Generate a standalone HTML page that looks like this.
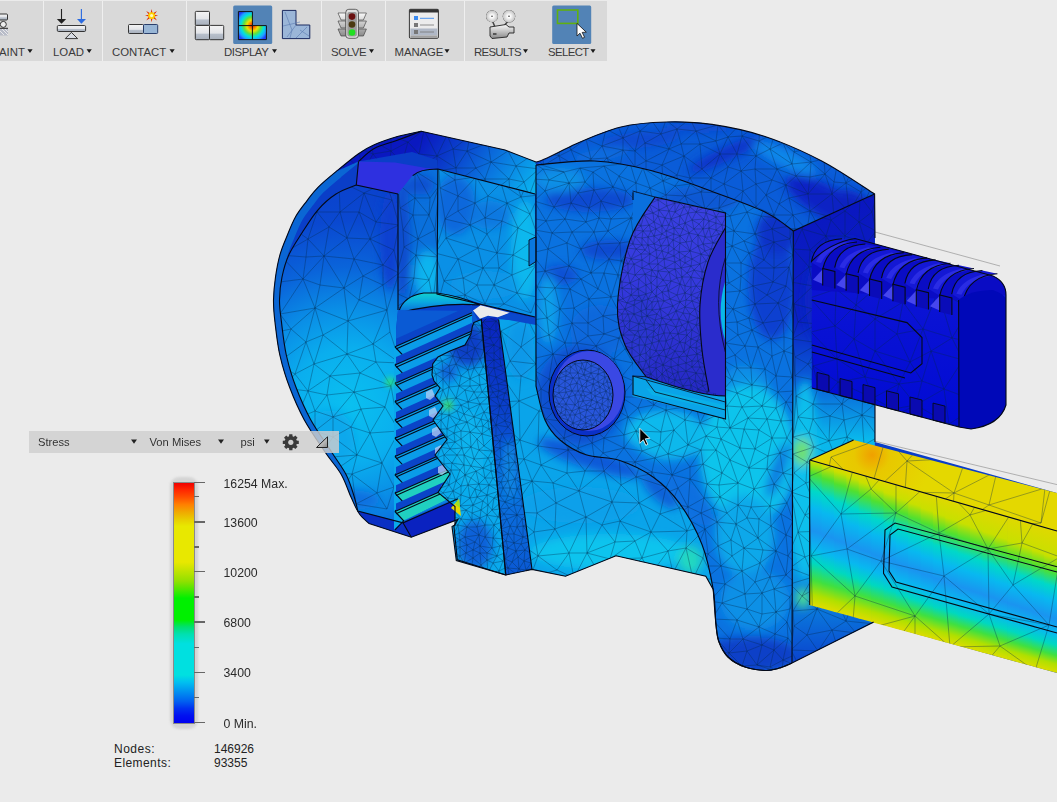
<!DOCTYPE html>
<html><head><meta charset="utf-8">
<style>
html,body{margin:0;padding:0;}
body{width:1057px;height:802px;overflow:hidden;background:#ebebeb;position:relative;font-family:"Liberation Sans",sans-serif;}
.abs{position:absolute;}
#tb{position:absolute;left:0;top:0;width:607px;height:61px;background:#d9d9d9;}
.sep{position:absolute;top:1px;width:1px;height:60px;background:#efefef;}
.lbl{position:absolute;top:46px;font-size:11.4px;color:#3a3a3a;white-space:nowrap;letter-spacing:0px;}
.arr{display:inline-block;width:0;height:0;border-left:3px solid transparent;border-right:3px solid transparent;border-top:4px solid #222;margin-left:3px;vertical-align:2px;}
#wr{position:absolute;left:0;top:0;}
#legend{position:absolute;left:29px;top:431px;width:310px;height:22px;background:rgba(206,206,206,0.82);}
.lg{position:absolute;top:5px;font-size:11.2px;color:#333;}
.tick{position:absolute;height:1px;background:#666;}
.cbl{position:absolute;font-size:12.3px;color:#2a2a2a;}
.st{position:absolute;font-size:12px;color:#222;}
</style></head>
<body>
<svg id="wr" width="1057" height="802" viewBox="0 0 1057 802">
<defs>
<filter id="bl5" x="-50%" y="-50%" width="200%" height="200%"><feGaussianBlur stdDeviation="5"/></filter>
<filter id="bl3" x="-50%" y="-50%" width="200%" height="200%"><feGaussianBlur stdDeviation="3"/></filter>
<filter id="bl8" x="-50%" y="-50%" width="200%" height="200%"><feGaussianBlur stdDeviation="8"/></filter>
<linearGradient id="hf" gradientUnits="userSpaceOnUse" x1="900" y1="486" x2="872" y2="630">
<stop offset="0" stop-color="#d8dc00"/>
<stop offset="0.08" stop-color="#a8e000"/>
<stop offset="0.16" stop-color="#50e030"/>
<stop offset="0.26" stop-color="#00d8c8"/>
<stop offset="0.36" stop-color="#08b8f0"/>
<stop offset="0.5" stop-color="#1890f0"/>
<stop offset="0.62" stop-color="#08b8f0"/>
<stop offset="0.72" stop-color="#00d8c0"/>
<stop offset="0.8" stop-color="#30e040"/>
<stop offset="0.88" stop-color="#a0e000"/>
<stop offset="1" stop-color="#e0dc00"/>
</linearGradient>
<radialGradient id="ht" gradientUnits="userSpaceOnUse" cx="872" cy="455" r="60">
<stop offset="0" stop-color="#f0a000"/>
<stop offset="0.3" stop-color="#e8c800"/>
<stop offset="1" stop-color="#e4d800"/>
</radialGradient>
<linearGradient id="sidef" gradientUnits="userSpaceOnUse" x1="0" y1="195" x2="0" y2="665">
<stop offset="0" stop-color="#0a16c0"/>
<stop offset="0.27" stop-color="#0a22c4"/>
<stop offset="0.4" stop-color="#0a60d8"/>
<stop offset="0.52" stop-color="#0ab8ec"/>
<stop offset="0.75" stop-color="#0aa4e6"/>
<stop offset="0.9" stop-color="#0a70da"/>
<stop offset="1" stop-color="#0a40cc"/>
</linearGradient>
<linearGradient id="mbf" gradientUnits="userSpaceOnUse" x1="0" y1="165" x2="0" y2="670">
<stop offset="0" stop-color="#0a58d8"/>
<stop offset="0.25" stop-color="#0a68dc"/>
<stop offset="0.5" stop-color="#0a80e0"/>
<stop offset="0.7" stop-color="#0aa0e6"/>
<stop offset="0.85" stop-color="#0a80e0"/>
<stop offset="1" stop-color="#0a40d0"/>
</linearGradient>
<linearGradient id="lbf" gradientUnits="userSpaceOnUse" x1="0" y1="320" x2="0" y2="580">
<stop offset="0" stop-color="#0a88e6"/>
<stop offset="0.5" stop-color="#0aa4ea"/>
<stop offset="1" stop-color="#0ab4e8"/>
</linearGradient>
<radialGradient id="hdf" gradientUnits="userSpaceOnUse" cx="350" cy="405" r="230">
<stop offset="0" stop-color="#0ac0f0"/>
<stop offset="0.25" stop-color="#0aaeee"/>
<stop offset="0.42" stop-color="#0a8ee6"/>
<stop offset="0.6" stop-color="#0a64da"/>
<stop offset="0.8" stop-color="#0a48d0"/>
<stop offset="1" stop-color="#0a40cc"/>
</radialGradient>
<linearGradient id="htop" gradientUnits="userSpaceOnUse" x1="425" y1="133" x2="525" y2="200">
<stop offset="0" stop-color="#0a18c0"/>
<stop offset="0.3" stop-color="#0a40cc"/>
<stop offset="0.65" stop-color="#0a78e0"/>
<stop offset="1" stop-color="#0ab0ee"/>
</linearGradient>
<linearGradient id="rollg" gradientUnits="userSpaceOnUse" x1="0" y1="197" x2="0" y2="396">
<stop offset="0" stop-color="#3a40e2"/>
<stop offset="0.5" stop-color="#3438dc"/>
<stop offset="1" stop-color="#2428c4"/>
</linearGradient>
<linearGradient id="stripg" gradientUnits="userSpaceOnUse" x1="0" y1="320" x2="0" y2="575">
<stop offset="0" stop-color="#0a24c0"/>
<stop offset="0.35" stop-color="#0a40cc"/>
<stop offset="0.7" stop-color="#0a70de"/>
<stop offset="1" stop-color="#0a58d4"/>
</linearGradient>
<linearGradient id="lensg" gradientUnits="userSpaceOnUse" x1="0" y1="293" x2="0" y2="311">
<stop offset="0" stop-color="#10d0d0"/>
<stop offset="0.5" stop-color="#0aa8e0"/>
<stop offset="1" stop-color="#0a70d8"/>
</linearGradient>
<linearGradient id="screwg" gradientUnits="userSpaceOnUse" x1="0" y1="240" x2="0" y2="430">
<stop offset="0" stop-color="#1018d4"/>
<stop offset="1" stop-color="#000ad4"/>
</linearGradient>
<clipPath id="csil"><path d="M369.0,523.5 C367.4,521.9 362.3,518.1 359.3,513.8 C356.3,509.5 354.2,504.1 351.2,497.6 C348.2,491.1 345.8,482.5 341.5,474.9 C337.2,467.3 331.4,461.4 325.2,452.2 C319.0,443.0 310.1,430.5 304.2,419.7 C298.3,408.9 293.7,398.1 289.6,387.3 C285.5,376.5 282.2,365.7 279.8,354.9 C277.4,344.1 276.1,331.5 275.0,322.4 C273.9,313.2 273.4,307.6 273.5,300.0 C273.6,292.4 274.4,284.6 275.5,277.0 C276.6,269.4 278.1,261.3 280.0,254.6 C281.9,247.9 284.1,243.0 286.7,236.7 C289.3,230.3 292.3,222.5 295.7,216.5 C299.1,210.5 303.2,205.7 306.9,200.8 C310.6,195.9 313.1,192.2 318.0,187.3 C322.9,182.4 329.2,177.2 336.0,171.6 C342.8,166.0 352.1,158.2 358.5,153.7 C364.9,149.2 367.8,147.5 374.2,144.7 C380.6,141.9 388.8,139.1 396.6,136.8 C404.5,134.6 417.2,132.1 421.3,131.2 L505,150 L536,162 C542.6,161.4 561.5,150.3 575.7,144.0 C589.9,137.7 605.9,130.7 621.0,127.0 C636.1,123.3 651.3,122.4 666.5,122.0 C681.7,121.6 695.6,122.0 712.0,124.4 C728.4,126.8 746.7,130.4 765.0,136.5 C783.3,142.6 803.4,151.4 821.7,161.0 C840.0,170.6 865.8,188.5 874.6,194.0 L875,238 L875,405 L875,442 L1057,493 L1057,673 L873.6,622 L792,663 C789.7,663.9 782.5,667.2 778.0,668.5 C773.5,669.8 770.5,670.8 765.0,670.5 C759.5,670.2 751.2,669.2 745.0,667.0 C738.8,664.8 732.3,661.2 728.0,657.0 C723.7,652.8 721.0,647.3 719.0,642.0 C717.0,636.7 717.0,633.8 716.0,625.0 C715.0,616.2 713.7,595.3 713.2,589.4 L705.8,576.3 L616,555.8 L565.5,576.3 L532,569.4 L505.8,575 L457.3,559.8 L453.9,526.2 L458,519.4 L411.3,537.2 Z"/></clipPath>
<clipPath id="c1"><path d="M793.3,231.0 L874.6,194.0 L875.0,622.0 L792.0,663.0 Z"/></clipPath>
<clipPath id="c2"><path d="M536.0,165.0 C542.6,161.4 561.5,150.3 575.7,144.0 C589.9,137.7 605.9,130.7 621.0,127.0 C636.1,123.3 651.3,122.4 666.5,122.0 C681.7,121.6 695.6,122.0 712.0,124.4 C728.4,126.8 746.7,130.4 765.0,136.5 C783.3,142.6 803.4,151.4 821.7,161.0 C840.0,170.6 865.8,188.5 874.6,194.0 L793.3,231 C788.6,227.8 778.5,218.6 765.0,212.0 C751.5,205.4 731.0,198.3 712.0,191.4 C693.0,184.5 670.6,175.6 651.0,170.5 C631.4,165.4 613.8,161.9 594.6,161.0 C575.4,160.1 545.8,164.3 536.0,165.0 Z"/></clipPath>
<clipPath id="c3"><path d="M536.0,165.0 C545.8,164.3 575.4,160.1 594.6,161.0 C613.8,161.9 631.4,165.4 651.0,170.5 C670.6,175.6 693.0,184.5 712.0,191.4 C731.0,198.3 751.5,205.4 765.0,212.0 C778.5,218.6 788.6,227.8 793.3,231.0 L792,663 C789.7,663.9 782.5,667.2 778.0,668.5 C773.5,669.8 770.5,670.8 765.0,670.5 C759.5,670.2 751.2,669.2 745.0,667.0 C738.8,664.8 732.3,661.2 728.0,657.0 C723.7,652.8 721.0,647.3 719.0,642.0 C717.0,636.7 717.0,633.8 716.0,625.0 C715.0,616.2 715.5,602.8 713.2,589.4 C710.9,576.0 707.6,558.8 702.0,544.5 C696.4,530.2 687.7,514.6 679.6,503.4 C671.5,492.2 663.4,484.4 653.4,477.2 C643.4,470.0 631.0,464.1 619.8,460.4 C608.6,456.7 596.0,458.2 586.0,454.8 C576.0,451.4 566.8,445.8 560.0,440.0 C553.2,434.2 549.0,429.0 545.0,420.0 C541.0,411.0 537.5,391.7 536.0,386.0 Z"/></clipPath>
<clipPath id="c4"><path d="M497,319 L536,322 L536,386 C537.5,391.7 541.0,411.0 545.0,420.0 C549.0,429.0 553.2,434.2 560.0,440.0 C566.8,445.8 576.0,451.4 586.0,454.8 C596.0,458.2 608.6,456.7 619.8,460.4 C631.0,464.1 643.4,470.0 653.4,477.2 C663.4,484.4 671.5,492.2 679.6,503.4 C687.7,514.6 696.4,530.2 702.0,544.5 C707.6,558.8 711.3,581.9 713.2,589.4 L705.8,576.3 L616,555.8 L565.5,576.3 L532,569.4 L505.8,575 Z"/></clipPath>
<clipPath id="c5"><path d="M398.0,194.0 L356.3,185 C352.9,186.5 342.4,189.9 336.0,194.0 C329.6,198.1 323.6,203.4 318.0,209.8 C312.4,216.2 307.2,224.7 302.4,232.2 C297.6,239.7 292.4,247.1 289.0,254.6 C285.6,262.1 283.6,269.4 282.0,277.0 C280.4,284.6 279.6,292.4 279.5,300.0 C279.4,307.6 280.4,313.2 281.5,322.4 C282.6,331.6 283.9,344.2 286.3,355.0 C288.7,365.8 291.9,376.5 296.0,387.3 C300.1,398.1 304.8,408.9 310.7,419.7 C316.6,430.5 325.8,443.0 331.7,452.2 C337.6,461.4 342.6,467.7 346.3,475.0 C350.0,482.3 352.1,490.0 354.0,496.0 C355.9,502.0 357.2,508.5 357.8,511.0 L403,522.8 L396,330 L398,310 Z"/></clipPath>
<clipPath id="c6"><path d="M421.3,131.2 L505.0,150.0 L536.0,162.0 L536.0,194.0 L437.9,169.0 L437.0,160.0 L412.0,152.0 L358.5,161.5 L336.0,171.6 L358.5,153.7 L374.2,144.7 L396.6,136.8 Z"/></clipPath>
<clipPath id="c7"><path d="M398,194 L412.7,175.6 Q420,169 437.9,169 L437,294 L400,312 L398,310 Z"/></clipPath>
<clipPath id="c8"><path d="M437.9,169.0 L535.0,194.0 L535.0,317.0 L437.0,294.0 Z"/></clipPath>
<clipPath id="c9"><path d="M473.9,322.4 L481.3,319.5 L505.8,575.0 L456.3,560.6 L452.0,526.6 L455.0,525.0 L455.0,506.5 L438.0,492.5 L450.0,474.0 L435.0,455.0 L447.0,439.5 L433.0,420.0 L443.0,406.0 L435.0,396.0 L440.0,388.0 L434.0,381.0 L432.0,375.0 L432.7,364.0 L438.0,357.0 L450.0,351.0 L465.0,345.0 L470.9,334.4 L472.4,326.2 Z"/></clipPath>
<clipPath id="c10"><path d="M481.3,319.5 L494.8,317.2 L498.6,319.5 L532.0,569.4 L505.8,575.0 Z"/></clipPath>
<clipPath id="c11"><path d="M655.0,197.0 L725.3,213.5 L725.3,396 Q700,396 646,376.7 C642.5,371.4 629.8,357.0 625.0,345.0 C620.2,333.0 616.7,322.3 617.5,304.8 C618.3,287.3 623.8,258.0 630.0,240.0 C636.2,222.0 650.8,204.2 655.0,197.0 Z"/></clipPath>
<clipPath id="c12"><path d="M553,395 A30,35 0 1,0 613,395 A30,35 0 1,0 553,395 Z"/></clipPath>
<clipPath id="c13"><path d="M811.8,261 Q830,243 855,238.5 L993,276 Q1006,282 1006,295 L1006,405 Q1000,425 971,429 L959,427 L811.8,388 Z"/></clipPath>
<clipPath id="c14"><path d="M809.7,460.0 L853.6,440.0 L1057.0,493.0 L1057.0,531.0 Z"/></clipPath>
<linearGradient id="hs0" gradientUnits="userSpaceOnUse" gradientTransform="matrix(1 0.2815 0 1 0 -227.9)" x1="815.9" y1="460" x2="815.9" y2="605"><stop offset="0.000" stop-color="#e0d800"/><stop offset="0.006" stop-color="#c8e000"/><stop offset="0.087" stop-color="#50e030"/><stop offset="0.207" stop-color="#00d8c8"/><stop offset="0.327" stop-color="#08b8f0"/><stop offset="0.484" stop-color="#1a94f0"/><stop offset="0.604" stop-color="#08b8f0"/><stop offset="0.704" stop-color="#00d8c0"/><stop offset="0.821" stop-color="#40e040"/><stop offset="0.921" stop-color="#b0e000"/><stop offset="1.000" stop-color="#e0dc00"/></linearGradient>
<linearGradient id="hs1" gradientUnits="userSpaceOnUse" gradientTransform="matrix(1 0.2815 0 1 0 -227.9)" x1="828.2" y1="460" x2="828.2" y2="605"><stop offset="0.000" stop-color="#e0d800"/><stop offset="0.018" stop-color="#c8e000"/><stop offset="0.101" stop-color="#50e030"/><stop offset="0.221" stop-color="#00d8c8"/><stop offset="0.340" stop-color="#08b8f0"/><stop offset="0.493" stop-color="#1a94f0"/><stop offset="0.612" stop-color="#08b8f0"/><stop offset="0.710" stop-color="#00d8c0"/><stop offset="0.825" stop-color="#40e040"/><stop offset="0.921" stop-color="#b0e000"/><stop offset="1.000" stop-color="#e0dc00"/></linearGradient>
<linearGradient id="hs2" gradientUnits="userSpaceOnUse" gradientTransform="matrix(1 0.2815 0 1 0 -227.9)" x1="840.6" y1="460" x2="840.6" y2="605"><stop offset="0.000" stop-color="#e0d800"/><stop offset="0.030" stop-color="#c8e000"/><stop offset="0.115" stop-color="#50e030"/><stop offset="0.235" stop-color="#00d8c8"/><stop offset="0.353" stop-color="#08b8f0"/><stop offset="0.502" stop-color="#1a94f0"/><stop offset="0.620" stop-color="#08b8f0"/><stop offset="0.718" stop-color="#00d8c0"/><stop offset="0.827" stop-color="#40e040"/><stop offset="0.923" stop-color="#b0e000"/><stop offset="1.000" stop-color="#e0dc00"/></linearGradient>
<linearGradient id="hs3" gradientUnits="userSpaceOnUse" gradientTransform="matrix(1 0.2815 0 1 0 -227.9)" x1="853.0" y1="460" x2="853.0" y2="605"><stop offset="0.000" stop-color="#e0d800"/><stop offset="0.042" stop-color="#c8e000"/><stop offset="0.129" stop-color="#50e030"/><stop offset="0.249" stop-color="#00d8c8"/><stop offset="0.365" stop-color="#08b8f0"/><stop offset="0.511" stop-color="#1a94f0"/><stop offset="0.628" stop-color="#08b8f0"/><stop offset="0.724" stop-color="#00d8c0"/><stop offset="0.831" stop-color="#40e040"/><stop offset="0.923" stop-color="#b0e000"/><stop offset="1.000" stop-color="#e0dc00"/></linearGradient>
<linearGradient id="hs4" gradientUnits="userSpaceOnUse" gradientTransform="matrix(1 0.2815 0 1 0 -227.9)" x1="865.3" y1="460" x2="865.3" y2="605"><stop offset="0.000" stop-color="#e0d800"/><stop offset="0.054" stop-color="#c8e000"/><stop offset="0.143" stop-color="#50e030"/><stop offset="0.263" stop-color="#00d8c8"/><stop offset="0.379" stop-color="#08b8f0"/><stop offset="0.520" stop-color="#1a94f0"/><stop offset="0.636" stop-color="#08b8f0"/><stop offset="0.732" stop-color="#00d8c0"/><stop offset="0.833" stop-color="#40e040"/><stop offset="0.925" stop-color="#b0e000"/><stop offset="1.000" stop-color="#e0dc00"/></linearGradient>
<linearGradient id="hs5" gradientUnits="userSpaceOnUse" gradientTransform="matrix(1 0.2815 0 1 0 -227.9)" x1="877.7" y1="460" x2="877.7" y2="605"><stop offset="0.000" stop-color="#e0d800"/><stop offset="0.066" stop-color="#c8e000"/><stop offset="0.157" stop-color="#50e030"/><stop offset="0.277" stop-color="#00d8c8"/><stop offset="0.392" stop-color="#08b8f0"/><stop offset="0.529" stop-color="#1a94f0"/><stop offset="0.644" stop-color="#08b8f0"/><stop offset="0.738" stop-color="#00d8c0"/><stop offset="0.837" stop-color="#40e040"/><stop offset="0.926" stop-color="#b0e000"/><stop offset="1.000" stop-color="#e0dc00"/></linearGradient>
<linearGradient id="hs6" gradientUnits="userSpaceOnUse" gradientTransform="matrix(1 0.2815 0 1 0 -227.9)" x1="890.1" y1="460" x2="890.1" y2="605"><stop offset="0.000" stop-color="#e0d800"/><stop offset="0.078" stop-color="#c8e000"/><stop offset="0.171" stop-color="#50e030"/><stop offset="0.291" stop-color="#00d8c8"/><stop offset="0.405" stop-color="#08b8f0"/><stop offset="0.538" stop-color="#1a94f0"/><stop offset="0.652" stop-color="#08b8f0"/><stop offset="0.746" stop-color="#00d8c0"/><stop offset="0.839" stop-color="#40e040"/><stop offset="0.927" stop-color="#b0e000"/><stop offset="1.000" stop-color="#e0dc00"/></linearGradient>
<linearGradient id="hs7" gradientUnits="userSpaceOnUse" gradientTransform="matrix(1 0.2815 0 1 0 -227.9)" x1="902.4" y1="460" x2="902.4" y2="605"><stop offset="0.000" stop-color="#e0d800"/><stop offset="0.090" stop-color="#c8e000"/><stop offset="0.185" stop-color="#50e030"/><stop offset="0.305" stop-color="#00d8c8"/><stop offset="0.417" stop-color="#08b8f0"/><stop offset="0.547" stop-color="#1a94f0"/><stop offset="0.660" stop-color="#08b8f0"/><stop offset="0.752" stop-color="#00d8c0"/><stop offset="0.843" stop-color="#40e040"/><stop offset="0.927" stop-color="#b0e000"/><stop offset="1.000" stop-color="#e0dc00"/></linearGradient>
<linearGradient id="hs8" gradientUnits="userSpaceOnUse" gradientTransform="matrix(1 0.2815 0 1 0 -227.9)" x1="914.8" y1="460" x2="914.8" y2="605"><stop offset="0.000" stop-color="#e0d800"/><stop offset="0.102" stop-color="#c8e000"/><stop offset="0.199" stop-color="#50e030"/><stop offset="0.319" stop-color="#00d8c8"/><stop offset="0.430" stop-color="#08b8f0"/><stop offset="0.556" stop-color="#1a94f0"/><stop offset="0.668" stop-color="#08b8f0"/><stop offset="0.760" stop-color="#00d8c0"/><stop offset="0.845" stop-color="#40e040"/><stop offset="0.929" stop-color="#b0e000"/><stop offset="1.000" stop-color="#e0dc00"/></linearGradient>
<linearGradient id="hs9" gradientUnits="userSpaceOnUse" gradientTransform="matrix(1 0.2815 0 1 0 -227.9)" x1="927.2" y1="460" x2="927.2" y2="605"><stop offset="0.000" stop-color="#e0d800"/><stop offset="0.114" stop-color="#c8e000"/><stop offset="0.213" stop-color="#50e030"/><stop offset="0.333" stop-color="#00d8c8"/><stop offset="0.444" stop-color="#08b8f0"/><stop offset="0.565" stop-color="#1a94f0"/><stop offset="0.676" stop-color="#08b8f0"/><stop offset="0.766" stop-color="#00d8c0"/><stop offset="0.849" stop-color="#40e040"/><stop offset="0.929" stop-color="#b0e000"/><stop offset="1.000" stop-color="#e0dc00"/></linearGradient>
<linearGradient id="hs10" gradientUnits="userSpaceOnUse" gradientTransform="matrix(1 0.2815 0 1 0 -227.9)" x1="939.5" y1="460" x2="939.5" y2="605"><stop offset="0.000" stop-color="#e0d800"/><stop offset="0.124" stop-color="#c8e000"/><stop offset="0.224" stop-color="#50e030"/><stop offset="0.343" stop-color="#00d8c8"/><stop offset="0.453" stop-color="#08b8f0"/><stop offset="0.573" stop-color="#1a94f0"/><stop offset="0.682" stop-color="#08b8f0"/><stop offset="0.772" stop-color="#00d8c0"/><stop offset="0.851" stop-color="#40e040"/><stop offset="0.930" stop-color="#b0e000"/><stop offset="1.000" stop-color="#e0dc00"/></linearGradient>
<linearGradient id="hs11" gradientUnits="userSpaceOnUse" gradientTransform="matrix(1 0.2815 0 1 0 -227.9)" x1="951.9" y1="460" x2="951.9" y2="605"><stop offset="0.000" stop-color="#e0d800"/><stop offset="0.132" stop-color="#c8e000"/><stop offset="0.232" stop-color="#50e030"/><stop offset="0.349" stop-color="#00d8c8"/><stop offset="0.458" stop-color="#08b8f0"/><stop offset="0.577" stop-color="#1a94f0"/><stop offset="0.686" stop-color="#08b8f0"/><stop offset="0.774" stop-color="#00d8c0"/><stop offset="0.853" stop-color="#40e040"/><stop offset="0.930" stop-color="#b0e000"/><stop offset="1.000" stop-color="#e0dc00"/></linearGradient>
<linearGradient id="hs12" gradientUnits="userSpaceOnUse" gradientTransform="matrix(1 0.2815 0 1 0 -227.9)" x1="964.3" y1="460" x2="964.3" y2="605"><stop offset="0.000" stop-color="#e0d800"/><stop offset="0.140" stop-color="#c8e000"/><stop offset="0.240" stop-color="#50e030"/><stop offset="0.355" stop-color="#00d8c8"/><stop offset="0.463" stop-color="#08b8f0"/><stop offset="0.583" stop-color="#1a94f0"/><stop offset="0.690" stop-color="#08b8f0"/><stop offset="0.778" stop-color="#00d8c0"/><stop offset="0.855" stop-color="#40e040"/><stop offset="0.930" stop-color="#b0e000"/><stop offset="1.000" stop-color="#e0dc00"/></linearGradient>
<linearGradient id="hs13" gradientUnits="userSpaceOnUse" gradientTransform="matrix(1 0.2815 0 1 0 -227.9)" x1="976.6" y1="460" x2="976.6" y2="605"><stop offset="0.000" stop-color="#e0d800"/><stop offset="0.148" stop-color="#c8e000"/><stop offset="0.248" stop-color="#50e030"/><stop offset="0.361" stop-color="#00d8c8"/><stop offset="0.468" stop-color="#08b8f0"/><stop offset="0.588" stop-color="#1a94f0"/><stop offset="0.694" stop-color="#08b8f0"/><stop offset="0.781" stop-color="#00d8c0"/><stop offset="0.857" stop-color="#40e040"/><stop offset="0.930" stop-color="#b0e000"/><stop offset="1.000" stop-color="#e0dc00"/></linearGradient>
<linearGradient id="hs14" gradientUnits="userSpaceOnUse" gradientTransform="matrix(1 0.2815 0 1 0 -227.9)" x1="989.0" y1="460" x2="989.0" y2="605"><stop offset="0.000" stop-color="#e0d800"/><stop offset="0.156" stop-color="#c8e000"/><stop offset="0.256" stop-color="#50e030"/><stop offset="0.367" stop-color="#00d8c8"/><stop offset="0.473" stop-color="#08b8f0"/><stop offset="0.592" stop-color="#1a94f0"/><stop offset="0.698" stop-color="#08b8f0"/><stop offset="0.783" stop-color="#00d8c0"/><stop offset="0.859" stop-color="#40e040"/><stop offset="0.930" stop-color="#b0e000"/><stop offset="1.000" stop-color="#e0dc00"/></linearGradient>
<linearGradient id="hs15" gradientUnits="userSpaceOnUse" gradientTransform="matrix(1 0.2815 0 1 0 -227.9)" x1="1001.4" y1="460" x2="1001.4" y2="605"><stop offset="0.000" stop-color="#e0d800"/><stop offset="0.164" stop-color="#c8e000"/><stop offset="0.264" stop-color="#50e030"/><stop offset="0.373" stop-color="#00d8c8"/><stop offset="0.478" stop-color="#08b8f0"/><stop offset="0.598" stop-color="#1a94f0"/><stop offset="0.702" stop-color="#08b8f0"/><stop offset="0.786" stop-color="#00d8c0"/><stop offset="0.861" stop-color="#40e040"/><stop offset="0.930" stop-color="#b0e000"/><stop offset="1.000" stop-color="#e0dc00"/></linearGradient>
<linearGradient id="hs16" gradientUnits="userSpaceOnUse" gradientTransform="matrix(1 0.2815 0 1 0 -227.9)" x1="1013.7" y1="460" x2="1013.7" y2="605"><stop offset="0.000" stop-color="#e0d800"/><stop offset="0.172" stop-color="#c8e000"/><stop offset="0.272" stop-color="#50e030"/><stop offset="0.379" stop-color="#00d8c8"/><stop offset="0.482" stop-color="#08b8f0"/><stop offset="0.602" stop-color="#1a94f0"/><stop offset="0.706" stop-color="#08b8f0"/><stop offset="0.789" stop-color="#00d8c0"/><stop offset="0.863" stop-color="#40e040"/><stop offset="0.930" stop-color="#b0e000"/><stop offset="1.000" stop-color="#e0dc00"/></linearGradient>
<linearGradient id="hs17" gradientUnits="userSpaceOnUse" gradientTransform="matrix(1 0.2815 0 1 0 -227.9)" x1="1026.1" y1="460" x2="1026.1" y2="605"><stop offset="0.000" stop-color="#e0d800"/><stop offset="0.180" stop-color="#c8e000"/><stop offset="0.280" stop-color="#50e030"/><stop offset="0.385" stop-color="#00d8c8"/><stop offset="0.487" stop-color="#08b8f0"/><stop offset="0.607" stop-color="#1a94f0"/><stop offset="0.710" stop-color="#08b8f0"/><stop offset="0.792" stop-color="#00d8c0"/><stop offset="0.865" stop-color="#40e040"/><stop offset="0.930" stop-color="#b0e000"/><stop offset="1.000" stop-color="#e0dc00"/></linearGradient>
<linearGradient id="hs18" gradientUnits="userSpaceOnUse" gradientTransform="matrix(1 0.2815 0 1 0 -227.9)" x1="1038.5" y1="460" x2="1038.5" y2="605"><stop offset="0.000" stop-color="#e0d800"/><stop offset="0.188" stop-color="#c8e000"/><stop offset="0.288" stop-color="#50e030"/><stop offset="0.391" stop-color="#00d8c8"/><stop offset="0.492" stop-color="#08b8f0"/><stop offset="0.613" stop-color="#1a94f0"/><stop offset="0.714" stop-color="#08b8f0"/><stop offset="0.796" stop-color="#00d8c0"/><stop offset="0.867" stop-color="#40e040"/><stop offset="0.930" stop-color="#b0e000"/><stop offset="1.000" stop-color="#e0dc00"/></linearGradient>
<linearGradient id="hs19" gradientUnits="userSpaceOnUse" gradientTransform="matrix(1 0.2815 0 1 0 -227.9)" x1="1050.8" y1="460" x2="1050.8" y2="605"><stop offset="0.000" stop-color="#e0d800"/><stop offset="0.196" stop-color="#c8e000"/><stop offset="0.296" stop-color="#50e030"/><stop offset="0.397" stop-color="#00d8c8"/><stop offset="0.497" stop-color="#08b8f0"/><stop offset="0.617" stop-color="#1a94f0"/><stop offset="0.718" stop-color="#08b8f0"/><stop offset="0.798" stop-color="#00d8c0"/><stop offset="0.869" stop-color="#40e040"/><stop offset="0.930" stop-color="#b0e000"/><stop offset="1.000" stop-color="#e0dc00"/></linearGradient>
<clipPath id="chf"><path d="M809.7,460.0 L1057.0,531.0 L1057.0,673.0 L809.7,605.0 Z"/></clipPath>
</defs>
<path fill="#0a3ec8"  d="M369.0,523.5 C367.4,521.9 362.3,518.1 359.3,513.8 C356.3,509.5 354.2,504.1 351.2,497.6 C348.2,491.1 345.8,482.5 341.5,474.9 C337.2,467.3 331.4,461.4 325.2,452.2 C319.0,443.0 310.1,430.5 304.2,419.7 C298.3,408.9 293.7,398.1 289.6,387.3 C285.5,376.5 282.2,365.7 279.8,354.9 C277.4,344.1 276.1,331.5 275.0,322.4 C273.9,313.2 273.4,307.6 273.5,300.0 C273.6,292.4 274.4,284.6 275.5,277.0 C276.6,269.4 278.1,261.3 280.0,254.6 C281.9,247.9 284.1,243.0 286.7,236.7 C289.3,230.3 292.3,222.5 295.7,216.5 C299.1,210.5 303.2,205.7 306.9,200.8 C310.6,195.9 313.1,192.2 318.0,187.3 C322.9,182.4 329.2,177.2 336.0,171.6 C342.8,166.0 352.1,158.2 358.5,153.7 C364.9,149.2 367.8,147.5 374.2,144.7 C380.6,141.9 388.8,139.1 396.6,136.8 C404.5,134.6 417.2,132.1 421.3,131.2 L505,150 L536,162 C542.6,161.4 561.5,150.3 575.7,144.0 C589.9,137.7 605.9,130.7 621.0,127.0 C636.1,123.3 651.3,122.4 666.5,122.0 C681.7,121.6 695.6,122.0 712.0,124.4 C728.4,126.8 746.7,130.4 765.0,136.5 C783.3,142.6 803.4,151.4 821.7,161.0 C840.0,170.6 865.8,188.5 874.6,194.0 L875,238 L875,405 L875,442 L1057,493 L1057,673 L873.6,622 L792,663 C789.7,663.9 782.5,667.2 778.0,668.5 C773.5,669.8 770.5,670.8 765.0,670.5 C759.5,670.2 751.2,669.2 745.0,667.0 C738.8,664.8 732.3,661.2 728.0,657.0 C723.7,652.8 721.0,647.3 719.0,642.0 C717.0,636.7 717.0,633.8 716.0,625.0 C715.0,616.2 713.7,595.3 713.2,589.4 L705.8,576.3 L616,555.8 L565.5,576.3 L532,569.4 L505.8,575 L457.3,559.8 L453.9,526.2 L458,519.4 L411.3,537.2 Z"/>
<path clip-path="url(#csil)" fill="none" stroke="#0a66d4" stroke-width="15" d="M421.3,131.2 C417.2,132.1 404.5,134.6 396.6,136.8 C388.8,139.1 380.6,141.9 374.2,144.7 C367.8,147.5 364.9,149.2 358.5,153.7 C352.1,158.2 342.8,166.0 336.0,171.6 C329.2,177.2 322.9,182.4 318.0,187.3 C313.1,192.2 310.6,195.9 306.9,200.8 C303.2,205.7 299.1,210.5 295.7,216.5 C292.3,222.5 289.3,230.3 286.7,236.7 C284.1,243.0 281.9,247.9 280.0,254.6 C278.1,261.3 276.6,269.4 275.5,277.0 C274.4,284.6 273.6,292.4 273.5,300.0 C273.4,307.6 273.9,313.2 275.0,322.4 C276.1,331.5 277.4,344.1 279.8,354.9 C282.2,365.7 285.5,376.5 289.6,387.3 C293.7,398.1 298.3,408.9 304.2,419.7 C310.1,430.5 319.0,443.0 325.2,452.2 C331.4,461.4 337.2,467.3 341.5,474.9 C345.8,482.5 348.2,491.1 351.2,497.6 C354.2,504.1 356.3,509.5 359.3,513.8 C362.3,518.1 367.4,521.9 369.0,523.5"/>
<path fill="url(#sidef)"  d="M793.3,231.0 L874.6,194.0 L875.0,622.0 L792.0,663.0 Z"/>
<g clip-path="url(#c1)"><g filter="url(#bl5)"><ellipse cx="805" cy="480" rx="14" ry="100" fill="#0ac0ec" transform="rotate(0 805 480)"/><ellipse cx="802" cy="452" rx="9" ry="14" fill="#70e070" transform="rotate(0 802 452)"/><ellipse cx="803" cy="598" rx="7" ry="10" fill="#50e090" transform="rotate(0 803 598)"/><ellipse cx="860" cy="570" rx="20" ry="50" fill="#0a60d4" transform="rotate(0 860 570)"/><ellipse cx="845" cy="300" rx="40" ry="60" fill="#0a28c4" transform="rotate(0 845 300)"/></g></g>
<path clip-path="url(#c1)" fill="none" stroke="#06284a" stroke-opacity="0.5" stroke-width="0.7" d="M841 371L835 352M832 630L856 633M845 236L859 222M791 282L813 286M878 473L867 490M869 508L843 518M842 404L830 416M859 222L860 196M807 635L818 651M848 546L858 530M877 380L880 419M860 298L858 282M835 456L823 477M823 192L808 214M817 324L813 309M860 298L856 313M835 352L834 325M813 404L820 381M872 212L860 196M807 462L793 454M823 477L831 505M798 532L805 557M844 496L869 508M817 609L793 611M790 551L805 557M848 546L869 555M793 437L793 454M841 371L848 385M792 339L795 357M862 651L856 633M817 324L792 339M796 396L798 417M817 609L832 630M869 555L858 530M829 441L809 433M845 211L831 220M819 551L798 532M808 364L795 357M835 352L853 351M842 404L863 387M835 456L851 453M848 546L824 531M790 568L805 557M841 260L866 244M832 630L837 646M792 339L798 322M841 260L858 282M859 581L875 595M842 404L848 385M859 581L842 576M876 403L863 387M825 264L813 286M807 462L794 473M865 264L880 265M835 309L834 325M880 570L875 595M837 646L829 670M809 267L791 282M836 597L842 576M790 551L790 568M817 609L802 596M813 309L813 286M846 621L856 633M793 437L809 433M862 415L842 404M791 492L806 483M848 385L863 387M844 496L838 481M860 298L872 319M819 551L805 557M878 642L872 665M835 309L856 313M857 469L851 453M813 286L794 304M840 277L858 282M817 609L794 626M858 530L879 536M826 236L845 236M793 249L802 229M859 581L854 598M793 249L810 250M831 505L812 499M865 264L858 282M847 437L864 445M878 642L856 633M836 597L854 598M820 381L835 352M860 298L835 309M818 651L791 650M826 236L808 214M844 420L830 416M837 646L818 651M877 293L858 282M813 404L798 417M869 508L879 536M798 664L791 650M813 309L832 293M813 404L830 416M792 339L820 343M818 651L829 670M828 581L842 576M802 596L793 611M850 334L853 351M854 598L842 576M869 508L858 530M823 477L812 499M848 546L819 551M857 469L838 481M842 576L840 559M869 355L877 380M798 664L829 670M820 381L848 385M862 415L878 437M790 584L813 577M795 376L792 339M808 364L820 343M818 651L798 664M856 313L834 325M819 551L824 531M813 577L805 557M835 456L829 441M835 456L857 469M880 265L876 231M878 437L864 445M823 192L831 220M869 355L868 340M869 555L879 536M808 364L820 381M847 437L844 420M863 372L877 380M872 319L868 340M846 621L832 630M835 456L807 462M872 319L856 313M846 665L829 670M846 621L875 624M823 192L807 194M813 404L813 419M869 355L853 351M843 518L831 505M795 376L808 364M866 244L876 231M819 551L828 581M829 441L830 416M820 343L835 352M850 334L872 319M810 250L825 264M850 334L835 352M845 211L823 192M876 403L880 419M817 324L798 322M846 665L872 665M809 433L798 417M817 324L834 325M807 462L806 483M862 415L847 437M794 473L793 454M814 447L793 454M866 244L880 265M790 584L793 611M863 372L853 351M795 376L796 396M813 577L790 568M832 293L813 286M805 515L831 505M866 244L859 222M844 496L843 518M848 546L840 559M791 492L805 515M841 260L845 236M875 595L854 598M876 197L876 231M793 437L798 417M826 236L841 260M846 665L862 651M872 212L876 197M877 293L880 265M809 267L793 249M812 499L806 483M817 609L828 581M875 624L878 642M829 441L813 419M875 624L856 633M792 339L794 304M835 456L847 437M841 371L853 351M860 196L876 197M846 621L817 609M809 433L813 419M835 456L838 481M837 646L856 633M823 477L807 462M866 244L845 236M869 555L840 559M814 447L809 433M880 570L879 536M875 624L875 595M790 584L802 596M828 581L840 559M808 214L831 220M860 298L832 293M817 324L820 343M826 236L825 264M837 646L862 651M802 229L810 250M876 403L877 380M813 404L796 396M826 236L831 220M829 441L844 420M846 621L854 598M829 441L814 447M817 609L807 635M841 260L840 277M878 473L857 469M863 372L863 387M840 277L825 264M808 214L807 194M859 581L869 555M795 376L795 357M846 665L837 646M831 505L838 481M824 531L798 532M880 570L869 555M845 211L859 222M817 609L836 597M875 624L854 598M791 492L798 532M863 372L848 385M841 371L820 381M807 635L794 626M844 496L867 490M798 322L794 304M840 277L813 286M847 437L851 453M872 212L859 222M807 462L814 447M848 546L843 518M805 515L798 532M813 309L798 322M845 211L860 196M860 298L877 293M878 473L869 508M793 437L814 447M828 581L813 577M878 473L878 437M858 282L832 293M832 630L818 651M808 364L835 352M817 324L835 309M819 551L840 559M831 505L824 531M862 651L872 665M878 437L880 419M868 340L877 380M845 211L845 236M863 387L877 380M843 518L858 530M823 477L838 481M862 415L876 403M791 492L812 499M862 415L844 420M808 214L802 229M832 630L807 635M809 267L825 264M791 282L793 249M858 282L880 265M791 650L794 626M862 651L878 642M835 309L813 309M826 236L802 229M859 581L840 559M845 236L831 220M826 236L810 250M793 611L794 626M835 309L832 293M880 570L859 581M877 293L872 319M805 515L812 499M857 469L864 445M823 477L806 483M813 309L794 304M809 267L813 286M791 492L793 454M851 453L864 445M840 277L832 293M829 670L872 665M836 597L828 581M802 596L828 581M868 340L853 351M857 469L867 490M863 372L869 355M820 381L842 404M793 437L796 396M844 496L831 505M808 214L793 200M819 551L813 577M820 343L795 357M796 396L820 381M790 584L790 568M793 200L807 194M835 456L814 447M863 372L841 371M843 518L824 531M869 508L867 490M807 635L791 650M794 473L806 483M841 260L825 264M865 264L841 260M859 222L876 231M802 596L813 577M791 492L794 473M809 267L810 250M847 437L829 441M795 376L820 381M862 415L864 445M820 343L834 325M844 420L842 404M791 282L794 304M865 264L866 244M813 419L798 417M805 515L824 531M850 334L834 325M872 212L876 231M813 404L842 404M813 419L830 416M867 490L838 481M862 415L880 419M793 200L802 229M878 473L864 445M793 611L791 650M850 334L868 340M846 621L836 597M823 192L860 196M850 334L856 313M790 551L798 532M862 415L863 387"/>
<path fill="#0a5cd8"  d="M536.0,165.0 C542.6,161.4 561.5,150.3 575.7,144.0 C589.9,137.7 605.9,130.7 621.0,127.0 C636.1,123.3 651.3,122.4 666.5,122.0 C681.7,121.6 695.6,122.0 712.0,124.4 C728.4,126.8 746.7,130.4 765.0,136.5 C783.3,142.6 803.4,151.4 821.7,161.0 C840.0,170.6 865.8,188.5 874.6,194.0 L793.3,231 C788.6,227.8 778.5,218.6 765.0,212.0 C751.5,205.4 731.0,198.3 712.0,191.4 C693.0,184.5 670.6,175.6 651.0,170.5 C631.4,165.4 613.8,161.9 594.6,161.0 C575.4,160.1 545.8,164.3 536.0,165.0 Z"/>
<g clip-path="url(#c2)"><g filter="url(#bl5)"><ellipse cx="726" cy="154" rx="42" ry="7" fill="#0a30c8" transform="rotate(-25 726 154)"/><ellipse cx="640" cy="140" rx="40" ry="8" fill="#0a48d0" transform="rotate(-5 640 140)"/><ellipse cx="785" cy="158" rx="35" ry="9" fill="#0a88ea" transform="rotate(25 785 158)"/><ellipse cx="828" cy="203" rx="48" ry="16" fill="#0a24c4" transform="rotate(30 828 203)"/><ellipse cx="855" cy="205" rx="22" ry="12" fill="#0a20c0" transform="rotate(30 855 205)"/><ellipse cx="600" cy="155" rx="30" ry="6" fill="#0a70de" transform="rotate(-10 600 155)"/><ellipse cx="700" cy="128" rx="40" ry="5" fill="#0a48d0" transform="rotate(0 700 128)"/></g></g>
<path clip-path="url(#c2)" fill="none" stroke="#06284a" stroke-opacity="0.5" stroke-width="0.7" d="M646 161L669 149M720 154L711 178M777 169L755 169M646 161L645 143M635 167L617 181M866 172L880 160M849 212L861 192M671 207L665 194M679 232L701 229M838 160L824 159M532 175L547 187M640 131L661 134M810 211L807 230M849 134L836 123M617 181L626 203M566 192L582 189M721 231L733 229M530 220L531 233M661 134L666 120M532 124L555 119M566 192L559 210M818 123L836 123M700 144L681 144M678 197L665 194M539 198L559 210M666 120L690 119M623 150L607 158M559 210L572 210M728 167L737 154M809 148L824 159M860 150L856 162M730 203L725 216M543 166L562 169M808 194L825 174M679 232L689 225M718 125L690 119M808 194L810 211M720 154L737 154M825 174L834 182M568 126L581 127M708 208L721 231M846 183L832 194M875 129L880 160M636 212L645 227M606 129L618 126M602 146L607 158M836 142L836 123M636 212L640 199M652 190L663 182M760 123L759 141M724 184L741 171M693 213L671 207M546 226L555 235M756 207L739 215M798 137L810 132M653 203L645 227M760 123L742 136M849 212L834 218M849 134L863 138M653 203L640 199M810 211L789 198M721 231L725 216M588 208L600 199M810 177L825 174M582 189L559 181M698 192L711 192M798 119L781 119M850 122L863 124M708 208L725 216M677 175L690 178M798 137L798 119M578 167L559 156M586 139L606 129M766 195L779 204M793 215L782 228M751 224L774 215M595 227L581 229M543 166L544 152M530 220L546 213M759 141L742 136M836 142L849 134M662 165L663 182M678 197L663 182M698 192L711 178M879 214L868 221M823 137L824 159M640 131L632 119M666 120L632 119M592 173L607 158M846 183L861 192M866 172L873 183M711 192L711 178M860 150L877 146M730 203L708 208M700 144L720 154M741 123L728 137M756 184L772 180M873 183L880 160M612 207L626 203M623 138L635 151M880 160L856 162M743 191L756 207M571 150L561 136M786 185L779 204M693 213L708 208M640 131L652 121M592 173L598 185M789 198L779 204M777 169L786 185M578 167L591 159M823 137L810 132M623 150L623 138M848 225L856 234M756 156L741 171M755 169L756 156M879 214L878 228M774 215L779 204M549 140L555 119M793 215L807 230M775 133L787 131M836 142L860 150M720 154L728 167M825 174L824 159M794 152L792 164M832 194L825 174M716 141L728 137M602 146L623 138M832 194L810 211M674 219L671 207M863 206L873 183M838 160L825 174M531 187L547 187M861 192L863 206M612 207L617 181M661 134L669 149M595 227L588 208M661 134L645 143M698 192L678 197M702 169L684 156M838 160L856 162M877 146L863 138M646 161L662 165M763 232L782 228M794 152L811 162M678 197L671 207M798 119L810 132M700 144L716 141M798 137L783 143M875 129L863 124M795 229L822 233M635 167L632 188M531 148L544 152M810 177L811 162M880 160L877 146M793 215L789 198M774 215L782 228M662 165L669 149M617 181L607 158M724 184L711 192M602 146L606 129M700 144L696 131M866 172L861 192M592 173L582 189M879 214L863 206M635 167L646 175M546 226L559 210M743 191L741 171M856 234L878 228M810 211L822 233M612 207L636 212M591 159L607 158M677 129L690 119M617 181L598 185M760 123L781 119M566 192L547 187M640 131L623 138M824 159L811 162M724 184L711 178M609 225L588 208M539 198L547 187M756 156L742 136M646 175L632 188M856 234L836 232M860 150L849 134M846 183L834 182M578 167L562 169M756 207L756 184M617 181L632 188M549 140L531 148M751 224L733 229M618 126L632 119M578 167L571 150M777 169L770 149M766 195L786 185M612 207L609 225M849 212L848 225M832 194L834 218M555 119L561 136M849 212L863 206M586 139L568 126M702 169L700 144M532 175L531 148M595 227L628 233M586 139L581 127M623 138L618 126M661 134L677 129M849 134L863 124M809 148L810 132M822 233L807 230M684 156L669 149M602 146L586 139M711 178L690 178M701 229L689 225M632 188L640 199M582 189L572 210M646 161L646 175M875 129L877 146M783 143L775 133M879 214L873 183M793 215L774 215M787 131L781 119M848 225L836 232M777 169L772 180M700 144L684 156M549 140L559 156M678 197L693 213M653 203L665 194M737 154L756 156M696 131L716 141M582 189L598 185M808 194L786 185M809 148L811 162M770 149L756 156M809 148L823 137M677 129L669 149M578 167L559 181M793 215L795 229M539 198L546 213M606 129L593 125M756 207L774 215M623 150L635 151M868 221L848 225M659 221L671 207M868 221L863 206M743 191L739 215M770 149L783 143M618 126L593 125M666 120L652 121M632 119L652 121M531 187L530 220M623 150L602 146M531 187L532 175M832 194L834 182M564 222L555 235M571 150L586 139M725 216L733 229M559 210L547 187M838 160L834 182M559 156L562 169M566 192L559 181M822 233L836 232M669 149L645 143M606 129L623 138M693 213L674 219M568 126L561 136M849 212L868 221M645 143L635 151M777 169L796 176M531 233L555 235M798 137L787 131M848 225L834 218M810 211L834 218M763 232L774 215M795 229L782 228M702 169L711 178M739 215L733 229M588 208L572 210M836 142L824 159M661 134L652 121M742 136L728 137M775 133L781 119M698 192L708 208M741 123L760 123M818 123L810 132M846 183L849 212M846 183L866 172M770 149L759 141M679 232L659 221M555 119L568 126M652 190L640 199M564 222L572 210M711 192L708 208M763 232L795 229M586 139L591 159M783 143L792 164M626 203L640 199M623 150L620 167M822 233L856 234M532 124L549 140M559 181L562 169M718 125L728 137M818 123L798 119M678 197L690 178M581 229L555 235M652 190L632 188M640 131L635 151M684 156L681 144M578 167L582 189M677 175L663 182M823 137L836 123M546 226L531 233M626 203L632 188M635 167L635 151M730 203L739 215M838 160L860 150M770 149L792 164M766 195L772 180M543 166L547 187M718 125L716 141M810 177L808 194M739 215L725 216M743 191L724 184M701 229L721 231M607 158L620 167M698 192L693 213M646 161L635 167M652 190L646 175M756 207L766 195M718 125L741 123M860 150L863 138M730 203L711 192M861 192L873 183M653 203L671 207M571 150L568 126M677 129L681 144M718 125L696 131M759 141L756 156M623 138L632 119M759 141L775 133M786 185L772 180M728 167L741 171M581 229L572 210M850 122L836 123M578 167L592 173M868 221L878 228M623 150L635 167M809 148L798 137M751 224L756 207M766 195L756 184M728 167L724 184M530 220L539 198M679 232L645 227M543 166L531 148M588 208L582 189M793 215L779 204M751 224L739 215M808 194L832 194M662 165L646 175M786 185L789 198M832 194L849 212M811 162L792 164M798 119L787 131M846 183L838 160M636 212L626 203M684 156L690 178M798 137L794 152M693 213L701 229M737 154L741 171M564 222L559 210M808 194L789 198M777 169L756 156M646 161L635 151M783 143L787 131M598 185L600 199M720 154L728 137M669 149L681 144M546 226L546 213M635 167L620 167M756 184L741 171M809 148L794 152M628 233L636 212M662 165L677 175M678 197L677 175M846 183L856 162M850 122L849 134M549 140L544 152M602 146L591 159M737 154L728 137M720 154L716 141M834 218L836 232M770 149L775 133M838 160L836 142M743 191L756 184M730 203L724 184M612 207L588 208M860 150L880 160M693 213L689 225M646 175L663 182M543 166L559 156M571 150L559 156M679 232L674 219M530 220L546 226M588 208L581 229M701 229L708 208M786 185L796 176M663 182L665 194M763 232L733 229M755 169L741 171M617 181L600 199M868 221L856 234M549 140L561 136M564 222L581 229M808 194L796 176M698 192L690 178M766 195L774 215M628 233L609 225M595 227L609 225M543 166L559 181M823 137L818 123M617 181L620 167M640 131L645 143M566 192L572 210M696 131L690 119M609 225L636 212M564 222L546 226M592 173L591 159M581 127L593 125M810 177L796 176M532 124L531 148M571 150L591 159M559 181L547 187M684 156L677 175M659 221L645 227M737 154L742 136M755 169L772 180M696 131L681 144M653 203L636 212M555 119L581 127M730 203L743 191M793 215L810 211M543 166L532 175M751 224L763 232M677 129L666 120M866 172L856 162M796 176L792 164M777 169L792 164M662 165L684 156M823 137L836 142M559 156L544 152M582 189L600 199M783 143L794 152M628 233L645 227M653 203L652 190M592 173L617 181M653 203L659 221M702 169L690 178M875 129L863 138M825 174L811 162M863 138L863 124M674 219L689 225M652 190L665 194M531 187L539 198M741 123L742 136M677 129L696 131M559 210L546 213M760 123L775 133M796 176L811 162M795 229L807 230M702 169L720 154M728 167L711 178M586 139L593 125M612 207L600 199M822 233L834 218M659 221L674 219M559 156L561 136M755 169L756 184"/>
<path fill="#0a72e0"  d="M536.0,165.0 C545.8,164.3 575.4,160.1 594.6,161.0 C613.8,161.9 631.4,165.4 651.0,170.5 C670.6,175.6 693.0,184.5 712.0,191.4 C731.0,198.3 751.5,205.4 765.0,212.0 C778.5,218.6 788.6,227.8 793.3,231.0 L792,663 C789.7,663.9 782.5,667.2 778.0,668.5 C773.5,669.8 770.5,670.8 765.0,670.5 C759.5,670.2 751.2,669.2 745.0,667.0 C738.8,664.8 732.3,661.2 728.0,657.0 C723.7,652.8 721.0,647.3 719.0,642.0 C717.0,636.7 717.0,633.8 716.0,625.0 C715.0,616.2 715.5,602.8 713.2,589.4 C710.9,576.0 707.6,558.8 702.0,544.5 C696.4,530.2 687.7,514.6 679.6,503.4 C671.5,492.2 663.4,484.4 653.4,477.2 C643.4,470.0 631.0,464.1 619.8,460.4 C608.6,456.7 596.0,458.2 586.0,454.8 C576.0,451.4 566.8,445.8 560.0,440.0 C553.2,434.2 549.0,429.0 545.0,420.0 C541.0,411.0 537.5,391.7 536.0,386.0 Z"/>
<g clip-path="url(#c3)"><g filter="url(#bl5)"><ellipse cx="590" cy="200" rx="45" ry="12" fill="#0a48d0" transform="rotate(0 590 200)"/><ellipse cx="610" cy="250" rx="30" ry="10" fill="#0a48d0" transform="rotate(0 610 250)"/><ellipse cx="560" cy="275" rx="18" ry="10" fill="#0a50d4" transform="rotate(0 560 275)"/><ellipse cx="700" cy="200" rx="40" ry="14" fill="#0a58d4" transform="rotate(0 700 200)"/><ellipse cx="772" cy="285" rx="24" ry="55" fill="#0a40d0" transform="rotate(0 772 285)"/><ellipse cx="778" cy="232" rx="22" ry="22" fill="#0a30c8" transform="rotate(0 778 232)"/><ellipse cx="548" cy="310" rx="10" ry="35" fill="#0aa0ea" transform="rotate(0 548 310)"/><ellipse cx="600" cy="330" rx="30" ry="25" fill="#0a68dc" transform="rotate(0 600 330)"/><ellipse cx="580" cy="395" rx="44" ry="50" fill="#0a50d0" transform="rotate(0 580 395)"/><ellipse cx="665" cy="432" rx="40" ry="22" fill="#0abcee" transform="rotate(0 665 432)"/><ellipse cx="745" cy="390" rx="25" ry="25" fill="#0a90e6" transform="rotate(0 745 390)"/><ellipse cx="748" cy="455" rx="48" ry="70" fill="#0ac4ec" transform="rotate(0 748 455)"/><ellipse cx="778" cy="470" rx="7" ry="30" fill="#0a78e0" transform="rotate(20 778 470)"/><ellipse cx="670" cy="440" rx="35" ry="20" fill="#0ab8ec" transform="rotate(0 670 440)"/><ellipse cx="690" cy="500" rx="32" ry="12" fill="#0a70e0" transform="rotate(50 690 500)"/><ellipse cx="745" cy="535" rx="30" ry="40" fill="#0aa8ea" transform="rotate(0 745 535)"/><ellipse cx="755" cy="600" rx="35" ry="30" fill="#0a90e6" transform="rotate(0 755 600)"/><ellipse cx="750" cy="655" rx="50" ry="18" fill="#0a40c8" transform="rotate(0 750 655)"/><ellipse cx="560" cy="180" rx="25" ry="12" fill="#0a90e6" transform="rotate(0 560 180)"/></g></g>
<path clip-path="url(#c3)" fill="none" stroke="#06284a" stroke-opacity="0.5" stroke-width="0.7" d="M570 289L589 299M531 253L531 218M722 603L737 620M690 467L690 479M783 660L799 653M687 541L673 547M597 588L588 597M549 335L547 318M552 462L535 449M546 419L532 419M792 377L799 403M685 172L663 181M618 589L597 588M786 575L797 564M716 638L709 651M723 360L735 355M721 566L703 581M788 556L786 575M556 575L568 571M614 461L601 482M610 376L608 395M644 305L624 295M630 592L626 609M680 662L695 675M630 560L632 574M553 589L553 610M660 445L642 451M552 462L569 458M586 222L589 208M608 494L595 498M560 309L545 299M685 420L684 407M653 507L655 530M754 184L742 176M552 462L557 450M690 653L680 662M723 360L713 347M586 568L574 560M682 244L665 245M594 429L586 418M774 268L773 282M749 468L768 456M732 246L719 249M626 191L613 187M663 494L648 486M752 398L767 387M630 592L618 589M715 181L720 193M578 584L588 597M637 202L650 188M792 377L784 351M574 308L570 289M653 202L668 211M633 363L625 349M680 321L663 304M679 608L694 616M542 602L553 589M539 469L556 480M640 522L629 513M764 260L774 268M668 211L693 216M541 389L535 371M626 191L623 207M578 527L587 545M653 345L634 337M712 619L710 601M635 462L652 472M662 272L650 266M757 665L747 651M608 494L629 483M621 261L634 241M636 264L631 275M567 243L548 249M531 501L550 492M712 619L737 620M610 531L614 545M680 321L692 337M747 212L734 231M559 371L571 368M625 326L619 338M621 397L608 395M581 249L569 266M720 497L738 505M754 184L733 191M568 536L572 516M574 560L568 571M660 445L655 458M636 431L642 451M689 288L697 271M540 630L549 647M667 390L666 410M666 536L676 528M632 495L629 513M767 469L768 456M647 280L636 287M588 653L599 644M627 625L637 615M672 228L657 223M783 183L795 179M656 550L673 547M640 522L635 537M579 662L574 674M754 489L774 484M800 463L780 453M757 665L770 667M571 203L569 183M752 385L732 380M615 575L632 574M566 602L553 589M786 402L794 391M578 638L593 621M672 475L683 457M586 506L572 516M636 431L628 417M723 165L748 164M786 286L795 294M689 520L705 529M795 179L795 192M614 545L601 544M614 424L613 408M614 359L619 338M668 629L663 619M708 554L705 529M568 536L555 532M799 341L791 310M588 336L588 323M559 371L568 356M547 439L546 419M580 466L569 458M800 463L795 448M732 380L737 393M676 296L689 288M552 233L535 230M776 551L763 550M732 380L737 368M663 181L666 195M594 556L601 544M717 293L740 291M695 589L698 602M657 673L682 674M649 386L643 397M549 335L565 343M758 347L765 369M772 438L781 421M581 249L598 244M582 379L563 384M586 222L572 232M760 563L770 577M667 258L655 252M545 299L537 287M559 371L553 354M786 575L797 584M559 371L549 379M600 358L593 368M755 582L762 593M761 216L777 218M795 665L783 660M679 636L702 637M710 390L699 386M744 241L755 234M558 327L549 335M736 524L727 513M541 407L555 396M726 665L729 653M623 207L613 187M614 424L624 435M684 356L692 337M655 458L635 462M653 345L671 357M786 402L799 403M636 264L650 266M752 385L767 387M732 246L744 241M708 554L696 551M742 176L729 175M703 464L707 484M790 597L790 609M545 271L537 287M749 468L738 483M634 241L643 227M653 345L643 357M596 346L619 338M552 631L564 616M586 490L566 489M717 522L713 508M700 370L701 352M639 551L642 565M719 208L715 219M615 562L615 575M787 438L780 453M547 439L535 449M742 407L727 406M536 358L553 354M755 304L763 323M700 423L685 420M627 625L615 616M560 557L574 560M634 381L649 386M757 665L774 650M569 183L580 168M574 308L560 309M765 167L748 164M555 410L568 395M770 667L783 660M740 291L741 276M761 216L772 229M695 589L682 597M532 179L532 162M668 646L668 666M702 637L709 651M634 381L644 371M553 610L564 616M758 538L747 518M759 430L767 419M761 216L755 234M594 429L592 443M627 625L637 644M700 370L684 356M566 489L550 492M725 263L719 249M565 343L568 356M598 289L589 299M619 176L636 183M787 438L795 448M603 316L620 314M558 517L555 532M772 438L780 453M610 531L601 544M535 230L531 218M797 584L790 609M687 541L705 529M611 219L599 218M777 218L798 212M734 231L730 216M772 438L759 430M752 398L752 385M543 514L553 505M604 334L588 323M784 337L799 341M767 419L748 418M625 349L643 357M706 436L717 427M786 535L798 540M749 253L732 246M564 172L580 168M579 662L596 670M638 672L611 673M565 219L552 233M623 207L611 219M759 627L775 634M710 601L698 602M703 464L690 479M749 253L754 268M642 656L638 672M716 638L730 639M675 373L656 361M674 430L688 445M762 406L767 387M572 232L552 233M770 667L774 650M760 563L744 548M786 575L770 577M675 373L684 356M603 567L597 588M772 229L777 218M723 360L726 343M596 670L574 674M774 242L790 239M560 557L553 544M652 472L637 474M611 297L598 289M778 303L767 295M759 519L758 538M566 489L589 478M762 406L767 419M712 619L702 637M674 430L666 410M597 605L593 621M591 530L587 545M625 326L620 314M726 343L722 323M722 603L745 594M693 216L685 196M701 513L717 522M744 429L748 418M687 541L696 551M537 549L534 584M600 518L586 506M740 448L721 439M555 410L555 396M747 518L738 505M668 646L690 653M639 551L656 550M685 172L694 163M578 584L553 589M665 520L672 503M541 407L541 389M644 305L655 290M586 490L589 478M635 462L637 474M591 273L581 279M636 431L624 435M610 531L600 518M581 249L591 273M784 351L776 376M702 664L690 653M689 288L678 283M604 438L624 448M795 179L790 168M548 249L569 266M658 565L673 547M589 208L599 218M618 275L621 261M578 638L588 653M640 522L620 523M653 640L658 658M668 454L688 445M532 320L547 318M533 300L545 299M624 448L642 451M712 619L730 639M667 390L655 374M666 589L672 569M652 472L672 475M571 368L593 368M788 638L783 660M657 673L638 672M759 627L743 639M722 603L725 584M568 536L587 545M772 229L755 234M765 369L776 376M555 396L568 395M574 560L568 536M536 358L534 340M772 438L767 419M672 339L671 357M783 183L790 168M735 355L737 368M552 233L546 221M541 389L532 397M689 520L677 516M634 381L622 376M755 582L745 594M566 502L553 505M703 464L716 450M770 506L754 489M535 449L557 450M772 438L755 449M723 165L729 175M640 522L655 530M617 633L610 649M772 229L790 239M672 503L678 488M710 390L709 405M668 629L679 608M604 438L594 429M747 518L751 507M581 357L568 356M770 506L771 526M733 191L720 193M764 260L761 247M655 290L647 280M715 181L729 175M587 545L601 544M545 271L569 266M792 377L778 392M625 349L619 338M567 422L555 410M783 183L777 164M701 513L705 529M754 184L765 167M593 172L585 182M759 519L771 526M601 201L599 218M643 168L636 183M773 282L767 295M625 326L633 311M616 508L629 513M774 242L793 255M781 514L771 526M653 202L657 223M607 660L599 644M601 201L611 219M565 219L586 222M617 633L637 644M685 196L701 192M743 639L729 653M656 361L655 374M686 388L684 407M788 638L774 650M762 614L762 593M552 233L548 249M762 614L776 612M787 622L788 638M566 630L564 616M591 401L586 418M752 398L742 407M642 581L656 577M615 616L604 629M609 259L604 273M643 420L666 410M566 489L565 472M563 384L549 379M716 450L701 450M774 589L797 584M656 361L643 357M659 166L630 163M638 408L621 397M569 183L545 191M604 166L580 168M759 430L748 418M786 535L771 526M778 303L783 320M656 320L663 304M659 166L663 181M703 464L701 450M634 241L640 252M790 597L797 584M626 191L637 202M537 549L553 544M727 513L738 505M567 422L586 418M720 497L707 484M776 376L767 387M625 326L603 316M730 428L727 406M542 602L553 610M696 406L710 390M614 461L595 463M647 280L631 275M685 196L690 184M578 584L566 602M709 278L729 283M672 339L692 337M659 334L668 322M586 568L603 567M591 273L609 259M742 407L748 418M696 406L699 386M741 200L747 212M770 506L751 507M702 664L709 651M586 568L568 571M687 541L684 554M582 431L586 418M619 176L626 191M679 608L698 602M758 538L763 550M767 469L780 453M732 380L715 369M644 371L655 374M641 507L629 513M609 259L618 275M752 398L762 406M709 278L697 271M666 195L675 186M586 490L601 482M759 519L751 507M578 584L568 571M733 191L742 176M690 304L676 296M639 551L635 537M687 260L697 271M702 247L719 249M621 261L640 252M553 354L549 379M704 328L722 323M672 475L690 479M644 371L643 357M614 461L619 475M668 454L672 475M662 272L674 270M668 629L668 646M759 519L770 506M533 300L537 287M799 341L797 355M693 216L699 230M662 272L647 280M682 244L687 260M754 184L767 180M667 390L686 388M540 482L531 501M552 462L565 472M738 483L738 505M752 385L737 393M580 466L589 478M736 524L744 548M705 209L685 196M784 351L772 356M589 208L594 190M767 419L776 408M553 589L534 584M637 644L653 640M581 357L596 346M643 420L636 431M668 666L658 658M783 320L763 323M636 183L650 188M631 218L637 202M569 183L578 193M762 406L748 418M580 466L595 463M736 524L717 522M742 571L755 582M593 172L580 168M656 550L658 565M569 183L554 207M717 293L705 305M626 609L637 615M718 546L705 529M754 489L738 505M635 462L619 475M539 672L574 674M699 386L715 369M555 288L545 299M556 575L560 557M789 267L774 268M708 172L701 192M668 646L658 658M701 192L720 193M712 265L719 249M705 209L701 192M553 354L535 371M579 662L588 653M724 389L732 380M589 299L588 323M668 629L647 625M620 243L621 261M532 179L545 191M721 439L717 427M726 665L695 675M548 249L535 230M742 407L737 393M774 589L770 577M783 473L780 453M679 608L682 597M730 460L716 450M720 307L722 323M631 218L646 216M701 450L706 436M599 410L594 429M601 201L594 190M604 438L592 443M603 316L589 299M630 560L639 551M747 212L755 234M591 273L604 273M747 651L729 653M603 316L604 334M722 323L733 309M722 603L710 601M708 172L690 184M741 200L769 198M718 546L708 554M663 181L677 162M572 323L577 343M783 320L771 339M685 577L695 589M552 462L539 469M754 489L751 507M653 202L650 188M619 176L630 163M610 531L591 530M733 309L749 318M647 280L650 266M665 520L666 536M597 605L615 604M684 356L701 352M611 673L574 674M580 607L564 616M789 267L773 282M758 347L772 356M630 592L642 581M770 506L774 484M726 665L742 666M730 639L729 653M540 568L537 549M634 381L643 397M752 330L737 322M774 268L754 268M759 627L762 645M640 522L653 507M585 182L580 168M774 589L762 593M624 448L624 435M774 589L776 612M574 560L587 545M614 461L603 453M665 245L655 252M642 656L623 662M533 300L531 273M632 495L648 486M623 207L637 202M594 232L599 218M786 402L778 392M599 410L591 401M709 651L729 653M601 201L589 208M768 456L755 449M760 563L742 571M744 429L759 430M714 234L719 249M708 554L721 566M685 196L666 195M592 443L582 431M790 597L776 612M624 448L635 462M535 449L534 431M668 629L653 640M720 307L733 309M580 466L565 472M674 430L660 445M751 368L737 368M747 609L762 614M574 308L572 323M625 326L604 334M629 513L620 523M578 638L563 643M716 450L706 436M615 562L594 556M672 569L673 547M696 406L686 388M553 354L534 340M597 588L615 604M534 201L546 221M718 546L731 540M771 339L763 323M668 629L679 636M761 216L769 198M787 438L796 420M705 209L720 193M624 295L620 314M569 458L557 450M637 474L648 486M578 527L586 506M712 265L697 271M736 524L758 538M774 242L774 268M592 443L578 448M665 245L667 258M560 557L568 571M630 592L644 597M534 201L545 191M753 286L767 295M564 172L569 183M719 414L717 427M715 219L730 216M787 438L772 438M582 379L591 401M790 597L774 589M555 288L537 287M691 564L672 569M658 565L656 577M621 261L631 275M759 627L776 612M696 406L709 405M753 286L741 276M752 330L749 318M666 536L655 530M789 267L795 294M534 431L532 419M582 379L571 368M740 448L755 449M614 545L635 537M621 397L628 417M594 429L582 431M725 263L741 276M759 519L747 518M536 616L552 631M542 602L536 616M705 209L699 230M614 545L615 562M672 503L653 507M674 270L667 258M724 389L710 390M601 385L591 401M565 219L546 221M678 488L672 475M633 363L643 357M742 571L744 548M531 652L539 672M552 233L567 243M672 228L693 216M749 468L754 489M589 208L578 193M585 182L594 190M722 473L730 460M616 508L620 523M685 577L682 597M667 390L654 405M770 506L787 503M730 460L738 483M688 507L677 516M625 349L614 359M717 522L705 529M631 218L634 241M799 403L796 420M668 666L682 674M594 190L578 193M705 529L696 551M760 563L755 582M757 665L742 666M730 428L748 418M758 347L771 339M731 540L744 548M695 589L703 581M568 536L553 544M696 406L685 420M581 622L578 638M532 397L535 371M543 514L531 518M731 540L717 522M636 264L621 261M787 438L781 421M789 203L798 212M720 497L727 513M744 429L755 449M777 164L765 167M591 401L608 395M618 589L615 604M732 246L734 231M755 582L770 577M685 577L672 569M770 506L781 514M662 272L667 258M596 670L588 653M624 295L633 311M534 201L554 207M596 346L577 343M643 168L630 163M579 404L591 401M742 571L732 556M733 191L729 175M741 200L730 216M666 589L644 597M762 406L776 408M710 390L715 369M622 376L610 376M579 404L582 379M741 200L719 208M783 183L795 192M541 407L532 419M757 665L762 645M666 536L673 547M649 608L637 615M531 273L537 287M549 663L539 672M731 540L732 556M778 303L763 323M604 166L630 163M545 271L564 278M730 428L721 439M541 534L553 544M623 662L638 672M642 565L656 577M720 497L704 498M666 195L650 188M643 168L650 188M642 451L655 458M782 673L783 660M564 172L543 169M626 191L636 183M762 645L774 650M601 482L589 478M743 639L737 620M565 219L554 207M565 219L572 232M546 419L534 431M723 360L737 368M644 305L663 304M638 408L628 417M581 622L593 621M682 597L698 602M566 502L558 517M633 311L620 314M549 180L569 183M618 275L604 273M627 625L647 625M678 488L690 479M535 371L549 379M610 531L635 537M737 322L722 323M566 502L572 516M769 198L777 218M709 278L689 288M745 594L762 593M568 395L563 384M608 494L601 482M653 507L648 486M789 203L777 218M614 359L596 346M783 183L769 198M778 392L767 387M693 319L690 304M690 467L683 457M582 379L568 395M601 482L619 475M762 593L770 577M620 243L608 231M565 657L574 674M574 560L594 556M660 445L636 431M581 249L567 243M700 423L719 414M624 448L603 453M725 584L710 601M656 320L633 311M755 234L761 247M722 473L707 484M599 410L608 395M716 638L702 637M581 622L580 607M710 601L703 581M596 670L611 673M741 263L732 246M613 408L628 417M680 321L668 322M604 438L624 435M759 430L755 449M629 483L648 486M753 286L740 291M631 218L620 243M637 644L623 662M741 263L754 268M643 168L659 166M642 565L658 565M642 656L653 640M594 232L608 231M566 602L580 607M536 358L535 371M629 483L637 474M685 172L708 172M755 234L734 231M754 268L741 276M726 343L735 355M611 297L620 314M737 322L733 309M720 497L719 485M687 260L674 270M586 222L571 203M600 518L595 498M730 428L742 407M615 616L593 621M545 271L548 249M757 665L782 673M586 222L594 232M610 649L599 644M767 180L777 164M547 439L564 438M744 548L732 556M638 408L654 405M585 182L578 193M665 520L677 516M672 339L684 356M656 361L644 371M564 438L582 431M740 291L733 309M652 472L648 486M603 316L588 323M672 339L659 334M693 216L705 209M620 243L609 259M755 304L778 303M724 389L709 405M630 560L614 545M771 339L784 351M578 638L565 657M591 530L586 506M726 343L713 347M600 358L596 346M787 622L790 609M586 490L595 498M747 609L759 627M591 530L601 544M705 209L715 219M688 445L701 450M700 423L688 445M685 172L677 162M712 619L698 602M533 300L532 320M656 550L666 536M701 352L715 369M666 589L682 597M702 664L726 665M705 566L696 551M581 357L571 368M693 319L704 328M564 438L578 448M668 646L679 636M797 584L797 564M647 625L637 615M580 607L588 597M566 502L566 489M689 520L688 507M601 201L613 187M787 622L775 634M560 557L568 536M685 172L675 186M636 287L631 275M534 201L531 218M531 501L539 469M747 609L722 603M553 354L565 343M676 528L673 547M770 667L782 673M774 268L793 255M643 420L628 417M540 568L556 575M542 602L534 584M601 201L623 207M666 589L656 577M586 490L586 506M792 492L774 484M788 556L797 564M672 569L656 577M536 616L553 610M599 410L613 408M793 521L792 492M597 605L580 607M720 193L729 175M767 469L774 484M594 232L572 232M778 303L795 294M688 445L683 457M775 634L788 638M741 263L725 263M752 385L765 369M543 514L531 501M642 451L635 462M674 430L668 454M614 461L635 462M723 360L732 380M774 242L761 247M531 253L531 273M608 231L598 244M607 660L623 662M744 548L758 538M763 323L749 318M578 527L591 530M617 633L615 616M626 609L644 597M641 507L648 486M560 670L539 672M591 530L600 518M675 373L671 357M570 289L581 279M762 645L775 634M690 653L709 651M571 368L563 384M541 407L532 397M615 562L601 544M540 482L550 492M718 546L721 566M689 520L676 528M570 289L564 278M694 616L698 602M690 304L703 292M725 584L721 566M751 368L758 347M630 592L632 574M611 297L603 316M644 597L637 615M776 551L786 535M623 662L611 673M553 544L555 532M685 577L691 564M722 473L716 450M588 336L577 343M793 521L787 503M719 414L709 405M678 283L697 271M641 507L653 507M795 448L780 453M679 636L690 653M715 219L699 230M736 524L747 518M555 288L570 289M615 616L597 605M558 327L547 318M725 584L703 581M572 232L567 243M640 252L650 266M689 520L701 513M755 304L733 309M700 423L717 427M621 397L622 376M703 464L722 473M574 308L589 299M767 180L765 167M783 473L774 484M617 633L627 625M643 420L654 405M540 568L560 557M599 644L604 629M565 472L556 480M657 223L643 227M793 521L781 514M637 644L610 649M760 563L763 550M534 201L532 179M610 531L620 523M751 368L735 355M629 483L619 475M776 551L786 575M657 236L643 227M701 352L713 347M701 192L690 184M743 639L730 639M800 463L783 473M702 664L695 675M679 608L690 627M608 231L599 218M647 625L637 644M653 202L666 195M636 183L630 163M672 503L677 516M550 492L553 505M701 352L692 337M704 328L713 347M578 448L595 463M730 460L740 448M716 450L721 439M604 438L603 453M642 565L642 581M737 620L730 639M657 223L657 236M644 597L656 577M776 551L770 577M704 328L692 337M619 338L634 337M579 662L565 657M772 438L768 456M712 619L694 616M791 310L795 294M709 405L727 406M558 327L560 309M715 181L708 172M567 422L582 431M679 608L665 603M543 169L532 179M754 184L741 200M623 207L631 218M620 243L634 241M732 246L725 263M663 304L668 322M774 589L786 575M566 602L553 610M688 445L706 436M600 358L614 359M787 503L774 484M686 388L689 376M668 211L685 196M560 309L570 289M695 589L710 601M546 221L531 218M640 522L641 507M752 330L738 335M604 438L614 424M633 363L614 359M684 554L673 547M550 492L556 480M600 518L620 523M799 403L794 391M765 369L772 356M792 377L797 355M608 494L616 508M726 343L738 335M798 540L797 564M599 410L586 418M687 541L676 528M777 164L790 168M682 244L702 247M751 368L752 385M747 212L730 216M749 468L755 449M761 216L747 212M647 625L649 608M642 565L656 550M703 292L705 305M714 234L715 219M723 165L694 163M615 616L615 604M617 633L604 629M609 259L598 244M607 660L596 670M680 321L672 339M649 386L655 374M684 356L689 376M789 267L786 286M708 172L694 163M632 495L641 507M618 589L632 574M730 428L740 448M722 473L738 483M598 289L591 273M624 448L636 431M642 581L632 574M737 322L749 318M586 568L597 588M672 228L687 233M680 321L676 296M624 435L628 417M630 592L615 604M690 304L705 305M800 463L797 476M554 207L545 191M531 652L549 647M644 305L633 311M611 297L589 299M749 468L740 448M725 584L745 594M685 577L703 581M578 584L586 568M771 339L772 356M694 163L677 162M787 622L799 653M695 675L682 674M618 275L624 295M541 534L537 549M663 181L675 186M604 629L593 621M705 566L691 564M610 649L604 629M745 346L758 347M614 359L622 376M541 407L546 419M615 616L626 609M724 389L727 406M591 273L569 266M709 278L703 292M692 337L713 347M616 508L600 518M580 466L578 448M614 424L628 417M701 513L688 507M702 247L697 271M579 404L555 410M672 503L663 494M581 249L572 232M558 327L565 343M593 172L594 190M687 260L702 247M604 334L619 338M749 253L761 247M672 228L657 236M614 359L610 376M611 297L604 273M789 203L795 192M674 430L661 432M747 609L745 594M586 568L594 556M729 283L741 276M720 307L717 293M637 202L646 216M563 643L552 631M643 357L634 337M754 489L738 483M690 304L689 288M588 336L572 323M636 264L647 280M560 309L547 318M555 288L564 278M712 619L716 638M649 608L644 597M753 286L773 282M571 203L578 193M549 663L560 670M589 299L581 279M706 436L721 439M717 293L733 309M545 299L547 318M647 625L663 619M672 339L668 322M534 340L535 371M571 203L554 207M541 389L549 379M720 497L713 508M790 226L798 212M764 260L774 242M632 495L616 508M745 346L735 355M656 320L668 322M656 550L655 530M549 663L549 647M737 393L727 406M754 184L748 164M778 392L776 376M722 473L719 485M549 180L545 191M555 288L545 271M621 397L643 397M701 513L704 498M540 568L534 584M644 305L656 320M686 388L699 386M704 498L688 507M796 420L781 421M754 184L769 198M787 503L781 514M724 389L715 369M579 404L586 418M775 634L774 650M742 571L721 566M565 657L588 653M611 297L618 275M540 482L539 469M598 289L581 279M657 236L665 245M689 520L687 541M601 385L610 376M721 566L732 556M531 253L535 230M564 278L569 266M764 260L754 268M730 460L721 439M778 392L776 408M691 564L696 551M675 186L690 184M742 407L762 406M531 501L553 505M674 270L697 271M789 203L769 198M676 296L678 283M591 273L598 244M659 334L634 337M668 211L657 223M633 363L622 376M786 286L767 295M581 622L564 616M543 514L558 517M738 483L719 485M740 448L744 429M668 666L680 662M749 253L764 260M655 290L636 287M600 358L610 376M565 657L560 670M784 351L797 355M733 191L719 208M604 334L596 346M767 180L769 198M781 421L767 419M657 236L640 252M608 494L619 475M599 410L614 424M714 234L734 231M749 253L744 241M565 472L569 458M795 665L799 653M567 422L564 438M566 602L564 616M653 345L656 361M668 646L680 662M565 657L549 647M736 524L731 540M580 607L593 621M667 390L684 407M581 249L594 232M719 414L727 406M684 356L671 357M653 345L659 334M722 323L738 335M702 637L690 653M787 622L776 612M663 494L672 475M702 664L680 662M604 334L588 336M537 549L560 557M619 176L613 187M555 410L546 419M657 223L646 216M742 666L729 653M774 650L783 660M790 226L777 218M643 420L661 432M532 320L549 335M755 304L749 318M693 319L705 305M543 514L541 534M776 551L788 556M556 575L534 584M624 295L636 287M597 588L615 575M705 566L721 566M603 453L595 463M625 349L634 337M582 379L593 368M680 321L690 304M668 211L666 195M767 469L754 489M630 560L642 565M643 168L663 181M543 514L555 532M712 265L709 278M712 619L722 603M649 608L665 603M635 537L620 523M705 566L703 581M776 551L758 538M736 524L738 505M601 482L595 498M653 345L672 339M653 507L663 494M574 308L588 323M693 319L692 337M549 663L531 652M747 651L743 639M638 408L643 397M690 467L701 450M601 385L593 368M712 265L702 247M541 534L531 518M700 370L689 376M594 556L587 545M752 330L763 323M659 166L677 162M672 228L665 245M667 258L650 266M702 247L699 230M679 636L690 627M541 389L555 396M655 458L672 475M720 497L738 483M790 226L772 229M786 535L781 514M532 397L532 419M792 377L776 376M700 423L709 405M635 537L655 530M795 192L798 212M601 482L595 463M559 371L563 384M632 495L629 483M729 283L740 291M741 263L749 253M666 410L661 432M689 288L703 292M631 218L611 219M564 172L532 162M679 608L663 619M589 208L571 203M643 227L646 216M607 660L588 653M685 577L666 589M674 430L685 420M667 390L649 386M541 534L555 532M790 226L790 239M567 243L569 266M644 597L642 581M752 330L758 347M558 517L572 516M564 172L549 180M566 502L586 490M715 219L734 231M660 445L668 454M619 176L604 166M531 652L536 616M621 397L613 408M754 268L773 282M730 428L719 414M675 373L689 376M565 343L577 343M707 484L690 479M682 597L665 603M691 564L684 554M540 630L531 652M642 656L637 644M618 589L615 575M767 469L783 473M655 252L650 266M719 208L730 216M717 293L729 283M742 571L745 594M663 304L676 296M778 303L786 286M532 320L534 340M752 330L771 339M577 343L568 356M788 556L798 540M696 406L684 407M536 616L534 584M668 454L683 457M795 448L796 420M776 551L771 526M684 554L672 569M743 639L762 645M795 179L798 212M714 234L702 247M610 649L623 662M716 638L729 653M558 517L568 536M656 320L634 337M665 603L663 619M676 296L655 290M613 408L608 395M531 253L545 271M684 554L696 551M738 505L751 507M789 203L783 183M676 528L677 516M666 589L665 603M747 609L737 620M655 290L678 283M547 439L557 450M578 638L566 630M793 521L786 535M663 181L650 188M742 571L725 584M700 370L715 369M594 190L613 187M634 381L621 397M657 673L668 666M788 638L799 653M657 236L634 241M565 219L571 203M744 241L761 247M767 180L783 183M783 320L791 310M599 644L593 621M774 242L772 229M649 386L654 405M795 665L782 673M579 404L568 395M631 218L643 227M789 267L793 255M656 320L659 334M637 202L636 183M745 346L738 335M680 662L682 674M665 520L655 530M604 166L613 187M774 242L755 234M668 646L653 640M598 289L604 273M558 327L572 323M566 489L556 480M567 422L579 404M714 234L699 230M569 266L581 279M642 565L632 574M626 609L615 604M786 402L796 420M633 311L634 337M712 619L690 627M578 584L556 575M705 566L708 554M744 241L734 231M607 660L611 673M700 370L699 386M618 275L631 275M601 385L608 395M665 520L676 528M717 522L727 513M546 221L554 207M572 323L588 323M608 494L632 495M668 454L655 458M549 335L553 354M555 396L563 384M535 449L539 469M654 405L643 397M644 371L649 386M762 614L759 627M555 396L549 379M619 475L637 474M724 389L737 393M586 506L595 498M545 271L531 273M674 270L678 283M723 165L715 181M773 282L786 286M792 492L797 476M760 563L776 551M745 346L726 343M700 423L706 436M725 263L729 283M762 406L778 392M540 630L536 616M614 424L594 429M531 253L548 249M533 300L547 318M741 263L741 276M565 657L563 643M705 209L719 208M776 612L762 593M749 468L730 460M603 453L592 443M714 234L732 246M685 172L690 184M672 228L668 211M717 293L709 278M656 550L635 537M675 373L667 390M733 191L741 200M571 368L568 356M747 651L742 666M581 622L566 630M751 368L745 346M603 567L594 556M752 398L737 393M581 357L577 343M783 320L784 337M717 293L703 292M700 423L696 406M680 321L693 319M593 172L613 187M639 551L614 545M552 462L556 480M777 164L748 164M553 610L552 631M558 517L553 505M566 502L550 492M585 182L569 183M662 272L678 283M755 304L767 295M778 392L794 391M675 373L655 374M786 402L781 421M642 656L657 673M767 469L749 468M666 410L685 420M549 647L563 643M560 670L574 674M744 548L763 550M581 357L593 368M694 616L690 627M657 236L655 252M611 297L624 295M704 498L707 484M678 488L688 507M578 527L572 516M747 651L762 645M712 265L725 263M688 445L685 420M582 379L601 385M727 513L713 508M663 494L652 472M644 597L665 603M748 164L729 175M784 351L784 337M747 609L762 593M668 629L690 627M737 322L738 335M541 407L555 410M638 408L643 420M783 473L797 476M730 428L717 427M543 169L532 162M625 326L634 337M745 346L752 330M786 402L776 408M595 463L589 478M586 222L599 218M565 343L572 323M564 278L581 279M672 503L688 507M701 450L683 457M630 560L615 562M699 386L689 376M682 244L667 258M600 358L581 357M634 381L633 363M640 252L655 252M543 169L549 180M631 218L608 231M578 527L568 536M672 569L658 565M656 361L671 357M540 630L552 631M549 180L532 179M682 244L687 233M566 602L588 597M654 405L666 410M621 397L610 376M776 376L772 356M660 445L661 432M649 608L663 619M685 196L675 186M718 546L717 522M704 328L705 305M537 549L531 518M616 508L595 498M556 575L553 589M540 482L556 480M565 472L589 478M597 605L597 588M725 263L709 278M593 172L604 166M792 492L787 503M655 458L652 472M566 630L563 643M549 335L534 340M614 461L624 448M553 354L568 356M566 502L586 506M753 286L755 304M610 376L593 368M722 323L705 305M608 231L611 219M663 304L655 290M688 507L690 479M702 637L690 627M704 498L690 479M723 165L708 172M564 438L569 458M690 467L672 475M751 368L765 369M549 647L552 631M790 239L798 212M564 438L557 450M722 323L713 347M718 546L732 556M783 473L792 492M642 656L658 658M569 458L578 448M615 562L603 567M771 339L784 337M560 309L572 323M624 295L631 275M653 202L637 202M687 260L667 258M768 456L780 453M723 360L715 369M636 264L640 252M687 233L702 247M620 243L598 244M647 625L653 640M783 320L799 341M691 564L703 581M665 520L653 507M682 244L672 228M792 377L794 391M547 439L534 431M636 431L661 432M701 513L713 508M666 410L684 407M752 385L737 368M720 307L705 305M713 347L715 369M675 373L686 388M730 428L744 429M578 448L582 431M560 309L555 288M776 612L790 609M627 625L626 609M531 501L531 518M603 567L615 575M781 421L776 408M778 303L791 310M687 233L693 216M759 627L737 620M633 363L644 371M594 232L598 244M597 605L588 597M715 181L701 192M793 255L790 239M765 369L767 387M793 521L798 540M690 467L703 464M549 663L565 657M707 484L719 485M615 562L632 574M653 202L646 216M719 208L720 193M742 176L748 164M776 612L775 634M687 233L699 230M662 272L655 290M546 419L564 438M566 630L552 631M784 351L799 341M578 638L599 644M726 665L709 651M769 198L747 212M788 556L786 535M678 488L663 494M588 336L596 346M755 304L740 291M535 230L546 221M657 673L658 658M758 538L771 526M704 498L713 508M644 305L636 287M607 660L610 649M578 584L597 588M592 443L595 463M609 259L621 261M753 286L754 268M567 422L546 419"/>
<path fill="#0aa4ea"  d="M497,319 L536,322 L536,386 C537.5,391.7 541.0,411.0 545.0,420.0 C549.0,429.0 553.2,434.2 560.0,440.0 C566.8,445.8 576.0,451.4 586.0,454.8 C596.0,458.2 608.6,456.7 619.8,460.4 C631.0,464.1 643.4,470.0 653.4,477.2 C663.4,484.4 671.5,492.2 679.6,503.4 C687.7,514.6 696.4,530.2 702.0,544.5 C707.6,558.8 711.3,581.9 713.2,589.4 L705.8,576.3 L616,555.8 L565.5,576.3 L532,569.4 L505.8,575 Z"/>
<g clip-path="url(#c4)"><g filter="url(#bl5)"><ellipse cx="590" cy="458" rx="55" ry="11" fill="#0a58d8" transform="rotate(18 590 458)"/><ellipse cx="660" cy="490" rx="25" ry="10" fill="#0a60d8" transform="rotate(45 660 490)"/><ellipse cx="580" cy="505" rx="60" ry="18" fill="#0aa0ea" transform="rotate(0 580 505)"/><ellipse cx="610" cy="552" rx="80" ry="18" fill="#0ac4ee" transform="rotate(0 610 552)"/><ellipse cx="690" cy="560" rx="12" ry="14" fill="#20d8c0" transform="rotate(0 690 560)"/><ellipse cx="520" cy="350" rx="14" ry="30" fill="#0a98e8" transform="rotate(0 520 350)"/></g></g>
<path clip-path="url(#c4)" fill="none" stroke="#06284a" stroke-opacity="0.5" stroke-width="0.7" d="M579 491L604 471M539 411L538 446M688 393L680 374M612 332L585 317M612 332L640 316M610 559L635 541M574 578L557 570M547 319L585 317M693 338L673 318M499 495L506 458M555 529L534 532M700 355L680 374M538 446L524 459M579 491L586 517M656 324L667 337M679 508L697 513M693 338L682 357M534 532L537 513M539 411L558 414M615 542L635 541M642 458L669 470M709 525L697 513M688 393L695 425M567 473L553 483M610 398L608 415M668 551L651 574M610 398L631 405M704 440L679 454M700 355L682 357M519 401L498 402M709 525L686 548M709 525L714 579M538 556L534 532M600 380L615 371M642 420L608 415M711 494L712 463M687 531L651 532M642 420L631 405M541 465L553 483M647 352L667 337M647 352L621 350M536 364L554 388M499 495L532 481M536 364L557 361M538 556L569 553M636 477L619 456M520 440L506 458M615 542L620 521M669 470L662 442M693 579L673 573M585 471L567 473M679 508L660 514M687 531L679 508M632 334L621 350M521 347L501 331M590 367L592 336M612 502L620 521M576 416L591 396M682 357L680 374M679 454L695 425M579 491L585 471M539 411L520 440M520 440L498 420M667 337L673 318M668 551L651 532M623 576L642 558M569 553L586 517M632 334L612 332M629 442L619 456M585 471L604 471M604 471L621 485M590 367L621 350M710 404L695 425M541 465L524 459M530 578L538 556M647 352L654 369M704 324L673 318M538 556L519 543M704 440L695 425M667 337L682 357M706 374L680 374M568 450L593 431M558 342L557 361M612 502L639 503M710 404L712 423M536 364L536 336M673 573L651 574M590 367L580 352M604 471L619 456M576 416L558 414M687 531L697 513M555 529L556 503M587 553L574 578M679 454L712 463M704 440L712 423M573 396L554 388M599 451L611 432M706 374L710 404M668 551L687 531M636 382L615 371M629 442L662 442M659 409L674 429M541 465L567 473M621 350L615 371M541 465L538 446M502 376L510 361M580 352L592 336M687 531L686 548M587 553L602 525M573 396L591 396M599 451L604 471M688 393L706 374M704 440L712 463M530 578L557 570M694 488L697 513M610 398L636 382M567 375L573 396M679 508L666 487M659 409L642 420M502 376L521 376M656 324L640 316M647 352L656 324M587 553L602 578M700 355L706 374M556 503L553 483M679 454L669 470M501 440L506 458M558 342L536 336M520 440L519 401M639 503L621 485M679 508L694 488M602 578L610 559M498 402L498 420M576 416L568 450M556 503L532 481M567 375L580 352M642 458L619 456M668 551L686 548M527 318L501 331M687 531L660 514M501 440L498 420M573 396L558 414M636 477L639 503M530 578L507 575M519 401L554 388M612 502L602 525M712 423L695 425M556 503L537 513M674 429L662 442M709 525L711 494M611 432L619 456M620 521L635 541M536 336L521 347M509 477L506 458M519 543L510 512M673 318L640 316M642 458L662 442M519 543L496 560M521 376L554 388M657 387L680 374M668 551L642 558M632 334L640 316M642 558L610 559M651 574L642 558M636 477L666 487M510 512L534 532M579 491L553 483M602 525L586 517M567 375L590 367M519 543L534 532M538 556L557 570M610 398L591 396M502 376L519 401M558 414L554 388M610 398L615 371M693 579L651 574M608 415L593 431M599 451L585 471M679 454L674 429M642 458L629 442M612 502L579 491M527 318L536 336M602 525L615 542M711 494L697 513M502 376L498 402M558 414L538 446M659 409L657 387M642 420L611 432M673 573L686 548M703 558L686 548M693 338L704 324M703 558L714 579M530 578L574 578M509 477L532 481M555 529L537 513M538 556L507 575M687 531L709 525M569 553L557 570M674 429L642 420M506 458L524 459M608 415L631 405M700 355L704 324M579 491L556 503M666 487L660 514M599 451L619 456M558 342L547 319M519 401L521 376M694 488L666 487M656 324L632 334M592 336L565 319M642 420L662 442M590 367L591 396M590 367L615 371M554 388L557 361M536 364L510 361M499 495L510 512M539 411L519 401M593 431L611 432M519 543L503 534M520 440L524 459M693 579L703 558M651 532L635 541M592 336L585 317M612 502L621 485M536 364L521 376M547 319L565 319M666 487L639 503M558 342L536 364M587 553L586 517M694 488L669 470M602 578L574 578M612 332L592 336M532 481L553 483M642 420L629 442M521 347L510 361M567 375L554 388M659 409L631 405M576 416L593 431M567 375L557 361M647 352L632 334M587 553L569 553M536 364L521 347M587 553L615 542M688 393L659 409M654 369L657 387M679 454L662 442M580 352L557 361M555 529L586 517M602 578L623 576M688 393L674 429M688 393L710 404M651 532L660 514M615 542L610 559M520 440L538 446M651 532L642 558M612 332L621 350M669 470L666 487M636 382L657 387M651 532L620 521M567 375L591 396M568 450L567 473M612 502L604 471M568 450L538 446M555 529L569 553M654 369L680 374M565 319L585 317M668 551L673 573M527 318L547 319M532 481L537 513M623 576L610 559M532 481L524 459M612 502L586 517M576 416L573 396M590 367L600 380M576 416L608 415M502 376L501 331M693 579L686 548M693 338L667 337M599 451L593 431M693 579L714 579M520 440L501 440M636 477L621 485M651 532L639 503M706 374L704 324M569 553L574 578M712 423L712 463M600 380L591 396M558 342L565 319M703 558L709 525M568 450L558 414M499 495L503 534M642 558L635 541M654 369L682 357M509 477L499 495M623 576L651 574M558 342L592 336M711 494L694 488M621 350L592 336M568 450L541 465M654 369L667 337M700 355L693 338M636 477L669 470M639 503L660 514M636 382L621 350M532 481L510 512M639 503L620 521M636 382L631 405M568 450L599 451M629 442L611 432M556 503L586 517M503 534L510 512M602 525L620 521M547 319L536 336M503 534L496 560M674 429L695 425M519 401L498 420M694 488L712 463M558 342L580 352M509 477L524 459M519 543L507 575M521 376L510 361M636 477L642 458M587 553L610 559M579 491L567 473M636 382L654 369M501 331L510 361M688 393L657 387M539 411L554 388M532 481L541 465M568 450L585 471M610 398L600 380M527 318L521 347M656 324L673 318M631 405L657 387M621 485L619 456M679 454L694 488M608 415L591 396M507 575L496 560M555 529L538 556M636 382L647 352M608 415L611 432M510 512L537 513"/>
<path fill="url(#hdf)"  d="M398.0,194.0 L356.3,185 C352.9,186.5 342.4,189.9 336.0,194.0 C329.6,198.1 323.6,203.4 318.0,209.8 C312.4,216.2 307.2,224.7 302.4,232.2 C297.6,239.7 292.4,247.1 289.0,254.6 C285.6,262.1 283.6,269.4 282.0,277.0 C280.4,284.6 279.6,292.4 279.5,300.0 C279.4,307.6 280.4,313.2 281.5,322.4 C282.6,331.6 283.9,344.2 286.3,355.0 C288.7,365.8 291.9,376.5 296.0,387.3 C300.1,398.1 304.8,408.9 310.7,419.7 C316.6,430.5 325.8,443.0 331.7,452.2 C337.6,461.4 342.6,467.7 346.3,475.0 C350.0,482.3 352.1,490.0 354.0,496.0 C355.9,502.0 357.2,508.5 357.8,511.0 L403,522.8 L396,330 L398,310 Z"/>
<g clip-path="url(#c5)"><g filter="url(#bl5)"><ellipse cx="390" cy="240" rx="10" ry="50" fill="#0a40d0" transform="rotate(0 390 240)"/><ellipse cx="350" cy="500" rx="30" ry="10" fill="#0a70e0" transform="rotate(0 350 500)"/><ellipse cx="330" cy="440" rx="25" ry="30" fill="#0aa8ec" transform="rotate(0 330 440)"/></g></g>
<path clip-path="url(#c5)" fill="none" stroke="#06284a" stroke-opacity="0.5" stroke-width="0.7" d="M270 237L280 189M272 333L280 314M276 364L306 342M387 310L390 332M354 259L370 239M280 255L291 227M301 468L291 443M284 478L305 489M331 473L352 474M354 259L347 238M370 239L376 222M308 239L306 257M386 182L392 200M360 373L347 354M373 344L347 354M351 427L333 417M382 463L370 433M308 239L324 256M370 239L359 212M340 212L359 212M303 279L306 257M354 392L333 417M356 504L387 509M340 212L329 227M344 288L320 285M271 435L275 411M344 288L359 300M284 478L272 496M276 364L283 388M315 308L344 288M348 321L323 335M315 308L320 285M317 212L308 239M354 392L385 407M306 342L295 374M315 308L303 279M373 344L376 362M360 373L376 362M329 227L347 238M333 417L315 431M373 344L400 363M301 468L319 458M354 392L391 386M296 419L315 431M296 419L283 388M364 193L392 200M356 504L352 474M357 455L352 474M314 364L295 374M308 187L280 189M339 181L317 212M400 363L390 332M272 457L272 496M317 212L329 227M354 392L330 376M399 225L399 273M357 455L331 473M308 239L329 227M354 259L324 256M324 256L344 288M272 333L291 329M276 364L295 374M324 256L320 285M387 509L377 493M308 391L330 376M272 283L270 237M354 259L363 276M303 279L280 255M339 181L308 187M347 238L359 212M373 344L390 332M306 342L291 329M376 362L391 386M394 250L370 239M303 279L272 283M347 354L330 376M387 310L359 300M324 256L347 238M351 427L333 437M347 354L323 335M280 314L291 329M271 435L272 457M283 388L295 374M385 407L370 433M370 239L383 265M317 212L340 212M382 463L352 474M317 212L291 227M315 411L333 417M354 392L327 395M383 285L359 300M357 455L333 437M308 239L291 227M399 431L370 433M303 279L280 314M276 364L291 329M354 259L383 265M296 504L319 501M363 276L344 288M354 392L360 373M330 376L327 395M315 411L308 391M280 255L270 237M399 225L392 200M363 276L359 300M271 435L291 443M301 468L305 489M338 497L356 504M383 285L387 310M308 239L280 255M276 364L275 411M364 193L376 222M376 222L392 200M301 468L331 473M331 473L319 458M315 308L291 329M314 364L308 391M272 457L284 478M291 443L319 458M333 437L319 458M348 321L344 288M317 212L288 208M296 504L305 489M364 193L359 212M319 501L305 489M348 321L359 300M308 187L288 208M271 435L296 419M382 463L399 431M352 474L377 493M296 419L275 411M382 463L394 487M303 279L320 285M351 427L357 455M347 354L376 362M306 342L314 364M314 364L330 376M394 487L377 493M314 364L323 335M283 388L275 411M296 419L315 411M291 443L315 431M333 437L315 431M296 504L272 496M270 237L288 208M348 321L387 310M296 419L308 391M291 227L288 208M338 497L319 501M357 455L319 458M301 468L272 457M364 193L386 182M280 255L306 257M357 455L382 463M280 189L288 208M317 212L308 187M339 181L386 182M361 409L370 433M272 457L291 443M283 388L308 391M319 458L315 431M399 225L370 239M308 391L327 395M383 285L363 276M385 407L391 386M315 411L327 395M340 212L347 238M324 256L329 227M315 308L323 335M331 473L319 501M314 364L347 354M338 497L331 473M399 431L391 386M394 250L383 265M387 310L373 344M400 363L391 386M399 225L376 222M280 314L272 283M324 256L306 257M306 342L323 335M351 427L370 433M356 504L377 493M331 473L305 489M315 308L306 342M387 509L394 487M348 321L347 354M351 427L361 409M360 373L391 386M376 222L359 212M354 392L361 409M301 468L284 478M385 407L399 431M303 279L324 256M383 265L399 273M308 391L295 374M383 285L383 265M357 455L370 433M356 504L319 501M394 250L399 273M327 395L333 417M339 181L364 193M296 504L284 478M272 283L280 255M376 362L400 363M360 373L330 376M399 431L394 487M276 364L272 333M272 333L272 283M387 310L399 273M361 409L333 417M296 419L291 443M363 276L383 265M291 227L270 237M338 497L352 474M354 259L344 288M315 308L348 321M348 321L373 344M364 193L340 212M370 239L347 238M361 409L385 407M315 308L280 314M339 181L340 212M315 411L315 431M394 250L399 225M383 285L399 273M382 463L377 493M333 437L333 417"/>
<path fill="url(#htop)"  d="M421.3,131.2 L505.0,150.0 L536.0,162.0 L536.0,194.0 L437.9,169.0 L437.0,160.0 L412.0,152.0 L358.5,161.5 L336.0,171.6 L358.5,153.7 L374.2,144.7 L396.6,136.8 Z"/>
<path clip-path="url(#c6)" fill="none" stroke="#06284a" stroke-opacity="0.5" stroke-width="0.7" d="M391 151L388 173M358 148L339 136M424 130L437 156M531 156L516 166M358 148L343 154M403 181L420 183M417 169L420 183M442 195L427 197M509 179L516 166M524 182L509 179M364 185L363 171M539 169L516 166M409 194L420 183M510 194L509 179M386 192L403 181M529 196L539 169M508 151L524 143M386 192L388 173M371 140L391 151M373 154L388 173M363 171L358 148M453 149L456 168M485 179L491 193M477 196L491 193M437 171L437 156M343 154L331 195M371 140L391 136M476 168L457 182M508 151L516 166M419 154L408 142M353 197L344 185M419 154L437 156M488 143L514 130M424 130L447 135M516 166L491 162M524 182L510 194M339 136L343 154M476 168L485 179M508 151L531 156M476 168L456 168M364 185L386 192M470 136L467 151M488 143L491 162M485 179L491 162M386 192L409 194M424 130L391 136M373 154L391 151M456 168L467 151M514 130L540 136M364 185L353 197M402 163L408 142M437 171L417 169M470 136L514 130M408 142L391 151M508 151L488 143M427 197L462 196M409 194L427 197M419 154L417 169M391 136L408 142M402 163L403 181M456 168L437 156M524 182L539 169M344 170L331 195M402 163L388 173M477 196L462 196M363 171L373 154M363 171L388 173M371 140L358 148M531 156L540 136M510 194L491 193M442 195L462 196M437 171L457 182M453 149L467 151M539 169L540 136M467 151L491 162M524 182L529 196M531 156L539 169M363 171L343 154M363 171L344 185M402 163L419 154M470 136L453 149M417 169L437 156M485 179L457 182M477 196L457 182M402 163L417 169M470 136L447 135M437 171L456 168M509 179L491 193M419 154L424 130M453 149L437 156M386 192L353 197M420 183L427 197M442 195L457 182M403 181L388 173M457 182L462 196M477 196L485 179M476 168L467 151M424 130L408 142M437 171L442 195M485 179L509 179M402 163L391 151M514 130L524 143M391 136L391 151M509 179L491 162M344 170L343 154M344 170L344 185M403 181L417 169M364 185L388 173M437 171L420 183M508 151L514 130M331 195L344 185M371 140L373 154M447 135L437 156M353 197L331 195M488 143L467 151M476 168L491 162M524 182L516 166M529 196L510 194M453 149L447 135M457 182L456 168M358 148L373 154M403 181L409 194M531 156L524 143M364 185L344 185M437 171L427 197M344 170L363 171M371 140L339 136M508 151L491 162M524 143L540 136M470 136L488 143M510 194L477 196"/>
<path fill="#2e30e0"  d="M358.5,161.5 L395.0,162.6 L426.0,168.0 L437.9,169.0 L426.0,169.0 L412.7,175.6 L398.0,194.0 L356.3,185.0 Z"/>
<path fill="none" stroke="#050a18" stroke-width="1.1" d="M358.5,161.5 L356.3,185 L398,194"/>
<path fill="#0a30c4"  d="M357.8,511.0 L403.0,522.8 L411.3,537.2 L369.0,523.5 L359.3,513.8 Z"/>
<path fill="#0a22c0"  d="M403.0,522.8 L458.0,498.8 L458.0,519.4 L411.3,537.2 Z"/>
<path fill="#0a70dc"  d="M398,194 L412.7,175.6 Q420,169 437.9,169 L437,294 L400,312 L398,310 Z"/>
<g clip-path="url(#c7)"><g filter="url(#bl5)"><ellipse cx="402" cy="240" rx="8" ry="60" fill="#0a48cc" transform="rotate(0 402 240)"/><ellipse cx="428" cy="275" rx="14" ry="25" fill="#0ab4ee" transform="rotate(0 428 275)"/><ellipse cx="420" cy="185" rx="14" ry="10" fill="#0a50d0" transform="rotate(0 420 185)"/></g></g>
<path clip-path="url(#c7)" fill="none" stroke="#06284a" stroke-opacity="0.5" stroke-width="0.7" d="M438 257L433 301M429 215L430 198M413 215L429 215M409 299L421 310M418 239L429 215M429 280L416 255M398 184L415 198M396 307L409 299M418 239L416 255M398 184L400 208M409 299L396 293M403 230L413 215M415 198L430 198M403 230L400 208M439 186L435 230M396 277L416 255M439 186L430 198M415 171L398 184M438 257L435 230M415 171L430 198M413 215L415 198M429 280L438 257M429 280L433 301M413 215L400 208M404 247L418 239M418 239L438 257M409 299L429 280M415 198L429 215M396 307L421 310M409 299L433 301M396 277L414 278M396 307L396 277M396 307L396 293M439 186L429 215M403 230L418 239M414 278L396 293M439 186L440 166M414 278L416 255M415 171L440 166M438 257L416 255M421 310L433 301M404 247L396 277M413 215L418 239M409 299L414 278M418 239L435 230M404 247L416 255M403 230L404 247M414 278L429 280M415 198L400 208M439 186L415 171M396 277L396 293M415 171L415 198M429 215L435 230"/>
<path fill="#0a90e6"  d="M437.9,169.0 L535.0,194.0 L535.0,317.0 L437.0,294.0 Z"/>
<g clip-path="url(#c8)"><g filter="url(#bl5)"><ellipse cx="455" cy="205" rx="20" ry="30" fill="#0a68dc" transform="rotate(0 455 205)"/><ellipse cx="525" cy="250" rx="14" ry="50" fill="#0ab8ee" transform="rotate(0 525 250)"/><ellipse cx="485" cy="285" rx="35" ry="14" fill="#0a98e8" transform="rotate(0 485 285)"/><ellipse cx="490" cy="215" rx="20" ry="14" fill="#0a78e0" transform="rotate(0 490 215)"/></g></g>
<path clip-path="url(#c8)" fill="none" stroke="#06284a" stroke-opacity="0.5" stroke-width="0.7" d="M444 281L463 278M465 295L477 285M518 228L507 203M521 197L507 203M445 219L458 196M475 203L458 211M458 211L458 196M501 183L514 175M504 304L531 313M470 225L475 203M487 234L497 253M487 234L485 218M446 238L445 219M446 238L478 248M463 278L477 285M502 221L487 234M512 275L513 255M465 295L439 299M470 225L485 218M518 228L530 214M455 165L439 169M499 268L513 255M536 265L513 255M530 214L538 237M446 238L435 253M465 295L480 320M458 211L445 219M530 176L494 165M501 183L521 197M455 180L439 169M512 275L494 285M530 176L539 195M470 225L458 211M439 299L435 253M465 295L458 316M502 221L507 203M475 203L458 196M530 214L539 195M485 304L477 285M537 297L517 293M530 176L514 175M497 253L518 228M497 253L499 268M476 177L458 196M507 203L488 196M485 218L488 196M504 304L480 320M537 297L536 265M494 165L514 175M501 183L507 203M446 238L470 225M465 295L485 304M501 183L476 177M512 275L517 293M530 176L521 197M494 165L455 165M477 285L494 285M483 268L494 285M485 304L480 320M538 237L539 195M517 293L531 313M465 295L444 281M536 265L517 293M530 214L521 197M497 253L513 255M504 304L494 285M536 265L538 237M445 219L435 253M499 268L494 285M518 228L538 237M455 180L440 188M458 259L444 281M455 180L455 165M483 268L478 248M487 234L478 248M504 304L485 304M475 203L488 196M470 225L445 219M476 177L455 180M470 225L478 248M521 197L539 195M458 259L483 268M537 297L531 313M517 293L494 285M536 265L512 275M465 295L463 278M476 177L488 196M440 188L458 196M521 197L514 175M455 180L458 196M502 221L518 228M476 177L494 165M439 299L458 316M504 304L517 293M458 259L478 248M483 268L463 278M538 237L513 255M497 253L483 268M458 259L435 253M446 238L458 259M485 218L507 203M445 219L440 188M487 234L470 225M444 281L435 253M483 268L477 285M502 221L497 253M485 304L494 285M502 221L485 218M501 183L488 196M476 177L455 165M458 316L480 320M530 214L507 203M440 188L439 169M497 253L478 248M518 228L513 255M483 268L499 268M512 275L499 268M458 259L463 278M475 203L485 218M439 299L444 281M476 177L475 203M501 183L494 165"/>
<path fill="#0a40cc"  d="M398,312 Q404,296 423.7,293 L437,293 Q460,296 482,304 L478,310 L404.6,338 L398,330 Z"/>
<path fill="url(#lensg)"  d="M399,311 Q404,296 423.7,293 L437,293 Q460,296 480,305 Q440,302 399,313 Z"/>
<path fill="none" stroke="#050a18" stroke-width="1.1" d="M399,311 Q404,296 423.7,293 L437,293 Q460,296 480,305 M399,313 Q440,302 480,305"/>
<path fill="#0a78e0" stroke="#050a18" stroke-width="0.9" d="M529.0,240.0 L536.0,236.8 L536.0,261.4 L529.0,266.0 Z"/>
<path fill="#0a70de"  d="M633.0,192.2 L725.5,213.0 L725.5,419.0 L633.0,394.7 Z"/>
<path fill="#0aa4e8"  d="M632.5,376.0 L725.3,396.0 L725.3,418.7 L632.5,396.2 Z"/>
<path fill="#0ab0e8"  d="M646.0,388.0 L725.3,405.0 L725.3,411.0 L652.0,395.0 Z"/>
<path fill="#0a5ad4"  d="M398.0,310.0 L473.0,311.0 L478.0,321.0 L472.0,326.0 L470.0,334.0 L465.0,345.0 L450.0,351.0 L438.0,357.0 L432.7,364.0 L432.0,375.0 L434.0,381.0 L440.0,388.0 L435.0,396.0 L443.0,406.0 L438.0,414.0 L458.0,498.8 L403.0,522.8 L396.0,511.0 L396.0,330.0 Z"/>
<path fill="#0a44c8" d="M396,338.8 L472,304.8 L472,312.8 L396,346.8 Z"/>
<path fill="#0a9ce8" d="M395,346.8 L472,312.8 L472,322.8 L403.7,356.1 Z"/>
<path fill="#0a7ee2" d="M403.7,356.1 L472,322.8 L472,326.8 L396,358.8 Z"/>
<path fill="#0aa8ec" d="M394,346.8 L403.7,356.1 L394,365.1 Z"/>
<path fill="none" stroke="#050a18" stroke-width="1.1" d="M395,346.8 L472,312.8 M396,349.0 L472,315.0 M395,346.8 L403.7,356.1 L395,365.1"/>
<path fill="#0a44c8" d="M396,357.1 L472,323.1 L472,331.1 L396,365.1 Z"/>
<path fill="#0a9ce8" d="M395,365.1 L472,331.1 L472,341.1 L403.7,374.4 Z"/>
<path fill="#0a7ee2" d="M403.7,374.4 L472,341.1 L472,345.1 L396,377.1 Z"/>
<path fill="#0aa8ec" d="M394,365.1 L403.7,374.4 L394,383.4 Z"/>
<path fill="none" stroke="#050a18" stroke-width="1.1" d="M395,365.1 L472,331.1 M396,367.3 L472,333.3 M395,365.1 L403.7,374.4 L395,383.4"/>
<path fill="#0a44c8" d="M396,375.4 L472,341.4 L472,349.4 L396,383.4 Z"/>
<path fill="#0a9ce8" d="M395,383.4 L472,349.4 L472,359.4 L403.7,392.7 Z"/>
<path fill="#0a7ee2" d="M403.7,392.7 L472,359.4 L472,363.4 L396,395.4 Z"/>
<path fill="#0aa8ec" d="M394,383.4 L403.7,392.7 L394,401.7 Z"/>
<path fill="none" stroke="#050a18" stroke-width="1.1" d="M395,383.4 L472,349.4 M396,385.6 L472,351.6 M395,383.4 L403.7,392.7 L395,401.7"/>
<path fill="#0a44c8" d="M396,393.7 L472,359.7 L472,367.7 L396,401.7 Z"/>
<path fill="#0a9ce8" d="M395,401.7 L472,367.7 L472,377.7 L403.7,411.0 Z"/>
<path fill="#0a7ee2" d="M403.7,411.0 L472,377.7 L472,381.7 L396,413.7 Z"/>
<path fill="#0aa8ec" d="M394,401.7 L403.7,411.0 L394,420.0 Z"/>
<path fill="none" stroke="#050a18" stroke-width="1.1" d="M395,401.7 L472,367.7 M396,403.9 L472,369.9 M395,401.7 L403.7,411.0 L395,420.0"/>
<path fill="#0a44c8" d="M396,412.0 L472,378.0 L472,386.0 L396,420.0 Z"/>
<path fill="#0a9ce8" d="M395,420.0 L472,386.0 L472,396.0 L403.7,429.3 Z"/>
<path fill="#0a7ee2" d="M403.7,429.3 L472,396.0 L472,400.0 L396,432.0 Z"/>
<path fill="#0aa8ec" d="M394,420.0 L403.7,429.3 L394,438.3 Z"/>
<path fill="none" stroke="#050a18" stroke-width="1.1" d="M395,420.0 L472,386.0 M396,422.2 L472,388.2 M395,420.0 L403.7,429.3 L395,438.3"/>
<path fill="#0a44c8" d="M396,430.3 L472,396.3 L472,404.3 L396,438.3 Z"/>
<path fill="#0a9ce8" d="M395,438.3 L472,404.3 L472,414.3 L403.7,447.6 Z"/>
<path fill="#0a7ee2" d="M403.7,447.6 L472,414.3 L472,418.3 L396,450.3 Z"/>
<path fill="#0aa8ec" d="M394,438.3 L403.7,447.6 L394,456.6 Z"/>
<path fill="none" stroke="#050a18" stroke-width="1.1" d="M395,438.3 L472,404.3 M396,440.5 L472,406.5 M395,438.3 L403.7,447.6 L395,456.6"/>
<path fill="#0a44c8" d="M396,448.6 L472,414.6 L472,422.6 L396,456.6 Z"/>
<path fill="#0a9ce8" d="M395,456.6 L472,422.6 L472,432.6 L403.7,465.9 Z"/>
<path fill="#0a7ee2" d="M403.7,465.9 L472,432.6 L472,436.6 L396,468.6 Z"/>
<path fill="#0aa8ec" d="M394,456.6 L403.7,465.9 L394,474.9 Z"/>
<path fill="none" stroke="#050a18" stroke-width="1.1" d="M395,456.6 L472,422.6 M396,458.8 L472,424.8 M395,456.6 L403.7,465.9 L395,474.9"/>
<path fill="#0a44c8" d="M396,466.9 L472,432.9 L472,440.9 L396,474.9 Z"/>
<path fill="#0a9ce8" d="M395,474.9 L472,440.9 L472,450.9 L403.7,484.2 Z"/>
<path fill="#0a7ee2" d="M403.7,484.2 L472,450.9 L472,454.9 L396,486.9 Z"/>
<path fill="#0aa8ec" d="M394,474.9 L403.7,484.2 L394,493.2 Z"/>
<path fill="none" stroke="#050a18" stroke-width="1.1" d="M395,474.9 L472,440.9 M396,477.1 L472,443.1 M395,474.9 L403.7,484.2 L395,493.2"/>
<path fill="#0a44c8" d="M396,485.2 L472,451.2 L472,459.2 L396,493.2 Z"/>
<path fill="#20d0c0" d="M395,493.2 L472,459.2 L472,469.2 L403.7,502.5 Z"/>
<path fill="#0a7ee2" d="M403.7,502.5 L472,469.2 L472,473.2 L396,505.2 Z"/>
<path fill="#0aa8ec" d="M394,493.2 L403.7,502.5 L394,511.5 Z"/>
<path fill="none" stroke="#050a18" stroke-width="1.1" d="M395,493.2 L472,459.2 M396,495.4 L472,461.4 M395,493.2 L403.7,502.5 L395,511.5"/>
<path fill="#0a44c8" d="M396,503.5 L472,469.5 L472,477.5 L396,511.5 Z"/>
<path fill="#20d0c0" d="M395,511.5 L472,477.5 L472,487.5 L403.7,520.8 Z"/>
<path fill="#0a7ee2" d="M403.7,520.8 L472,487.5 L472,491.5 L396,523.5 Z"/>
<path fill="#0aa8ec" d="M394,511.5 L403.7,520.8 L394,529.8 Z"/>
<path fill="none" stroke="#050a18" stroke-width="1.1" d="M395,511.5 L472,477.5 M396,513.7 L472,479.7 M395,511.5 L403.7,520.8 L395,529.8"/>
<path fill="#b8d0f4" fill-opacity="0.75" d="M426.0,392.0 l6,-3 l3,7 l-5,4 l-4,-2 Z"/>
<path fill="#b8d0f4" fill-opacity="0.75" d="M429.0,410.0 l6,-3 l3,7 l-5,4 l-4,-2 Z"/>
<path fill="#b8d0f4" fill-opacity="0.75" d="M432.0,429.0 l6,-3 l3,7 l-5,4 l-4,-2 Z"/>
<path fill="#b8d0f4" fill-opacity="0.75" d="M435.0,448.0 l6,-3 l3,7 l-5,4 l-4,-2 Z"/>
<path fill="#b8d0f4" fill-opacity="0.75" d="M438.0,467.0 l6,-3 l3,7 l-5,4 l-4,-2 Z"/>
<path fill="#b8d0f4" fill-opacity="0.75" d="M441.0,486.0 l6,-3 l3,7 l-5,4 l-4,-2 Z"/>
<path fill="#0aaaec"  d="M473.9,322.4 L481.3,319.5 L505.8,575.0 L456.3,560.6 L452.0,526.6 L455.0,525.0 L455.0,506.5 L438.0,492.5 L450.0,474.0 L435.0,455.0 L447.0,439.5 L433.0,420.0 L443.0,406.0 L435.0,396.0 L440.0,388.0 L434.0,381.0 L432.0,375.0 L432.7,364.0 L438.0,357.0 L450.0,351.0 L465.0,345.0 L470.9,334.4 L472.4,326.2 Z"/>
<g clip-path="url(#c9)"><g filter="url(#bl5)"><ellipse cx="468" cy="345" rx="20" ry="22" fill="#0a40c8" transform="rotate(0 468 345)"/><ellipse cx="448" cy="372" rx="10" ry="10" fill="#0a60d8" transform="rotate(0 448 372)"/><ellipse cx="475" cy="545" rx="18" ry="25" fill="#0a60d8" transform="rotate(0 475 545)"/><ellipse cx="447" cy="405" rx="4" ry="4" fill="#50e070" transform="rotate(0 447 405)"/><ellipse cx="470" cy="450" rx="14" ry="40" fill="#0ab4ee" transform="rotate(0 470 450)"/></g></g>
<path clip-path="url(#c9)" fill="none" stroke="#06284a" stroke-opacity="0.5" stroke-width="0.7" d="M465 390L474 392M483 367L489 373M437 385L436 374M437 458L444 455M449 406L439 402M493 391L497 386M449 415L441 420M494 424L503 424M427 490L438 489M457 455L462 448M482 340L475 348M484 350L495 352M434 419L432 429M448 498L437 496M480 404L491 404M456 364L460 358M489 485L485 478M471 478L476 471M438 547L434 552M436 480L427 481M488 397L480 404M449 387L443 379M449 527L453 536M481 332L470 338M429 557L434 552M477 497L470 498M489 485L493 478M457 331L464 336M451 546L442 552M505 521L498 517M427 490L426 499M427 458L427 451M477 439L470 432M498 373L489 373M473 550L480 546M509 461L510 441M426 499L437 496M471 478L479 484M477 497L473 505M448 498L443 493M434 552L442 552M472 520L466 510M492 548L480 546M440 516L439 525M502 457L495 457M454 433L461 431M434 450L437 458M482 340L481 332M508 410L503 401M494 335L499 346M471 478L465 475M443 379L436 374M504 495L494 498M434 519L439 525M432 437L426 429M468 345L470 338M472 513L466 510M447 399L443 390M468 345L467 353M434 569L426 569M450 449L462 448M446 566L434 569M488 573L499 571M432 429L432 437M494 525L505 521M434 519L430 513M438 538L428 539M428 332L431 342M507 360L502 368M474 459L483 468M494 335L502 336M488 397L477 398M488 573L493 563M443 371L436 374M461 495L461 486M453 356L447 347M443 473L438 468M493 437L496 430M434 519L425 519M508 331L506 323M439 402L447 399M488 458L479 450M496 319L491 329M494 335L482 340M488 505L487 515M470 379L470 386M499 362L494 367M430 402L439 402M449 406L442 414M497 556L493 563M438 547L425 545M437 441L441 429M477 439L471 447M456 364L449 366M500 415L493 414M465 475L476 471M434 450L427 458M465 325L474 324M480 385L470 386M481 332L474 324M461 519L467 527M427 393L437 385M449 406L449 415M456 481L453 491M434 348L439 355M476 427L481 419M483 367L474 368M437 441L429 445M442 361L449 366M507 533L499 530M499 326L506 323M460 547L454 552M504 475L504 466M437 322L434 316M456 364L461 376M427 481L426 467M447 347L453 343M501 379L497 386M460 420L464 414M428 539L426 530M437 441L434 450M510 441L509 429M459 533L458 525M507 360L507 372M469 409L461 405M473 558L481 565M461 439L462 448M506 323L496 319M468 485L479 484M443 473L449 485M451 546L460 540M446 339L440 335M505 436L501 447M499 362L506 352M431 360L426 370M444 575L437 578M443 473L451 470M443 379L443 371M444 464L444 455M438 342L447 347M491 464L495 457M483 501L487 495M467 422L456 425M436 480L443 481M446 566L457 564M449 415L460 420M475 348L467 353M468 370L460 358M469 409L480 404M431 342L426 352M484 350L475 348M426 370L436 374M499 346L506 352M460 556L460 547M441 429L441 420M470 379L461 376M437 441L447 443M494 525L499 530M496 398L491 404M494 424L489 429M444 575L434 569M499 485L507 486M487 322L481 326M476 578L468 579M438 489L449 485M456 364L468 370M449 406L447 399M463 316L448 316M468 485L470 498M441 315L437 322M468 485L461 486M472 359L480 359M427 490L427 481M430 525L426 530M503 401L508 395M461 519L472 520M476 427L467 422M432 429L427 421M505 436L509 429M429 445L434 450M431 381L426 370M438 489L437 496M446 339L452 336M460 470L452 463M465 325L470 330M494 498L492 510M437 531L439 525M460 506L470 498M470 379L468 370M470 330L470 338M501 379L507 372M467 545L465 537M487 322L491 329M449 509L443 505M491 471L491 464M460 506L461 495M441 429L447 437M494 498L487 495M487 553L480 553M460 506L473 505M438 489L443 493M467 527L465 537M462 573L453 570M500 509L498 517M483 426L489 429M505 521L499 530M484 412L488 421M452 336L440 335M470 432L467 422M499 326L491 329M431 360L434 348M456 481L449 485M446 339L438 342M454 433L456 425M473 558L466 553M460 556L448 557M464 563L471 572M425 545L434 552M465 475L460 470M443 379L437 385M449 406L457 411M457 331L452 336M461 519L466 510M449 387L443 390M494 335L490 345M428 332L437 329M461 519L458 525M431 360L439 355M482 434L476 427M447 437L447 429M508 410L500 415M487 553L480 546M457 331L460 342M449 406L461 405M460 540L453 536M480 385L489 383M488 505L481 510M487 495L481 491M472 520L477 527M473 558L464 563M461 439L471 447M508 331L499 326M509 461L509 451M497 556L492 548M426 370L433 367M470 330L474 324M507 344L499 346M451 470L452 463M468 370L474 368M494 424L496 430M453 536L458 525M507 344L502 336M456 398L459 386M457 411L461 405M463 316L474 318M465 390L459 386M504 475L493 478M486 356L495 352M442 361L443 371M437 322L447 323M456 348L460 358M507 372L502 368M489 485L499 491M501 447L492 451M482 434L489 429M501 502L492 510M508 579L502 578M443 473L444 464M455 442L462 448M450 373L459 386M464 563L457 564M470 379L479 375M429 408L434 412M443 493L453 491M476 578L459 580M430 525L439 525M460 342L453 343M454 433L455 442M467 527L479 535M470 432L461 439M456 398L447 399M490 345L495 352M436 480L427 474M480 385L479 375M460 358L467 353M490 345L499 346M489 383L489 373M507 360L506 352M457 455L464 465M499 571L503 561M465 325L464 336M443 505L437 496M457 411L464 414M465 537L479 535M426 467L427 474M460 547L460 540M431 342L438 342M443 473L443 481M437 329L447 323M434 504L440 516M479 375L489 373M481 510L487 515M457 455L444 455M427 458L426 467M461 519L455 512M427 393L431 381M444 575L453 570M438 538L437 531M501 391L508 385M481 326L474 324M474 417L464 414M463 316L455 318M509 417L508 410M493 391L482 392M472 513L472 520M460 358L453 356M459 533L453 536M509 417L503 424M509 417L509 429M438 489L443 481M488 458L495 457M449 509L447 515M464 455L457 455M508 331L502 336M483 468L491 464M431 464L427 458M462 573L471 572M441 447L437 458M461 495L455 499M447 437L455 442M438 342L440 335M461 495L468 485M468 370L472 359M477 439L484 446M467 545L460 540M439 402L436 394M495 352L499 346M472 359L467 353M501 502L509 503M465 325L457 331M434 419L441 420M488 573L482 572M456 425L461 431M436 394L443 390M460 556L466 553M482 434L483 426M451 546L448 557M452 463L444 455M486 356L484 350M450 449L444 455M480 546L479 535M487 515L480 518M449 485L443 481M471 478L468 485M509 545L500 546M509 461L502 457M493 437L505 436M502 457L509 451M499 326L502 336M476 578L482 572M500 509L492 510M484 412L491 404M484 350L482 340M456 398L461 405M475 542L467 545M494 424L493 414M499 530L504 539M473 550L466 553M438 468L427 474M465 537L460 540M473 505L470 498M449 509L455 499M446 538L449 527M446 566L436 560M488 505L494 498M460 556L464 563M470 432L471 447M441 447L434 450M496 430L489 429M484 412L481 419M481 419L488 421M482 340L490 345M455 512L466 510M491 329L481 326M493 538L499 530M505 436L496 430M462 573L457 564M509 461L504 475M443 493L437 496M485 478L493 478M456 364L453 356M507 533L504 539M441 447L447 443M460 470L451 470M477 398L468 402M489 383L498 373M479 375L474 368M499 485L489 485M442 361L453 356M499 485L493 478M487 322L496 319M436 560L448 557M447 437L454 433M438 547L451 546M447 347L439 355M465 475L468 485M485 537L479 535M425 545L426 530M484 350L480 359M441 315L434 316M464 455L462 448M482 434L470 432M480 546L480 553M453 570L459 580M441 447L444 455M449 485L453 491M507 372L498 373M441 429L432 437M481 510L480 518M509 545L504 539M484 412L480 404M493 437L484 446M499 326L496 319M439 402L443 390M459 533L460 540M446 538L451 546M483 468L476 471M468 579L459 580M485 525L479 535M498 517L492 510M470 379L459 386M488 573L493 578M460 506L466 510M483 367L480 359M429 445L426 429M437 329L433 335M507 360L507 344M488 458L483 468M470 386L459 386M475 489L468 485M476 578L493 578M449 527L439 525M494 525L485 537M491 471L493 478M460 470L456 481M446 566L448 557M437 458L438 468M505 436L503 424M506 323L506 315M472 513L480 518M493 538L494 525M461 519L447 515M449 415L447 429M430 402L436 394M442 361L431 360M427 393L436 394M481 565L482 572M509 545L507 552M426 569L429 576M441 315L448 316M425 519L426 530M489 485L487 495M467 545L473 550M472 513L481 510M475 542L479 535M482 340L470 338M467 545L460 547M484 350L490 345M428 539L437 531M449 387L456 398M483 317L481 326M429 576L437 578M440 516L449 509M476 471L479 484M501 502L500 509M432 429L426 429M434 348L426 352M494 525L487 515M476 427L483 426M465 325L455 318M493 538L492 548M474 392L470 386M483 367L479 375M443 379L450 373M436 480L427 490M455 442L447 443M507 372L508 385M456 481L451 470M440 516L443 505M468 370L461 376M474 318L474 324M487 495L499 491M480 385L474 392M503 424L500 415M443 371L450 373M485 478L483 468M485 537L480 546M504 475L491 471M436 560L434 552M434 569L429 557M434 504L430 513M434 519L430 525M442 414L434 412M464 455L471 447M488 397L493 391M460 506L455 512M485 537L485 525M429 408L427 421M477 398L474 392M431 464L427 474M460 506L449 509M489 485L479 484M431 381L436 374M434 412L427 421M460 470L464 465M465 475L471 466M484 412L474 417M480 518L477 527M504 466L495 457M475 489L481 491M461 439L461 431M477 527L479 535M426 370L426 352M469 409L474 417M480 404L468 402M436 480L438 489M467 527L459 533M436 560L429 557M461 486L453 491M465 475L456 481M489 383L497 386M481 332L481 326M441 315L447 323M500 546L507 552M497 556L487 553M452 336L447 323M468 345L475 348M448 498L453 491M442 361L439 355M429 557L426 569M436 480L438 468M474 459L488 458M444 464L438 468M501 502L504 495M486 356L491 361M493 414L488 421M467 527L477 527M447 323L440 335M484 446L492 451M494 424L500 415M451 546L460 547M459 533L465 537M476 427L474 417M489 383L501 379M499 571L507 567M476 427L470 432M508 410L508 395M436 480L443 473M427 393L430 402M464 455L471 466M442 414L439 402M509 545L507 533M430 525L425 519M492 548L485 537M475 542L480 546M481 332L491 329M494 424L488 421M499 571L493 563M487 515L485 525M431 360L433 367M447 515L439 525M464 465L452 463M501 447L495 457M431 360L426 352M507 552L503 561M489 383L493 391M480 518L472 520M499 362L495 352M450 449L447 443M434 569L437 578M497 556L500 546M491 471L504 466M468 345L464 336M503 424L509 429M499 485L499 491M460 420L457 411M507 567L502 578M456 364L450 373M507 567L503 561M473 505L466 510M465 475L464 465M480 359L474 368M455 512L447 515M426 467L427 451M460 420L456 425M507 486L499 491M473 558L471 572M476 578L471 572M486 356L480 359M467 527L472 520M437 441L441 447M428 332L426 321M464 563L462 573M483 426L488 421M488 421L489 429M430 513L426 499M434 450L427 451M495 352L491 361M501 391L508 395M440 516L447 515M437 322L426 321M485 478L491 471M456 348L460 342M438 547L438 538M444 464L437 458M460 420L467 422M487 515L498 517M473 550L480 553M499 571L493 578M480 385L482 392M447 429L456 425M504 495L507 486M474 459L479 450M436 560L434 569M455 318L447 323M429 445L432 437M474 318L481 326M483 317L474 318M434 504L443 505M483 367L491 361M443 379L443 390M434 348L447 347M494 367L491 361M464 455L464 465M470 338L464 336M438 547L428 539M437 441L447 437M470 432L461 431M477 398L482 392M484 446L479 450M431 381L437 385M505 521L507 510M507 344L508 331M431 342L434 348M449 415L442 414M446 538L438 538M501 379L508 385M488 458L491 464M467 545L466 553M488 505L483 501M505 436L510 441M444 464L452 463M477 497L481 491M456 348L447 347M488 505L492 510M501 391L497 386M475 542L465 537M428 332L433 335M475 542L473 550M448 316L447 323M437 329L426 321M448 498L449 509M449 387L450 373M467 527L458 525M481 565L488 573M507 344L506 352M493 538L485 537M426 321L434 316M488 505L487 495M496 398L493 391M470 330L481 332M430 513L440 516M437 531L426 530M450 449L455 442M448 498L443 505M449 527L437 531M434 419L427 421M429 445L427 451M501 447L510 441M509 503L507 486M461 495L470 498M492 548L487 553M507 510L498 517M481 510L473 505M431 342L433 335M470 330L464 336M464 563L466 553M497 556L503 561M485 525L477 527M460 506L455 499M444 575L459 580M452 336L453 343M501 502L507 510M432 429L441 420M509 461L504 466M465 325L474 318M471 572L468 579M497 556L507 552M455 499L453 491M456 348L468 345M496 398L503 401M483 317L496 319M501 391L493 391M508 331L506 315M491 404L500 415M427 490L437 496M449 527L447 515M460 556L454 552M426 429L427 421M436 560L442 552M503 401L500 415M481 565L471 572M509 503L504 495M461 439L455 442M453 356L439 355M472 513L473 505M486 356L483 367M427 481L427 474M449 406L456 398M488 397L482 392M448 316L455 318M489 383L479 375M493 437L501 447M455 512L449 509M474 392L468 402M472 359L474 368M492 548L500 546M483 367L494 367M456 348L453 343M441 429L432 429M449 387L459 386M501 391L503 401M487 560L493 563M462 573L468 579M439 402L429 408M479 450L492 451M495 352L506 352M434 519L440 516M449 415L457 411M438 342L434 348M493 578L482 572M474 417L481 419M449 527L458 525M465 475L461 486M468 345L460 342M475 489L479 484M473 558L480 553M448 557L454 552M474 459L471 447M449 415L456 425M500 546L504 539M460 358L472 359M498 373L494 367M508 385L508 395M454 433L447 429M461 376L450 373M463 316L483 317M501 391L496 398M449 387L447 399M496 398L488 397M456 398L468 402M450 449L441 447M470 379L474 368M431 464L438 468M465 390L468 402M487 515L492 510M488 573L487 560M449 485L451 470M436 394L437 385M500 509L507 510M447 429L441 420M483 426L481 419M472 359L475 348M431 464L426 467M460 556L457 564M456 481L461 486M430 525L437 531M457 331L447 323M433 367L436 374M477 439L482 434M443 371L433 367M461 439L454 433M491 404L493 414M503 424L496 430M497 556L487 560M504 495L499 491M479 484L481 491M475 489L470 498M453 570L457 564M438 342L433 335M437 329L437 322M469 409L464 414M425 545L428 539M439 402L434 412M494 335L481 332M502 457L501 447M487 560L480 553M474 417L480 404M489 383L482 392M508 385L497 386M465 390L470 386M474 417L467 422M446 566L444 575M499 485L504 475M461 405L464 414M508 579L507 567M449 485L443 493M509 451L510 441M502 457L504 466M467 422L464 414M474 459L471 466M480 385L470 379M499 362L502 368M487 553L487 560M485 478L476 471M457 455L452 463M509 417L500 415M434 419L434 412M446 339L447 347M434 419L442 414M494 335L491 329M456 348L467 353M493 578L502 578M483 468L471 466M434 569L429 576M464 465L471 466M469 409L468 402M438 547L446 538M441 429L447 429M494 525L485 525M485 478L479 484M437 329L440 335M448 557L457 564M447 437L447 443M493 538L500 546M483 501L473 505M493 437L492 451M446 566L453 570M501 502L494 498M425 545L429 557M451 546L454 552M499 362L507 360M434 504L426 499M477 497L475 489M491 471L483 468M448 498L455 499M461 405L468 402M487 322L483 317M477 398L480 404M477 497L487 495M501 379L498 373M465 325L463 316M501 447L509 451M450 373L449 366M477 439L479 450M481 510L483 501M484 412L493 414M461 376L459 386M507 552L507 567M504 466L491 464M465 390L456 398M503 561L493 563M452 336L460 342M457 331L455 318M475 348L480 359M446 538L453 536M494 367L502 368M456 348L453 356M484 446L482 434M448 557L442 552M444 464L451 470M462 573L459 580M471 447L479 450M460 342L464 336M494 498L499 491M488 397L491 404M437 458L427 458M438 547L442 552M437 441L432 437M464 455L474 459M476 471L471 466M470 338L475 348M509 503L507 510M489 485L481 491M437 385L443 390M430 402L429 408M493 437L482 434M427 393L429 408M481 565L480 553M450 449L457 455M488 458L492 451M494 335L499 326M499 362L491 361M467 422L461 431M482 392L474 392M433 335L440 335M493 437L489 429M489 373L494 367M499 571L502 578M505 521L507 533M431 464L437 458M499 346L502 336M446 538L437 531M498 373L502 368M508 579L493 578M443 371L449 366M494 525L498 517M503 401L491 404M434 504L437 496M504 475L507 486M430 513L425 519M471 447L462 448M447 515L458 525M442 414L441 420M471 572L482 572M473 558L473 550M460 547L466 553M442 361L433 367M485 525L480 518M483 501L477 497M461 495L453 491M492 451L495 457M453 356L449 366M496 319L506 315M481 565L487 560M446 339L453 343M451 546L453 536M425 519L426 499M493 538L504 539"/>
<path fill="url(#stripg)"  d="M481.3,319.5 L494.8,317.2 L498.6,319.5 L532.0,569.4 L505.8,575.0 Z"/>
<g clip-path="url(#c10)"><g filter="url(#bl5)"><ellipse cx="510" cy="470" rx="8" ry="30" fill="#0a88e4" transform="rotate(0 510 470)"/></g></g>
<path clip-path="url(#c10)" fill="none" stroke="#06284a" stroke-opacity="0.5" stroke-width="0.7" d="M501 529L510 526M496 425L502 434M525 422L533 427M514 366L509 362M510 488L508 481M489 433L489 426M494 360L486 353M519 569L508 568M494 447L500 448M488 558L494 550M528 499L534 499M489 426L482 418M488 558L478 557M524 452L531 443M526 570L519 569M500 337L501 327M512 562L516 551M479 508L489 511M505 381L514 383M512 372L514 366M533 325L535 332M484 526L486 532M508 444L500 441M507 519L517 515M498 415L493 420M493 420L490 413M521 442L525 429M487 469L493 480M526 570L533 577M493 480L496 471M489 375L490 386M522 499L514 505M496 436L490 440M526 342L522 352M510 349L507 341M482 502L478 494M497 514L489 511M529 480L534 473M523 526L522 519M494 453L485 457M526 489L534 484M478 542L480 534M525 550L521 544M487 567L486 574M534 455L532 449M526 489L521 483M513 354L506 355M525 382L526 375M493 480L485 480M480 364L479 376M487 367L485 361M508 444L500 448M526 342L515 345M480 364L481 356M483 322L488 317M480 579L486 574M534 473L528 468M524 452L521 464M512 337L509 329M515 479L508 481M479 376L480 388M489 433L496 436M509 386L514 383M503 400L513 399M518 557L519 569M532 522L527 514M493 392L489 398M500 448L500 441M496 331L496 321M493 480L504 475M490 338L490 329M526 474L528 468M509 508L505 502M515 454L508 454M481 400L480 388M508 548L505 559M515 479L526 474M501 459L500 448M515 345L512 337M498 415L505 421M484 494L479 486M496 331L501 327M528 334L518 331M508 454L515 462M532 363L521 364M493 528L486 532M524 561L525 550M508 548L501 553M498 384L490 386M509 508L500 509M490 386L485 392M501 553L496 558M479 334L482 342M514 498L514 505M504 475L501 482M500 406L509 405M498 384L499 391M512 392L521 387M509 577L503 572M512 562L519 569M508 534L501 529M527 438L525 429M508 548L516 551M507 341L500 337M521 442L514 441M523 537L517 527M500 544L506 541M517 515L514 505M494 360L487 367M517 489L526 489M521 464L528 468M524 561L531 563M499 564L503 572M497 397L503 400M488 548L491 542M514 326L515 319M508 444L517 447M526 342L528 334M515 454L515 462M501 459L508 454M493 505L500 509M530 462L521 464M532 541L532 529M527 438L534 434M526 375L532 372M489 375L494 368M497 397L499 391M522 358L521 364M524 452L517 447M497 514L488 520M509 386L505 393M534 413L533 427M525 382L532 391M522 358L514 366M500 544L501 536M493 574L499 564M532 541L523 537M527 323L518 331M500 448L508 454M512 372L505 381M507 519L510 526M499 465L496 471M501 366L500 359M512 372L505 372M514 534L514 543M534 499L534 484M533 402L527 406M481 400L485 392M518 331L521 323M486 539L491 542M496 436L500 441M508 534L514 543M493 528L501 529M522 499L522 506M494 447L483 450M516 574L525 577M493 574L503 572M505 559L512 562M490 329L478 327M513 399L519 400M522 358L513 354M478 458L479 444M483 322L490 329M508 548L514 543M500 441L502 434M512 392L505 393M496 488L501 482M522 519L527 514M499 564L508 568M500 406L489 398M479 334L478 327M517 515L527 514M517 447L508 454M512 372L519 371M512 392L513 399M521 442L524 452M522 499L517 489M528 367L532 363M499 465L489 462M514 498L508 496M499 564L505 559M489 462L485 457M530 462L534 473M482 502L479 508M499 465L504 475M509 470L515 462M493 392L485 392M515 454L524 452M525 577L509 577M522 519L517 527M496 425L489 433M504 514L500 509M517 515L517 527M506 541L514 543M510 488L503 488M508 323L515 319M501 529L501 536M505 559L508 568M532 355L532 339M505 414L498 415M486 353L481 348M530 348L526 342M488 317L501 317M514 433L508 427M525 382L521 387M488 548L488 558M505 502L514 505M520 393L513 399M508 534L510 526M483 450L478 458M489 462L483 463M484 526L488 520M493 505L497 514M500 496L503 488M488 520L479 518M487 469L478 475M517 515L510 526M519 411L525 412M528 367L532 372M517 515L522 506M479 571L487 567M484 526L480 534M525 412L527 406M496 425L489 426M505 559L516 551M503 572L503 580M517 515L509 508M500 406L487 406M514 498L517 489M510 488L514 498M509 463L515 462M478 475L485 480M505 414L512 413M532 522L522 519M493 505L482 502M508 323L509 329M512 562L518 557M505 502L500 509M525 550L534 555M515 319L509 315M527 323L528 334M497 397L500 406M508 496L503 488M504 475L496 471M483 450L485 457M505 372L509 362M479 334L481 348M535 332L532 339M489 375L483 382M518 470L521 464M482 552L478 557M524 452L530 462M505 502L494 499M528 499L522 506M507 341L509 329M479 571L486 574M500 348L500 359M487 406L481 400M532 420L533 427M481 400L489 398M519 371L521 364M522 506L514 505M514 326L518 331M494 345L482 342M508 323L509 315M519 400L509 405M501 317L509 315M494 360L494 353M525 429L525 422M519 371L514 366M521 464L515 462M493 528L488 520M486 532L492 534M494 353L500 359M479 412L481 400M529 480L534 484M486 532L480 534M534 555L532 541M523 526L529 535M494 368L487 367M529 480L521 483M504 514L509 508M480 364L487 367M489 375L496 377M504 514L497 514M518 338L518 331M496 425L496 436M525 398L519 400M493 528L492 534M494 353L486 353M505 414L505 421M505 502L508 496M494 360L485 361M519 411L519 419M487 469L483 463M528 334L532 339M501 536L506 541M488 548L478 542M523 537L521 544M490 386L483 382M525 429L519 419M519 419L512 413M478 494L479 486M525 412L534 413M509 362L501 366M481 356L486 353M521 544L516 551M513 354L514 366M519 371L526 375M500 544L494 550M525 398L532 391M508 444L508 454M514 433L508 444M482 502L484 494M479 508L478 494M515 345L522 352M483 450L494 453M481 356L481 348M508 323L501 327M509 386L512 392M497 397L505 393M526 570L525 577M501 317L501 327M530 509L527 514M522 506L527 514M520 379L521 387M481 426L482 418M527 438L531 443M490 386L496 377M517 515L522 519M494 499L500 509M505 381L505 372M478 542L486 539M496 436L502 434M488 548L486 539M510 349L500 348M479 334L490 329M479 376L483 382M518 470L509 470M505 381L498 384M510 488L515 479M493 528L498 521M496 331L500 337M500 496L505 502M526 570L531 563M527 323L522 316M514 498L505 502M508 323L501 317M519 411L519 400M508 444L514 441M505 381L496 377M496 321L490 329M478 475L478 494M487 406L489 398M494 360L494 368M528 367L526 375M482 342L481 348M518 338L526 342M490 386L499 391M514 433L514 441M500 406L490 413M512 372L520 379M509 577L503 580M521 544L514 543M508 323L514 326M505 421L512 413M534 413L527 406M519 400L527 406M496 425L493 420M485 392L489 398M487 469L480 469M509 386L505 381M508 534L506 541M516 574L509 577M532 379L532 391M530 509L522 506M509 315L522 316M505 393L499 391M514 433L519 419M488 317L478 327M493 480L486 487M508 548L506 541M499 465L501 459M532 391L521 387M518 470L528 468M523 526L532 522M532 379L532 372M514 543L516 551M513 399L505 393M479 444L480 432M493 505L489 511M488 317L496 321M507 341L500 348M496 488L494 499M487 567L481 564M479 412L482 418M508 534L501 536M508 427L505 421M488 558L496 558M514 534L517 527M479 376L489 375M494 550L491 542M494 360L501 366M496 488L500 496M506 355L509 362M494 453L501 459M494 345L486 353M524 561L534 555M493 574L503 580M510 349L506 355M524 452L534 455M523 537L514 534M505 372L494 368M508 481L503 488M496 425L505 421M494 345L481 348M522 499L514 498M492 534L491 542M514 366L521 364M527 323L521 323M514 534L510 526M517 447L514 441M501 536L492 534M509 470L504 475M500 337L509 329M484 494L494 499M501 553L494 550M479 412L487 406M522 499L526 489M529 535L532 529M499 465L509 470M490 338L496 331M526 474L529 480M508 444L502 434M505 559L501 553M525 412L525 422M506 355L500 359M504 475L508 481M493 392L499 391M493 574L480 579M514 433L502 434M532 541L521 544M534 555L531 563M479 334L490 338M517 489L521 483M486 353L485 361M509 463L501 459M479 571L478 557M518 331L509 329M480 364L485 361M516 574L508 568M496 488L493 480M505 372L501 366M496 331L490 329M513 354L515 345M533 427L534 434M482 502L489 511M494 447L494 453M534 434L532 449M525 398L527 406M497 397L489 398M499 465L509 463M532 355L532 363M510 349L513 354M513 399L509 405M525 550L518 557M514 383L521 387M485 480L486 487M530 462L528 468M508 427L502 434M496 425L508 427M525 550L532 541M484 526L479 518M489 462L494 453M523 537L529 535M518 470L526 474M532 355L522 352M522 358L532 363M483 322L478 327M523 526L532 529M490 413L482 418M527 323L533 325M484 494L478 494M525 550L516 551M497 514L500 509M521 442L531 443M534 473L534 484M532 363L532 372M522 358L522 352M496 321L501 317M483 322L496 321M525 422L519 419M499 564L488 558M488 558L487 567M479 412L481 426M488 520L498 521M526 474L534 473M478 557L481 564M505 414L500 406M524 561L519 569M480 388L485 392M524 452L532 449M526 474L521 483M532 355L532 372M534 499L526 489M521 442L514 433M514 433L525 429M489 462L496 471M500 406L503 400M507 519L501 529M501 482L508 481M500 544L491 542M532 379L526 375M520 393L519 400M501 529L492 534M515 479L517 489M493 574L486 574M501 327L509 329M478 458L485 457M519 411L527 406M481 426L480 432M525 429L533 427M500 544L501 553M525 398L520 393M515 319L522 316M515 454L521 464M518 338L512 337M532 379L525 382M528 367L521 364M489 462L501 459M520 393L512 392M531 316L522 316M528 499L526 489M494 353L500 348M514 433L511 423M518 470L515 462M493 528L484 526M487 406L490 413M526 570L535 568M478 475L478 458M509 508L514 505M482 552L488 548M512 372L509 362M483 450L484 439M520 393L532 391M486 532L486 539M496 425L498 415M530 348L532 339M512 372L514 383M526 375L520 379M489 433L481 426M514 326L521 323M490 338L482 342M482 552L488 558M478 458L483 463M518 470L515 479M498 384L496 377M479 412L490 413M518 338L515 345M500 337L500 348M523 537L514 543M527 323L531 316M511 423L512 413M494 550L496 558M499 564L496 558M516 574L519 569M494 368L501 366M505 372L496 377M525 382L520 379M500 406L498 415M532 420L534 413M489 511L479 518M486 539L492 534M488 520L489 511M486 539L480 534M531 443L532 449M481 356L485 361M501 529L498 521M500 441L490 440M493 420L482 418M522 358L532 355M489 433L484 439M485 480L479 486M509 470L508 481M521 442L517 447M485 457L483 463M489 375L487 367M483 450L479 444M510 349L515 345M494 447L490 440M515 454L517 447M530 509L532 522M480 469L483 463M484 439L479 444M518 331L512 337M487 469L496 471M505 559L496 558M509 386L498 384M519 371L520 379M531 443L534 434M493 480L501 482M479 571L481 564M479 508L479 518M513 354L509 362M494 345L500 337M481 426L489 426M525 577L519 569M530 348L522 352M504 514L498 521M494 453L500 448M488 548L494 550M478 542L478 557M514 383L520 379M515 319L521 323M487 469L485 480M518 338L528 334M511 423L505 421M523 526L517 527M503 400L505 393M525 577L533 577M509 362L500 359M511 423L519 419M509 405L512 413M493 505L494 499M494 345L490 338M530 509L534 499M507 341L512 337M520 393L521 387M510 526L517 527M532 541L529 535M484 439L480 432M500 496L494 499M508 568L509 577M528 334L535 332M527 438L521 442M493 420L489 426M478 458L480 469M487 469L489 462M523 537L523 526M524 561L518 557M514 326L509 329M529 480L526 489M510 488L508 496M515 479L521 483M534 455L534 473M521 323L522 316M504 514L517 515M509 386L499 391M496 488L486 487M482 552L478 542M507 341L515 345M532 391L533 402M493 392L497 397M489 433L480 432M525 398L533 402M515 479L509 470M488 558L481 564M519 411L509 405M534 555L535 568M494 345L494 353M512 392L514 383M528 334L533 325M493 392L490 386M500 496L508 496M505 414L509 405M508 568L503 572M494 345L500 348M526 570L524 561M513 354L522 352M479 571L480 579M478 475L479 486M533 577L535 568M479 376L487 367M499 564L487 567M532 522L532 529M490 338L500 337M511 423L508 427M483 450L490 440M532 420L525 412M531 563L535 568M494 368L496 377M530 509L528 499M522 499L528 499M485 392L483 382M525 429L534 434M531 316L533 325M484 439L490 440M528 367L519 371M497 514L498 521M496 488L503 488M507 519L504 514M496 321L501 327M484 494L486 487M509 463L508 454M530 462L534 455M510 488L517 489M526 342L532 339M479 518L480 534M478 475L480 469M525 412L519 419M501 482L503 488M503 400L509 405M482 502L494 499M479 486L486 487M530 348L532 355M489 433L490 440M494 447L500 441M533 402L534 413M512 562L508 568M507 519L498 521M518 557L516 551M508 534L514 534M480 388L483 382M493 574L487 567M501 536L491 542M506 355L500 348M532 420L525 422M509 470L509 463M494 360L500 359M508 548L500 544M519 411L512 413M498 415L490 413M496 488L484 494"/>
<g filter="url(#bl3)"><circle cx="390" cy="382" r="4" fill="#30f060"/><circle cx="448" cy="405" r="3.5" fill="#40f050"/></g>
<path fill="#e8d800"  d="M451.0,508.0 L459.0,499.0 L461.0,516.0 Z"/>
<path fill="#a0e020"  d="M455.0,504.0 L459.0,499.0 L460.0,508.0 Z"/>
<path fill="#ebebeb"  d="M473.0,310.5 L480.6,305.2 L509.8,312.7 L497.8,317.2 L488.0,315.7 L479.9,318.7 Z"/>
<path fill="#0a48cc"  d="M498.0,318.0 L510.0,313.0 L536.0,318.0 L536.0,325.0 Z"/>
<path fill="url(#rollg)"  d="M655.0,197.0 L725.3,213.5 L725.3,396 Q700,396 646,376.7 C642.5,371.4 629.8,357.0 625.0,345.0 C620.2,333.0 616.7,322.3 617.5,304.8 C618.3,287.3 623.8,258.0 630.0,240.0 C636.2,222.0 650.8,204.2 655.0,197.0 Z"/>
<g clip-path="url(#c11)"><g filter="url(#bl5)"><ellipse cx="640" cy="330" rx="14" ry="40" fill="#2a34d0" transform="rotate(0 640 330)"/></g></g>
<path clip-path="url(#c11)" fill="none" stroke="#06284a" stroke-opacity="0.5" stroke-width="0.7" d="M687 273L694 270M680 203L676 197M652 310L657 314M716 328L722 324M706 336L705 326M683 386L675 380M635 381L645 383M730 281L725 279M657 314L647 316M687 356L690 347M660 325L654 325M657 385L657 379M649 225L656 229M698 361L692 367M621 217L614 215M686 363L692 361M725 273L725 279M617 266L618 272M722 246L716 253M666 370L673 374M727 321L722 316M671 281L677 278M730 369L729 361M640 355L639 345M635 381L626 386M682 392L688 400M709 221L709 228M708 304L704 297M625 326L623 321M625 309L622 314M692 220L694 229M685 293L685 286M668 315L660 309M612 208L619 207M691 287L685 293M701 291L709 293M630 283L632 289M613 395L611 402M612 288L611 295M616 224L612 231M669 378L673 374M649 225L644 215M680 380L678 372M664 301L658 301M723 232L724 239M711 358L710 352M689 378L683 386M620 249L623 241M673 240L669 245M632 223L641 226M724 263L729 260M692 301L697 298M680 284L685 293M630 321L623 321M683 229L679 225M646 285L652 292M645 345L640 337M642 245L636 249M621 190L635 190M654 236L656 229M650 358L646 361M685 293L680 302M692 330L686 330M723 389L716 385M686 330L682 325M628 314L625 309M690 347L697 341M641 311L642 301M629 330L635 335M687 356L692 361M692 330L700 335M659 341L658 335M634 197L634 206M689 378L691 385M634 264L628 264M616 285L616 292M658 271L657 277M705 399L694 395M716 379L723 380M623 405L633 403M654 244L656 250M623 299L631 295M716 217L726 216M686 300L685 293M658 264L665 268M705 326L711 332M660 325L666 324M730 197L730 207M664 301L673 306M672 396L664 402M642 260L642 268M729 361L729 356M611 338L613 350M663 365L666 357M612 304L611 313M678 365L671 359M679 252L674 256M652 343L653 337M670 333L666 324M617 266L623 262M621 190L615 191M684 207L675 212M657 287L667 285M675 203L675 212M642 402L647 405M665 218L662 226M696 212L690 207M679 319L676 311M629 330L625 326M617 266L612 268M686 242L690 251M715 201L708 201M724 263L724 253M680 216L679 225M659 341L664 350M709 367L714 374M634 211L626 213M723 401L722 395M709 196L708 201M719 359L723 352M649 197L654 191M688 193L682 195M715 368L714 374M690 314L698 318M678 334L686 330M715 201L709 196M623 335L625 326M681 268L680 260M631 259L626 248M701 291L704 297M632 342L623 335M707 287L713 286M616 285L612 288M680 236L686 242M723 291L716 292M642 260L634 264M679 319L682 325M649 225L654 222M713 280L702 279M623 405L616 401M698 361L700 367M644 323L646 329M716 385L715 391M699 224L692 220M611 195L612 208M711 249L709 256M702 279L702 272M716 385L716 379M706 336L702 345M611 338L612 344M675 380L673 390M691 295L697 298M634 211L634 206M695 309L698 318M723 352L730 349M686 363L687 356M673 240L680 236M626 386L635 389M612 368L616 374M632 342L621 345M612 260L612 268M711 358L715 368M710 342L711 332M719 281L723 291M694 202L687 200M674 234L674 228M722 246L729 250M641 311L642 317M616 285L610 281M678 334L682 325M729 403L727 395M701 304L697 298M644 215L637 218M688 193L697 191M656 362L663 365M664 350L666 357M644 215L640 212M718 195L709 196M725 335L716 342M647 316L646 309M669 245L674 249M692 367L700 367M671 191L664 191M716 223L709 221M654 236L651 231M713 267L709 256M631 259L642 260M622 399L630 395M689 233L694 229M685 256L690 251M640 199L649 204M634 314L642 317M614 215L612 208M645 383L635 389M645 250L650 254M675 262L675 269M671 320L666 324M662 374L657 379M717 405L729 403M652 270L651 276M692 241L690 251M612 260L610 273M623 405L611 402M695 381L691 385M637 218L628 219M679 252L674 249M630 395L627 400M716 328L711 332M677 295L670 299M681 268L682 277M701 304L695 309M703 244L711 249M717 321L711 322M635 335L638 331M662 226L656 229M654 244L648 245M654 222L656 229M638 289L646 294M722 316L723 310M679 252L680 243M687 273L682 277M616 374L610 376M727 191L718 195M710 352L704 356M666 393L664 402M697 354L692 361M705 191L709 196M649 367L656 368M705 237L703 244M654 191L664 191M712 190L718 195M683 386L689 394M729 226L722 225M696 212L692 220M730 207L722 208M673 240L674 249M669 272L671 281M618 300L616 310M719 359L710 352M624 365L632 365M685 286L691 277M658 264L658 271M676 311L673 306M656 250L657 258M671 359L679 357M664 259L662 251M642 402L633 403M631 375L626 370M678 372L675 380M719 234L713 243M685 307L695 309M641 205L640 212M728 340L725 335M712 190L705 191M630 283L622 288M704 219L706 213M635 335L623 335M710 382L703 386M628 273L622 282M658 200L654 191M618 300L627 303M688 322L682 325M711 249L705 251M629 202L634 206M702 345L697 341M628 273L622 268M702 279L707 287M715 315L717 309M717 321L716 328M711 206L722 208M651 283L657 277M631 259L628 264M652 343L656 351M671 219L674 228M641 205L646 209M729 378L728 386M631 259L641 254M666 231L674 228M612 344L613 350M623 262L628 264M616 374L618 369M612 368L610 376M702 272L706 261M643 231L651 231M686 363L686 371M621 201L629 195M649 197L647 191M621 358L615 363M726 216L722 208M615 381L610 376M680 284L685 286M701 304L708 304M710 342L710 352M654 395L653 404M674 256L680 260M706 336L697 341M669 245L661 246M623 405L627 400M632 223L635 230M709 293L704 297M685 307L676 311M709 367L715 368M695 381L689 378M713 280L710 274M685 343L687 335M717 309L723 310M658 216L653 213M634 197L635 190M684 207L690 207M710 342L716 342M626 380L621 377M671 281L667 285M666 231L667 237M640 355L639 362M702 279L696 286M647 405L633 403M653 404L647 405M638 289L632 289M691 287L691 295M632 358L632 365M643 231L635 230M634 305L625 309M628 273L635 275M676 197L682 195M729 242L729 235M674 249L674 256M647 397L650 389M719 234L716 230M722 395L715 391M717 321L722 316M691 287L696 286M645 250L641 254M615 328L625 326M723 401L716 397M671 281L680 284M701 304L692 301M651 374L657 379M617 318L616 310M703 229L709 221M704 374L700 367M639 345L640 337M670 333L673 338M650 254L641 254M723 346L723 352M680 342L675 351M652 270L645 274M691 339L697 341M626 386L626 380M612 368L618 369M640 199L634 206M618 300L611 295M630 395L635 389M691 266L694 270M646 329L638 331M692 259L685 263M639 279L638 289M688 322L698 318M652 270L642 268M634 305L642 301M662 226L654 222M716 328L711 322M719 234L711 237M657 258L649 264M652 270L658 271M702 381L703 386M612 344L621 345M696 286L691 277M628 314L622 314M701 254L690 251M685 307L692 301M623 241L623 232M619 388L621 377M632 342L640 337M706 213L705 207M696 373L686 371M659 210L669 211M688 400L689 394M624 352L632 358M639 324L644 323M729 331L725 335M678 365L686 363M711 237L709 228M721 374L729 378M611 386L615 381M696 325L688 322M705 399L702 404M646 353L650 349M692 241L698 246M648 245L645 250M639 324L630 321M645 274L635 275M687 200L682 195M695 381L703 386M701 254L706 261M688 193L678 191M633 244L636 249M688 213L690 207M713 280L713 286M663 280L657 277M659 210L667 206M689 233L698 235M705 207L708 201M654 395L659 398M686 330L687 335M677 278L675 269M623 241L633 244M728 340L729 331M645 345L650 349M704 374L714 374M626 370L618 369M688 193L694 196M679 319L676 327M719 234L724 239M730 369L721 374M639 296L642 301M635 300L642 301M656 296L648 299M700 335L706 336M645 345L646 353M621 201L621 190M711 206L706 213M680 342L687 335M685 256L679 252M725 202L730 207M649 225L641 226M710 382L702 381M694 395L698 389M612 260L617 266M659 240L661 246M635 237L635 230M696 348L690 347M638 289L631 295M642 260L650 254M664 259L657 258M712 190L727 191M613 357L613 350M679 319L671 320M658 216L654 222M670 299L680 302M690 314L695 309M680 203L675 212M669 378L666 370M669 225L671 219M705 399L711 400M716 217L706 213M652 302L646 309M692 259L701 254M698 318L702 314M721 374L715 368M648 299L646 309M652 310L646 309M682 392L673 390M702 351L710 352M646 294L639 296M630 234L626 225M675 262L674 256M725 304L730 299M719 281L726 286M652 292L648 299M684 207L687 200M670 348L673 338M632 348L621 345M701 291L696 286M692 259L700 264M662 251L657 258M678 365L671 367M646 353L646 361M651 374L656 368M685 223L688 213M723 346L716 342M677 278L682 277M639 324L634 314M630 395L633 403M647 397L636 397M653 337L658 335M668 385L662 374M653 213L644 215M723 291L722 298M683 313L688 322M652 343L647 337M687 356L697 354M704 320L711 322M676 197L671 191M698 361L704 356M635 335L640 337M647 316L655 320M719 359L729 361M703 229L694 229M680 203L684 207M708 405L702 404M648 245L642 238M646 294L646 285M641 311L647 316M666 341L670 348M617 266L618 256M644 215L654 222M717 405L711 400M648 245L648 237M688 213L692 220M680 380L686 371M719 281L725 273M703 244L698 246M716 336L725 335M725 304L722 298M694 202L690 207M678 334L687 335M611 195L615 191M717 301L717 309M657 287L657 277M621 201L615 191M692 301L691 295M729 356L730 349M669 272L677 278M651 276L645 274M705 191L697 191M623 335L619 339M730 299L722 298M635 237L642 238M613 255L610 237M702 199L705 191M699 224L703 229M729 331L722 324M723 232L729 235M622 268L628 264M619 388L630 395M709 367L700 367M696 212L705 207M677 400L688 400M632 223L628 219M719 267L725 273M699 205L702 199M643 391L635 389M719 267L717 259M722 331L725 335M707 392L715 391M698 235L694 229M682 277L675 269M675 351L679 357M701 254L698 246M696 325L705 326M667 237L662 234M716 217L709 221M719 359L729 356M724 253L717 259M659 355L663 365M612 260L618 256M724 239L729 235M711 249L722 246M666 341L664 350M716 230L711 237M708 405L711 400M658 264L657 258M700 335L705 326M717 301L709 293M694 196L687 200M652 302L656 296M668 385L675 380M677 295L680 284M649 197L649 204M635 230L626 225M722 316L722 324M619 388L615 381M723 352L729 356M666 393L672 396M647 316L654 325M639 362L632 365M621 358L613 350M631 259L636 249M625 257L618 256M626 380L631 375M623 299L616 292M695 309L692 301M629 202L619 207M640 199L635 190M635 381L635 389M653 213L654 222M694 202L694 196M726 286L729 292M668 291L670 299M652 383L657 379M632 342L635 335M687 200L690 207M729 260L729 250M624 352L621 358M624 365L615 363M721 374L716 379M706 311L702 314M719 281L725 279M729 226L726 216M613 395L622 399M634 211L628 219M634 264L642 268M637 218L640 212M691 339L687 335M634 197L629 195M717 259L709 256M651 374L642 376M730 311L722 316M640 199L641 205M619 388L622 399M616 224L621 217M663 280L658 271M671 367L673 374M657 385L650 389M711 206L715 201M702 279L710 274M645 345L647 337M722 331L716 328M646 329L640 337M698 235L698 246M676 197L666 199M709 367L698 361M689 233L692 241M652 270L657 277M681 268L675 269M623 232L630 234M683 313L685 307M622 399L616 401M702 272L710 274M666 231L662 234M727 395L728 386M612 304L618 300M717 309L722 316M667 285L662 292M696 405L702 404M665 268L675 269M617 318L615 328M675 262L665 268M677 400L682 405M616 285L622 288M628 273L628 264M680 243L690 251M690 314L688 322M651 283L657 287M666 393L659 398M705 399L696 405M702 351L704 356M666 199L671 191M676 327L666 324M715 315L709 317M689 378L680 380M696 348L702 345M632 348L632 342M659 398L664 402M656 362L650 358M622 282L614 277M671 219L665 218M724 263L725 273M730 369L721 368M635 230L641 226M637 368L639 362M724 253L729 250M671 359L666 357M716 230L716 223M707 287L701 291M650 254L657 258M686 330L688 322M729 361L721 368M691 385L689 394M611 338L611 320M664 333L666 341M726 286L725 279M723 389L723 380M647 316L642 317M635 237L642 245M646 294L648 299M723 389L728 386M715 315L711 322M710 352L702 345M715 201L718 195M707 392L711 400M649 204L659 210M658 264L649 264M694 270L700 264M722 331L722 324M726 216L722 225M696 405L688 400M719 267L710 274M722 331L729 331M686 363L692 367M626 213L634 206M725 304L717 301M658 200L649 204M667 237L674 234M625 257L626 248M619 388L626 386M716 217L716 223M612 288L616 292M685 223L679 225M642 245L645 250M678 191L682 195M727 395L722 395M624 365L621 358M642 376L635 381M691 339L700 335M643 391L650 389M705 399L707 392M629 202L626 213M692 330L688 322M639 324L646 329M716 397L722 395M665 218L659 210M649 367L646 361M709 317L711 322M631 295L627 303M685 223L694 229M615 328L619 339M682 392L683 386M656 362L656 368M647 337L640 337M673 240L680 243M657 385L660 393M624 352L632 348M675 262L681 268M719 267L713 267M671 219L669 211M656 362L649 367M612 344L619 339M631 295L639 296M626 386L621 377M692 330L696 325M694 196L697 191M721 374L714 374M716 230L723 232M691 287L685 286M723 291L726 286M679 319L688 322M639 279L646 285M705 237L698 235M707 392L716 385M670 333L678 334M652 343L650 349M653 213L649 204M654 244L661 246M708 405L696 405M635 381L626 380M716 253L724 253M639 324L638 331M682 392L689 394M658 200L666 199M684 352L685 343M631 295L635 300M612 201L611 195M670 348L666 357M639 279L645 274M676 311L680 302M663 365L656 368M644 215L641 226M652 310L652 302M716 217L722 208M686 300L685 307M660 325L664 333M666 393L660 393M664 350L656 351M689 233L683 229M711 400L715 391M724 263L719 267M670 333L666 341M725 273L729 260M690 251L698 246M622 399L627 400M680 260L685 263M632 358L621 358M666 231L662 226M656 250L661 246M725 202L715 201M666 231L674 234M671 367L678 372M715 315L722 316M680 203L687 200M716 397L715 391M622 288L622 282M649 367L643 370M698 361L692 361M670 333L664 333M634 314L630 321M696 405L682 405M725 202L718 195M612 288L610 281M666 370L663 365M640 355L632 358M649 204L646 209M650 254L649 264M654 331L653 337M671 359L663 365M684 352L679 357M652 270L649 264M639 345L632 342M723 401L727 395M651 276L657 277M701 304L704 297M628 314L630 321M660 325L662 318M662 251L656 250M631 375L632 365M640 199L634 197M613 255L620 249M636 397L630 395M616 224L626 225M616 285L614 277M679 252L680 260M715 201L722 208M662 374L656 368M612 304L616 310M716 223L722 225M642 301L648 299M626 213L621 217M686 300L680 302M639 362L632 358M654 236L648 237M704 320L696 325M723 346L730 349M625 257L628 264M705 251L698 246M722 246L724 239M611 386L610 376M680 380L683 386M686 363L679 357M611 386L611 402M615 328L611 320M706 336L711 332M635 190L629 195M652 310L660 309M719 359L715 368M617 318L623 321M674 228L679 225M702 381L696 373M640 355L646 353M730 281L726 286M696 325L698 318M645 383L650 389M695 381L698 389M708 304L717 301M631 259L634 264M659 341L652 343M702 279L694 270M666 231L669 225M613 395L619 388M673 240L674 234M641 311L634 314M617 266L622 268M704 320L702 314M722 246L729 242M622 288L631 295M643 391L636 397M716 223L709 228M673 240L667 237M702 351L696 348M657 314L662 318M662 318L666 324M713 267L706 261M704 219L703 229M667 237L669 245M645 383L652 383M709 367L704 356M626 370L632 365M671 281L663 280M716 379L714 374M678 191L671 191M673 306L680 302M622 314L616 310M685 256L685 263M715 315L717 321M662 374L666 370M654 236L659 240M716 217L711 206M614 245L610 237M669 211L667 206M628 273L618 272M678 365L678 372M702 351L697 354M641 205L634 206M725 304L723 310M647 337L653 337M659 355L666 357M687 356L679 357M628 219L626 225M637 368L632 365M649 197L658 200M684 352L690 347M628 314L634 314M646 353L650 358M706 261L709 256M621 345L613 350M654 395L650 389M675 203L666 199M708 304L706 311M660 325L655 320M700 335L696 325M651 283L652 292M675 380L673 374M696 348L697 354M649 225L643 231M724 253L729 260M664 259L668 253M671 281L668 291M691 266L685 263M637 368L642 376M639 279L635 275M678 334L676 327M632 223L637 218M640 355L646 361M632 358L632 348M696 373L700 367M680 203L682 195M642 402L636 397M678 365L679 357M669 225L674 228M659 341L653 337M682 392L677 400M725 202L722 208M626 380L626 370M702 279L691 277M613 395L611 386M643 391L647 397M670 403L682 405M668 291L680 284M704 320L709 317M716 397L711 400M633 403L627 400M643 391L645 383M691 287L691 277M619 388L611 386M657 379L656 368M639 279L630 283M611 295L616 292M656 296L662 292M616 236L610 237M662 251L668 253M710 342L702 345M639 362L646 361M621 345L623 335M728 340L723 346M682 392L672 396M650 358L656 351M712 190L697 191M717 405L716 397M648 237L642 238M613 395L616 401M620 249L618 256M711 206L705 207M657 314L655 320M653 404L659 398M704 374L702 381M713 243L711 249M701 304L702 314M675 351L666 357M635 237L633 244M704 320L705 326M651 374L649 367M618 256L623 262M616 285L622 282M719 359L711 358M701 291L697 298M666 199L664 191M722 246L724 253M717 301L716 292M704 219L692 220M664 301L670 299M670 299L662 292M670 348L675 351M716 385L723 380M634 211L637 218M705 251L709 256M634 211L640 212M692 241L698 235M634 305L627 303M696 212L688 213M711 249L716 253M612 201L619 207M717 348L723 352M642 402L647 397M654 244L659 240M730 207L726 216M666 199L667 206M725 202L727 191M621 201L629 202M694 395L688 400M692 259L691 266M671 367L666 370M659 355L656 351M658 216L659 210M703 229L709 228M662 251L661 246M654 236L662 234M709 293L713 286M616 224L614 215M618 300L616 292M626 213L619 207M716 336L716 342M623 232L626 225M654 395L660 393M642 301L646 309M706 336L710 342M727 321L722 324M653 404L664 402M642 260L649 264M727 321L729 331M659 355L650 358M650 389L652 383M691 266L700 264M616 374L621 377M695 381L702 381M611 313L611 320M639 362L643 370M611 338L619 339M686 300L692 301M642 260L641 254M634 314L625 309M651 374L643 370M723 401L729 403M634 305L635 300M711 206L708 201M679 252L690 251M719 234L723 232M629 330L638 331M729 250L729 242M681 268L685 263M716 336L710 342M725 304L730 311M685 223L680 216M635 300L627 303M611 295L610 281M668 315L676 311M657 314L660 309M677 295L685 293M665 218L669 211M713 243L711 237M643 231L641 226M621 201L619 207M668 385L662 387M690 314L683 313M666 393L673 390M645 345L639 345M649 264L642 268M618 300L625 309M636 397L635 389M687 273L691 277M660 309L664 301M702 272L700 264M730 299L730 311M713 280L719 281M685 293L691 295M612 268L610 273M647 397L654 395M630 283L622 282M713 267L717 259M694 270L691 277M705 237L709 228M644 323L654 325M716 336L716 328M640 199L649 197M671 219L679 225M723 232L722 225M617 318L611 313M654 244L654 236M640 355L645 345M634 206L640 212M625 326L630 321M657 385L662 387M715 368L721 368M612 201L612 208M707 392L698 389M620 249L626 248M621 377L618 369M664 333L658 335M646 285L645 274M629 330L623 335M623 299L618 300M623 241L630 234M709 317L702 314M660 309L662 318M647 191L635 190M675 203L669 211M709 293L716 292M660 309L658 301M614 215L619 207M639 296L635 300M707 392L703 386M615 381L621 377M656 362L659 355M658 200L659 210M713 243L724 239M692 367L686 371M655 320L662 318M717 348L710 352M648 245L656 250M710 382L707 392M612 260L613 255M659 341L656 351M645 250L636 249M723 380L728 386M680 284L682 277M704 374L710 382M666 341L673 338M719 281L719 267M657 385L652 383M703 244L698 235M684 352L687 356M702 351L702 345M668 253L674 256M699 224L704 219M675 203L667 206M614 245L623 241M669 378L668 385M630 283L635 275M728 340L730 349M649 225L651 231M613 357L615 363M717 348L716 342M647 397L647 405M614 245L613 255M614 277L610 281M666 393L662 387M680 342L685 343M704 374L709 367M626 213L628 219M659 341L666 341M692 259L690 251M719 359L721 368M648 245L642 245M675 203L676 197M660 309L673 306M645 345L652 343M622 399L623 405M624 365L626 370M712 190L709 196M652 302L658 301M651 231L656 229M680 380L675 380M711 322L711 332M685 307L680 302M676 327L682 325M659 341L664 333M717 309L706 311M730 197L727 191M671 320L676 311M652 310L658 301M649 367L650 358M641 311L646 309M724 263L717 259M629 330L630 321M719 281L710 274M623 299L622 288M729 361L730 349M685 343L690 347M634 305L634 314M677 295L668 291M716 230L722 225M657 287L652 292M689 233L686 242M729 226L729 235M640 355L632 348M664 301L662 292M626 370L621 377M680 342L670 348M717 348L710 342M615 363L618 369M642 268L645 274M654 191L647 191M699 224L694 229M679 319L683 313M630 283L628 273M653 213L659 210M687 273L681 268M701 254L700 264M667 237L661 246M612 368L615 363M610 237L612 231M656 296L652 292M635 237L630 234M625 257L623 262M662 226L662 234M611 402L616 401M618 272L612 268M660 325L658 335M651 374L645 383M690 347L697 354M644 323L642 317M675 262L680 260M662 387L660 393M710 382L716 379M685 223L692 220M614 245L620 249M701 254L709 256M689 378L686 371M616 236L623 241M716 217L722 225M616 224L623 232M632 348L639 345M646 329L647 337M647 397L653 404M636 397L633 403M725 304L717 309M694 202L702 199M625 257L620 249M613 255L618 256M637 218L641 226M644 215L646 209M716 230L709 228M638 289L639 296M657 287L656 296M683 386L691 385M696 212L704 219M610 281L610 273M662 251L669 245M646 329L654 331M696 286L691 295M680 236L680 243M618 272L610 273M701 304L706 311M664 350L670 348M688 400L682 405M616 236L612 231M705 326L711 322M698 361L697 354M721 374L721 368M629 202L634 197M659 398L660 393M623 241L626 248M671 219L675 212M634 264L635 275M695 309L702 314M646 329L654 325M656 351L650 349M689 378L696 373M681 268L691 266M713 267L710 274M688 213L684 207M669 245L668 253M694 395L696 405M623 232L612 231M711 358L704 356M614 277L610 273M698 389L691 385M707 287L696 286M641 205L649 204M628 314L623 321M687 273L691 266M628 273L634 264M643 231L635 237M654 331L654 325M668 253L674 249M616 374L615 381M722 331L716 336M702 199L697 191M622 288L632 289M719 281L713 286M638 289L646 285M723 389L722 395M664 259L674 256M652 302L648 299M664 350L659 355M669 378L662 374M692 330L691 339M624 365L618 369M613 357L621 358M680 236L683 229M665 268L658 271M670 403L653 404M686 242L680 243M713 267L702 272M694 395L691 385M729 331L730 349M624 352L613 350M668 291L662 292M678 191L676 197M656 250L650 254M663 280L657 287M671 359L671 367M680 216L675 212M670 403L677 400M703 244L705 251M639 324L642 317M730 311L723 310M729 378L723 380M692 241L686 242M682 277L685 286M642 245L633 244M646 294L642 301M694 395L689 394M717 348L719 359M621 217L619 207M652 310L647 316M699 205L705 207M662 374L663 365M696 373L692 367M713 243L705 237M618 272L614 277M647 316L644 323M658 216L665 218M659 240L662 234M642 376L643 370M704 320L698 318M696 348L697 341M669 272L665 268M662 374L662 387M670 403L672 396M705 399L708 405M641 254L636 249M707 287L709 293M653 213L646 209M690 314L685 307M655 320L654 325M723 291L729 292M680 243L674 249M629 202L629 195M630 234L635 230M648 245L650 254M621 217L626 225M729 292L722 298M701 254L705 251M680 342L673 338M704 374L696 373M632 358L624 365M615 328L623 321M730 369L729 378M613 357L612 368M647 337L654 331M615 328L623 335M729 226L723 232M642 245L642 238M715 315L706 311M729 242L724 239M623 299L627 303M656 296L658 301M713 243L722 246M685 223L683 229M680 216L684 207M658 264L664 259M727 321L730 311M716 253L717 259M717 301L722 298M642 268L635 275M648 237L651 231M621 201L611 195M691 339L685 343M683 313L676 311M680 236L674 228M694 202L699 205M692 367L692 361M723 389L715 391M723 401L717 405M677 295L680 302M668 315L662 318M651 283L651 276M669 272L675 269M669 225L665 218M719 281L716 292M705 399L698 389M702 199L705 207M717 321L722 324M614 215L612 231M669 378L675 380M717 348L723 346M730 299L729 292M699 205L690 207M709 317L706 311M631 295L632 289M624 352L621 345M713 243L703 244M662 234L656 229M710 382L714 374M664 259L675 262M700 335L697 341M717 405L708 405M621 190L629 195M680 236L689 233M670 333L676 327M630 234L633 244M641 311L634 305M704 219L709 221M680 236L674 234M708 304L717 309M622 268L623 262M669 211L675 212M636 249L626 248M686 300L691 295M680 216L688 213M657 385L654 395M637 368L643 370M716 336L711 332M625 309L616 310M678 365L686 371M695 381L696 373M668 315L673 306M716 292L722 298M621 345L619 339M671 359L675 351M702 272L694 270M631 259L625 257M668 315L671 320M678 334L680 342M642 376L631 375M622 288L616 292M706 261L700 264M616 236L623 232M639 324L629 330M646 361L643 370M614 245L616 236M669 272L663 280M670 299L673 306M698 235L703 229M680 203L675 203M730 281L729 292M678 334L673 338M677 278L680 284M683 386L673 390M640 337L638 331M730 281L725 273M621 217L628 219M617 318L611 320M625 309L627 303M705 237L703 229M640 199L647 191M697 354L704 356M710 382L716 385M708 304L709 293M626 386L630 395M684 352L680 342M646 209L640 212M658 216L662 226M671 367L663 365M622 314L623 321M657 379L662 387M696 212L699 205M706 213L709 221M685 223L689 233M643 231L642 238M611 338L615 328M698 389L703 386M668 291L667 285M702 199L708 201M642 376L645 383M670 403L664 402M643 231L648 237M654 331L658 335M705 237L711 237M671 320L662 318M664 301L656 296M709 367L711 358M671 219L680 216M702 199L709 196M725 202L730 197M716 253L709 256M678 372L673 374M621 201L612 201M633 244L626 248M666 393L668 385M657 287L662 292M721 374L723 380M612 304L611 295M632 223L626 225M686 371L678 372M618 272L622 282M664 259L665 268M673 390L672 396M638 289L630 283M713 280L707 287M716 292L713 286M635 381L631 375M692 330L687 335M654 244L648 237M618 272L622 268M659 240L667 237M658 200L664 191M723 346L725 335M646 294L652 292M723 389L727 395M651 283L646 285M669 225L662 226M669 272L658 271M651 374L652 383M685 256L680 260M701 291L691 295M692 259L685 256M684 352L675 351M671 320L676 327M647 191L664 191M650 358L650 349M704 297L697 298M691 339L690 347M637 368L631 375M674 228L683 229M611 313L616 310M663 280L667 285M682 277L691 277M660 325L654 331M651 283L645 274M617 318L622 314M696 212L706 213M652 270L658 264M668 385L673 390M702 199L694 196M658 200L667 206M664 333L666 324M688 193L687 200M677 400L672 396"/>
<path fill="#2a2ccc"  d="M725.3,228.0 C722.4,233.7 712.2,249.2 708.0,262.0 C703.8,274.8 701.0,290.1 700.0,304.8 C699.0,319.5 700.5,335.5 702.0,350.0 C703.5,364.5 707.8,384.8 709.0,391.7 L725.3,396 Z"/>
<path fill="#0ab8e8"  d="M725.3,281 Q716,311 725.3,341 Z"/>
<path fill="none" stroke="#050a18" stroke-width="1.1" d="M655.0,197.0 C650.8,204.2 636.2,222.0 630.0,240.0 C623.8,258.0 618.3,287.3 617.5,304.8 C616.7,322.3 620.2,333.0 625.0,345.0 C629.8,357.0 642.5,371.4 646.0,376.7 Q700,396 725.3,396"/>
<path fill="none" stroke="#050a18" stroke-width="1.1" d="M725.3,228.0 C722.4,233.7 712.2,249.2 708.0,262.0 C703.8,274.8 701.0,290.1 700.0,304.8 C699.0,319.5 700.5,335.5 702.0,350.0 C703.5,364.5 707.8,384.8 709.0,391.7"/>
<path fill="none" stroke="#050a18" stroke-width="0.8" d="M725.3,258 Q712,300 725.3,352 M632.5,191 L655,197 M632.5,376 L646,376.7 M632.5,376 L725.3,402 M646,380 L655,392 L725.3,410"/>
<ellipse cx="587" cy="393" rx="38" ry="43" fill="#0a30c8" stroke="#050a18" stroke-width="1"/>
<ellipse cx="589" cy="391" rx="35" ry="40" fill="#3a48e4"/>
<path fill="#2856dc"  d="M553,395 A30,35 0 1,0 613,395 A30,35 0 1,0 553,395 Z"/>
<path clip-path="url(#c12)" fill="none" stroke="#06284a" stroke-opacity="0.5" stroke-width="0.7" d="M570 385L572 391M550 397L550 409M607 382L609 376M555 374L556 382M572 391L569 397M585 417L581 420M585 396L583 391M563 399L559 393M595 390L600 387M566 404L563 399M568 420L570 415M597 358L587 362M587 410L579 408M570 385L565 381M563 399L555 396M556 427L561 431M579 408L578 402M598 382L605 377M577 383L573 378M615 364L613 368M603 384L600 387M566 404L569 397M578 358L571 358M556 382L550 378M593 415L596 420M598 374L594 379M605 377L607 382M599 369L604 372M589 377L594 379M570 385L577 383M561 431L565 428M586 423L590 420M573 423L568 432M615 402L612 406M575 415L573 423M555 422L551 421M591 366L599 363M563 399L559 404M568 420L565 428M601 423L606 425M605 377L598 374M566 404L572 411M608 369L611 361M564 366L560 365M601 423L596 420M571 367L578 373M596 420L597 426M609 388L613 383M610 394L616 391M591 393L583 391M581 395L583 401M586 427L582 429M612 430L607 431M611 361L615 358M559 378L561 373M586 405L590 406M582 386L579 378M610 418L605 418M551 371L558 369M608 399L615 402M587 410L595 409M587 410L586 405M577 383L572 391M595 409L600 415M564 366L561 373M562 407L566 409M597 402L603 398M605 418L610 411M591 366L591 373M586 427L586 423M572 411L570 415M612 424L606 425M550 409L554 416M575 364L571 358M595 396L592 400M615 410L610 411M601 423L600 430M600 415L605 418M575 431L568 432M554 363L560 365M600 430L607 431M553 391L559 393M609 388L607 382M599 369L599 363M573 423L581 420M578 358L587 362M611 361L604 365M585 396L592 400M584 375L578 373M603 384L607 382M570 385L573 378M606 425L607 431M608 399L608 407M613 368L609 376M566 392L569 397M561 413L554 416M581 395L578 391M600 415L604 411M595 409L597 402M606 391L610 394M587 381L594 379M581 368L578 373M585 370L591 373M562 407L559 404M579 408L575 405M575 364L578 373M570 373L573 378M566 376L566 371M599 369L591 373M582 363L585 370M558 369L554 363M610 394L609 388M589 377L584 375M601 423L597 426M600 393L603 398M565 388L570 385M591 366L587 362M615 402L616 391M556 427L555 422M593 384L594 379M612 424L615 416M554 363L556 359M585 417L580 413M586 387L591 393M604 411L610 411M612 430L606 425M572 411L579 408M555 396L553 401M593 384L591 393M565 415L566 409M579 408L583 401M568 420L573 423M593 415L595 409M564 366L558 369M592 425L586 423M559 386L559 393M564 366L562 360M599 369L604 365M597 402L592 400M550 383L559 386M593 415L590 420M606 391L600 393M589 377L591 373M600 393L600 387M585 370L587 362M606 391L609 388M554 416L555 407M554 416L551 421M584 375L581 368M600 430L606 425M602 404L603 398M578 391L575 395M553 401L555 407M598 382L600 387M591 373L598 374M553 401L559 404M565 388L572 391M575 415L581 420M585 417L590 420M569 363L571 358M599 369L598 374M601 423L605 418M561 413L559 417M595 409L600 408M602 404L604 411M595 390L595 396M568 420L565 415M595 396L597 402M608 407L604 411M565 388L565 381M585 396L583 401M565 388L559 386M610 411L612 406M551 371L550 361M608 399L612 406M608 369L613 368M612 430L615 416M608 369L609 376M550 397L550 383M572 411L575 405M608 369L604 372M598 382L593 384M592 425L586 427M566 392L572 391M575 405L578 402M591 366L592 361M563 399L569 397M578 425L573 423M608 407L610 411M562 360L569 363M598 374L604 372M550 409L553 401M605 377L609 376M585 370L591 366M555 407L559 404M581 420L586 423M582 363L587 362M559 378L556 382M561 431L568 432M615 416L610 411M615 377L613 383M579 378L584 375M575 395L569 397M581 395L575 395M612 430L612 424M555 407L562 407M609 376L604 372M595 409L590 406M579 378L587 381M578 391L582 386M555 374L558 369M607 382L613 383M592 425L596 420M555 422L559 417M600 408L604 411M586 387L593 384M582 386L586 387M595 390L591 393M615 410L612 406M550 383L553 391M610 418L610 411M602 359L607 359M600 430L597 426M551 371L550 378M571 367L569 363M587 410L585 417M596 420L590 420M587 410L590 406M598 382L603 384M558 369L560 365M555 374L559 378M586 423L582 429M570 415L566 409M606 391L603 398M615 364L615 358M561 431L553 432M556 382L559 386M578 391L583 391M587 362L592 361M561 425L565 428M581 395L585 396M555 396L553 391M595 396L591 393M572 411L575 415M565 381L573 378M615 358L607 359M578 425L582 429M602 404L608 407M566 371L571 367M589 377L587 381M582 363L578 358M555 374L551 371M558 369L561 373M573 423L570 415M590 431L582 429M586 405L579 408M611 361L613 368M585 396L591 393M586 405L592 400M566 404L566 409M572 411L566 409M615 416L615 410M555 396L550 397M551 371L554 363M566 376L565 381M610 394L615 402M578 425L586 423M606 391L600 387M592 400L583 401M561 431L561 425M575 431L578 425M565 388L566 392M611 361L615 364M604 365L604 372M604 365L607 359M550 397L553 401M555 374L561 373M608 399L610 394M591 373L594 379M568 420L561 425M602 359L599 363M615 377L613 368M575 415L580 413M579 378L577 383M582 386L583 391M573 423L565 428M555 396L559 393M578 358L575 364M575 431L573 423M606 425L605 418M575 364L569 363M566 404L559 404M590 431L597 426M554 363L550 361M593 415L600 415M592 425L597 426M586 387L583 391M566 376L570 373M564 366L569 363M615 377L615 364M575 395L578 402M565 388L559 393M608 369L604 365M603 384L605 377M565 428L568 432M581 395L583 391M597 358L607 359M570 373L578 373M566 404L562 407M575 364L581 368M578 391L572 391M595 390L600 393M599 363L592 361M593 415L585 417M565 381L559 386M575 395L572 391M601 423L600 415M578 425L581 420M566 376L559 378M597 402L600 408M582 386L587 381M566 404L575 405M555 396L559 404M585 370L581 368M586 427L590 431M603 384L609 388M584 375L587 381M587 410L580 413M575 364L571 367M604 365L599 363M595 390L593 384M595 396L600 393M566 392L559 393M600 415L600 408M600 430L590 431M586 387L587 381M602 404L608 399M564 366L571 367M561 425L559 417M566 371L564 366M575 415L570 415M605 377L604 372M602 404L597 402M566 376L573 378M579 378L573 378M602 359L597 358M554 416L559 417M593 384L600 387M602 359L604 365M593 384L587 381M578 391L577 383M578 373L573 378M556 427L551 421M561 413L565 415M608 407L612 406M575 431L582 429M592 425L590 420M561 425L555 422M586 405L583 401M550 383L550 378M566 371L570 373M550 361L556 359M592 400L591 393M581 395L578 402M566 376L561 373M603 384L606 391M585 370L584 375M554 416L555 422M591 366L599 369M597 358L599 363M615 402L615 410M565 415L559 417M579 408L580 413M591 373L584 375M556 427L553 432M608 399L606 391M598 382L594 379M597 402L590 406M562 360L560 365M581 420L580 413M561 413L566 409M582 363L581 368M597 358L592 361M598 382L598 374M606 425L610 418M565 415L570 415M585 417L586 423M553 391L559 386M600 415L596 420M604 411L605 418M575 395L575 405M613 383L609 376M550 383L556 382M578 402L583 401M613 383L616 391M550 409L555 407M582 386L577 383M609 388L616 391M550 409L551 421M550 397L553 391M559 378L565 381M556 427L561 425M555 374L550 378M559 378L559 386M553 432L551 421M570 373L571 367M593 415L587 410M575 415L579 408M611 361L607 359M615 416L610 418M592 425L590 431M575 405L569 397M592 400L590 406M561 413L555 407M562 360L571 358M563 399L566 392M579 378L578 373M602 404L600 408M582 363L575 364M566 371L561 373M612 424L610 418M615 377L609 376M562 360L556 359M568 420L559 417M615 377L616 391M608 399L603 398M595 396L603 398M561 413L562 407M556 359L560 365"/>
<ellipse cx="583" cy="395" rx="30" ry="35" fill="none" stroke="#050a18" stroke-width="1"/>
<path fill="url(#screwg)"  d="M811.8,261 Q830,243 855,238.5 L993,276 Q1006,282 1006,295 L1006,405 Q1000,425 971,429 L959,427 L811.8,388 Z"/>
<path clip-path="url(#c13)" fill="none" stroke="#06284a" stroke-opacity="0.5" stroke-width="0.7" d="M1005 317L1000 295M956 240L976 253M916 405L949 424M956 240L934 237M854 339L837 359M934 237L912 236M1009 252L1000 295M923 329L938 291M976 253L942 260M916 405L876 425M991 346L970 308M854 339L875 319M876 425L873 398M883 282L903 302M964 282L938 291M863 252L860 283M886 241L912 236M822 400L840 428M996 373L1009 416M963 360L944 389M875 319L856 305M836 289L835 326M910 362L931 351M811 332L808 265M865 377L873 398M813 366L822 400M944 389L982 403M919 280L942 260M910 362L897 334M923 329L910 362M835 326L837 359M811 332L837 359M1005 317L1009 252M865 377L899 384M963 360L991 346M952 338L970 308M886 241L838 246M893 409L876 425M934 237L942 260M836 289L838 246M836 289L808 265M899 384L922 381M938 291L970 308M838 246L808 242M897 334L903 302M938 291L903 302M865 377L875 351M811 332L813 366M1009 252L976 253M996 373L982 403M996 373L991 346M944 389L922 381M838 246L808 265M856 305L860 283M865 377L837 359M923 329L903 302M923 329L952 338M916 405L922 381M876 425L840 428M964 282L970 308M835 326L810 298M811 332L810 298M883 282L875 319M919 280L883 282M875 319L903 302M919 280L938 291M886 241L863 252M854 339L835 326M873 398L899 384M865 377L838 382M873 398L840 428M893 409L873 398M835 326L856 305M964 282L1000 295M963 360L952 338M883 282L863 252M808 265L808 242M910 362L922 381M897 334L875 351M996 272L1000 295M813 366L837 359M854 339L856 305M837 359L838 382M822 400L838 382M982 403L949 424M836 289L810 298M970 308L1000 295M1005 317L991 346M886 241L919 280M1005 317L970 308M886 241L883 282M899 384L875 351M938 291L942 260M883 282L860 283M916 405L899 384M931 351L922 381M811 332L835 326M813 366L838 382M822 400L806 424M897 334L875 319M996 272L964 282M838 246L860 283M883 282L856 305M875 319L875 351M952 338L931 351M963 360L931 351M1009 416L982 403M863 252L838 246M840 428L838 382M873 398L838 382M810 298L808 265M813 366L806 424M964 282L942 260M910 362L899 384M996 272L1009 252M916 405L893 409M944 389L916 405M840 428L806 424M949 424L971 428M919 280L903 302M964 282L976 253M893 409L899 384M996 373L1005 317M1009 416L971 428M923 329L931 351M996 272L976 253M952 338L938 291M836 289L860 283M910 362L875 351M956 240L1009 252M912 236L942 260M919 280L912 236M944 389L931 351M956 240L942 260M944 389L949 424M854 339L875 351M923 329L897 334M865 377L854 339M963 360L996 373M963 360L982 403M836 289L856 305M982 403L971 428M952 338L991 346"/>
<path fill="#0a0cc4"  d="M811.8,262 Q830,243 855,238.5 L993,276 Q1006,282 1006,295 L958.6,300 L811.8,290 Z"/>
<path fill="#1418d4"  d="M811.3,262.3 Q815.0,240.0 842.0,238.7 L857.0,242.0 Q828.0,244.0 822.7,269.3 Z"/>
<path fill="#2a2ce4"  d="M816.0,262.0 Q822.0,247.0 845.0,242.0 L850.0,244.0 Q828.0,248.0 821.0,263.0 Z"/>
<path fill="none" stroke="#050a18" stroke-width="1.1" d="M811.3,262.3 Q815.0,240.0 842.0,238.7 M822.7,269.3 Q828.0,244.0 857.0,242.0"/>
<path fill="#1418d4"  d="M834.7,267.6 Q838.4,245.3 865.4,244.0 L880.4,247.3 Q851.4,249.3 846.1,274.6 Z"/>
<path fill="#2a2ce4"  d="M839.4,267.3 Q845.4,252.3 868.4,247.3 L873.4,249.3 Q851.4,253.3 844.4,268.3 Z"/>
<path fill="none" stroke="#050a18" stroke-width="1.1" d="M834.7,267.6 Q838.4,245.3 865.4,244.0 M846.1,274.6 Q851.4,249.3 880.4,247.3"/>
<path fill="#1418d4"  d="M858.1,272.9 Q861.8,250.6 888.8,249.3 L903.8,252.6 Q874.8,254.6 869.5,279.9 Z"/>
<path fill="#2a2ce4"  d="M862.8,272.6 Q868.8,257.6 891.8,252.6 L896.8,254.6 Q874.8,258.6 867.8,273.6 Z"/>
<path fill="none" stroke="#050a18" stroke-width="1.1" d="M858.1,272.9 Q861.8,250.6 888.8,249.3 M869.5,279.9 Q874.8,254.6 903.8,252.6"/>
<path fill="#1418d4"  d="M881.5,278.2 Q885.2,255.9 912.2,254.6 L927.2,257.9 Q898.2,259.9 892.9,285.2 Z"/>
<path fill="#2a2ce4"  d="M886.2,277.9 Q892.2,262.9 915.2,257.9 L920.2,259.9 Q898.2,263.9 891.2,278.9 Z"/>
<path fill="none" stroke="#050a18" stroke-width="1.1" d="M881.5,278.2 Q885.2,255.9 912.2,254.6 M892.9,285.2 Q898.2,259.9 927.2,257.9"/>
<path fill="#1418d4"  d="M904.9,283.5 Q908.6,261.2 935.6,259.9 L950.6,263.2 Q921.6,265.2 916.3,290.5 Z"/>
<path fill="#2a2ce4"  d="M909.6,283.2 Q915.6,268.2 938.6,263.2 L943.6,265.2 Q921.6,269.2 914.6,284.2 Z"/>
<path fill="none" stroke="#050a18" stroke-width="1.1" d="M904.9,283.5 Q908.6,261.2 935.6,259.9 M916.3,290.5 Q921.6,265.2 950.6,263.2"/>
<path fill="#1418d4"  d="M928.3,288.8 Q932.0,266.5 959.0,265.2 L974.0,268.5 Q945.0,270.5 939.7,295.8 Z"/>
<path fill="#2a2ce4"  d="M933.0,288.5 Q939.0,273.5 962.0,268.5 L967.0,270.5 Q945.0,274.5 938.0,289.5 Z"/>
<path fill="none" stroke="#050a18" stroke-width="1.1" d="M928.3,288.8 Q932.0,266.5 959.0,265.2 M939.7,295.8 Q945.0,270.5 974.0,268.5"/>
<path fill="#1418d4"  d="M951.7,294.1 Q955.4,271.8 982.4,270.5 L997.4,273.8 Q968.4,275.8 963.1,301.1 Z"/>
<path fill="#2a2ce4"  d="M956.4,293.8 Q962.4,278.8 985.4,273.8 L990.4,275.8 Q968.4,279.8 961.4,294.8 Z"/>
<path fill="none" stroke="#050a18" stroke-width="1.1" d="M951.7,294.1 Q955.4,271.8 982.4,270.5 M963.1,301.1 Q968.4,275.8 997.4,273.8"/>
<path fill="#0a0cb8"  d="M822.7,268.4 L834.9,271.4 L834.9,288.4 L822.7,285.4 Z"/>
<path fill="#4646ee"  d="M813.0,279.7 L822.7,269.3 L822.7,284.0 Z"/>
<path fill="none" stroke="#050a18" stroke-width="1.1" d="M822.7,285.4 L822.7,268.4 L834.9,271.4 L834.9,288.4"/>
<path fill="#0a0cb8"  d="M846.1,273.7 L858.3,276.7 L858.3,293.7 L846.1,290.7 Z"/>
<path fill="#4646ee"  d="M836.4,285.0 L846.1,274.6 L846.1,289.3 Z"/>
<path fill="none" stroke="#050a18" stroke-width="1.1" d="M846.1,290.7 L846.1,273.7 L858.3,276.7 L858.3,293.7"/>
<path fill="#0a0cb8"  d="M869.5,279.0 L881.7,282.0 L881.7,299.0 L869.5,296.0 Z"/>
<path fill="#4646ee"  d="M859.8,290.3 L869.5,279.9 L869.5,294.6 Z"/>
<path fill="none" stroke="#050a18" stroke-width="1.1" d="M869.5,296.0 L869.5,279.0 L881.7,282.0 L881.7,299.0"/>
<path fill="#0a0cb8"  d="M892.9,284.3 L905.1,287.3 L905.1,304.3 L892.9,301.3 Z"/>
<path fill="#4646ee"  d="M883.2,295.6 L892.9,285.2 L892.9,299.9 Z"/>
<path fill="none" stroke="#050a18" stroke-width="1.1" d="M892.9,301.3 L892.9,284.3 L905.1,287.3 L905.1,304.3"/>
<path fill="#0a0cb8"  d="M916.3,289.6 L928.5,292.6 L928.5,309.6 L916.3,306.6 Z"/>
<path fill="#4646ee"  d="M906.6,300.9 L916.3,290.5 L916.3,305.2 Z"/>
<path fill="none" stroke="#050a18" stroke-width="1.1" d="M916.3,306.6 L916.3,289.6 L928.5,292.6 L928.5,309.6"/>
<path fill="#0a0cb8"  d="M939.7,294.9 L951.9,297.9 L951.9,314.9 L939.7,311.9 Z"/>
<path fill="#4646ee"  d="M930.0,306.2 L939.7,295.8 L939.7,310.5 Z"/>
<path fill="none" stroke="#050a18" stroke-width="1.1" d="M939.7,311.9 L939.7,294.9 L951.9,297.9 L951.9,314.9"/>
<path fill="#0008b8"  d="M958.6,300 Q970,290 993,290 Q1006,295 1006,300 L1006,405 Q1000,425 971,429 L959,427 Z"/>
<path fill="none" stroke="#050a18" stroke-width="1.1" d="M811.8,300 L907,322.6 L922,337.6 L922,363.7 L910.8,373 L811.8,345 M811.8,352 L905,378"/>
<path fill="#0a0ab0" stroke="#050a18" stroke-width="0.9" d="M817.0,372.4 L829.0,375.4 L829.0,392.4 L817.0,389.4 Z"/>
<path fill="#0a0ab0" stroke="#050a18" stroke-width="0.9" d="M840.0,378.5 L852.0,381.5 L852.0,398.5 L840.0,395.5 Z"/>
<path fill="#0a0ab0" stroke="#050a18" stroke-width="0.9" d="M863.0,384.6 L875.0,387.6 L875.0,404.6 L863.0,401.6 Z"/>
<path fill="#0a0ab0" stroke="#050a18" stroke-width="0.9" d="M886.5,390.8 L898.5,393.8 L898.5,410.8 L886.5,407.8 Z"/>
<path fill="#0a0ab0" stroke="#050a18" stroke-width="0.9" d="M910.0,397.0 L922.0,400.0 L922.0,417.0 L910.0,414.0 Z"/>
<path fill="#0a0ab0" stroke="#050a18" stroke-width="0.9" d="M933.0,403.1 L945.0,406.1 L945.0,423.1 L933.0,420.1 Z"/>
<path fill="none" stroke="#050a18" stroke-width="1.1" d="M811.8,261 Q830,243 855,238.5 L993,276 Q1006,282 1006,295 L1006,405 Q1000,425 971,429 L959,427 L811.8,388 M958.6,300 L959,427"/>
<path fill="url(#ht)"  d="M809.7,460.0 L853.6,440.0 L1057.0,493.0 L1057.0,531.0 Z"/>
<path clip-path="url(#c14)" fill="none" stroke="#06284a" stroke-opacity="0.5" stroke-width="0.7" d="M907 461L869 496M991 440L929 437M989 505L1041 523M1045 488L1041 523M833 527L825 488M966 458L991 440M954 493L966 458M1041 523L952 530M954 493L997 471M1041 523L1059 457M1031 436L991 440M831 457L825 488M831 457L886 437M1031 436L1059 457M929 437L886 437M911 523L905 492M869 496L825 488M952 530L869 526M911 523L869 526M869 496L886 437M907 461L966 458M989 505L952 530M907 461L886 437M966 458L997 471M1045 488L1059 457M954 493L911 523M954 493L907 461M833 527L869 526M954 493L905 492M1031 436L1045 488M1031 436L997 471M869 496L911 523M869 496L905 492M869 496L869 526M911 523L952 530M989 505L1045 488M989 505L997 471M907 461L905 492M1045 488L997 471M907 461L929 437M954 493L989 505M997 471L991 440M966 458L929 437M831 457L869 496M954 493L952 530M869 496L833 527"/>
<path fill="url(#hs0)"  d="M809.3,459.9 L822.5,463.7 L822.5,608.5 L809.3,604.9 Z"/>
<path fill="url(#hs1)"  d="M821.7,463.4 L834.8,467.2 L834.8,611.9 L821.7,608.3 Z"/>
<path fill="url(#hs2)"  d="M834.0,467.0 L847.2,470.8 L847.2,615.3 L834.0,611.7 Z"/>
<path fill="url(#hs3)"  d="M846.4,470.5 L859.6,474.3 L859.6,618.7 L846.4,615.1 Z"/>
<path fill="url(#hs4)"  d="M858.8,474.1 L871.9,477.9 L871.9,622.1 L858.8,618.5 Z"/>
<path fill="url(#hs5)"  d="M871.1,477.6 L884.3,481.4 L884.3,625.5 L871.1,621.9 Z"/>
<path fill="url(#hs6)"  d="M883.5,481.2 L896.7,485.0 L896.7,628.9 L883.5,625.3 Z"/>
<path fill="url(#hs7)"  d="M895.9,484.7 L909.0,488.5 L909.0,632.3 L895.9,628.7 Z"/>
<path fill="url(#hs8)"  d="M908.2,488.3 L921.4,492.1 L921.4,635.7 L908.2,632.1 Z"/>
<path fill="url(#hs9)"  d="M920.6,491.8 L933.8,495.6 L933.8,639.1 L920.6,635.5 Z"/>
<path fill="url(#hs10)"  d="M933.0,495.4 L946.1,499.2 L946.1,642.5 L933.0,638.9 Z"/>
<path fill="url(#hs11)"  d="M945.3,498.9 L958.5,502.7 L958.5,645.9 L945.3,642.3 Z"/>
<path fill="url(#hs12)"  d="M957.7,502.5 L970.8,506.3 L970.8,649.3 L957.7,645.7 Z"/>
<path fill="url(#hs13)"  d="M970.0,506.0 L983.2,509.8 L983.2,652.7 L970.0,649.1 Z"/>
<path fill="url(#hs14)"  d="M982.4,509.6 L995.6,513.4 L995.6,656.1 L982.4,652.5 Z"/>
<path fill="url(#hs15)"  d="M994.8,513.1 L1007.9,516.9 L1007.9,659.5 L994.8,655.9 Z"/>
<path fill="url(#hs16)"  d="M1007.1,516.7 L1020.3,520.5 L1020.3,662.9 L1007.1,659.3 Z"/>
<path fill="url(#hs17)"  d="M1019.5,520.2 L1032.7,524.0 L1032.7,666.3 L1019.5,662.7 Z"/>
<path fill="url(#hs18)"  d="M1031.9,523.8 L1045.0,527.6 L1045.0,669.7 L1031.9,666.1 Z"/>
<path fill="url(#hs19)"  d="M1044.2,527.3 L1057.4,531.1 L1057.4,673.1 L1044.2,669.5 Z"/>
<path clip-path="url(#chf)" fill="none" stroke="#06284a" stroke-opacity="0.5" stroke-width="0.7" d="M915 678L976 674M988 549L939 533M988 549L1013 585M1060 557L1049 625M1060 557L1055 484M871 489L841 514M852 633L886 656M825 673L915 678M939 533L896 513M811 556L841 514M1013 585L1022 543M988 549L944 576M852 633L855 596M811 556L847 549M855 596L847 549M825 673L886 656M935 478L970 515M950 647L976 674M857 455L896 461M1019 501L970 515M811 556L808 477M994 474L1019 501M881 561L939 533M1049 625L1000 646M1055 484L1022 543M988 549L1022 543M935 478L896 461M950 647L1000 646M825 673L813 636M841 514L847 549M808 477L857 455M976 674L1035 671M881 561L944 576M935 478L896 513M896 513L847 549M841 514L808 477M1000 646L976 674M871 489L857 455M881 561L896 513M1055 484L1019 501M988 549L1019 501M989 614L1013 585M852 633L813 636M871 489L896 461M915 616L915 678M915 616L944 576M1026 458L1019 501M881 561L855 596M1019 501L1022 543M989 614L944 576M825 673L852 633M871 489L896 513M915 616L886 656M1049 625L1035 671M1060 557L1013 585M841 514L857 455M915 616L855 596M811 556L855 596M915 616L881 561M988 549L989 614M994 474L1026 458M994 474L970 515M1049 625L1013 585M935 478L994 474M841 514L896 513M896 513L896 461M811 556L813 636M855 596L813 636M939 533L970 515M915 678L886 656M989 614L1049 625M1060 557L1022 543M915 616L950 647M950 647L915 678M1000 646L1035 671M989 614L950 647M950 647L944 576M994 474L896 461M989 614L1000 646M1055 484L1026 458M935 478L939 533M881 561L847 549M988 549L970 515M915 616L852 633M939 533L944 576"/>
<path fill="none" stroke="#050a18" stroke-width="1.1" d="M1057,566.7 L895,523 L885,530 L883.5,573.3 L892,587 L1057,633 M1057,572 L898,529 L890,535 L889,571 L896,582 L1057,627"/>
<path fill="none" stroke="#a0a0a0" stroke-width="0.8" d="M874,441 L1057,484.6 M875,232 L1000,266"/>
<path fill="none" stroke="#050a18" stroke-width="1.1" d="M369.0,523.5 C367.4,521.9 362.3,518.1 359.3,513.8 C356.3,509.5 354.2,504.1 351.2,497.6 C348.2,491.1 345.8,482.5 341.5,474.9 C337.2,467.3 331.4,461.4 325.2,452.2 C319.0,443.0 310.1,430.5 304.2,419.7 C298.3,408.9 293.7,398.1 289.6,387.3 C285.5,376.5 282.2,365.7 279.8,354.9 C277.4,344.1 276.1,331.5 275.0,322.4 C273.9,313.2 273.4,307.6 273.5,300.0 C273.6,292.4 274.4,284.6 275.5,277.0 C276.6,269.4 278.1,261.3 280.0,254.6 C281.9,247.9 284.1,243.0 286.7,236.7 C289.3,230.3 292.3,222.5 295.7,216.5 C299.1,210.5 303.2,205.7 306.9,200.8 C310.6,195.9 313.1,192.2 318.0,187.3 C322.9,182.4 329.2,177.2 336.0,171.6 C342.8,166.0 352.1,158.2 358.5,153.7 C364.9,149.2 367.8,147.5 374.2,144.7 C380.6,141.9 388.8,139.1 396.6,136.8 C404.5,134.6 417.2,132.1 421.3,131.2 L505,150 L536,162 C542.6,161.4 561.5,150.3 575.7,144.0 C589.9,137.7 605.9,130.7 621.0,127.0 C636.1,123.3 651.3,122.4 666.5,122.0 C681.7,121.6 695.6,122.0 712.0,124.4 C728.4,126.8 746.7,130.4 765.0,136.5 C783.3,142.6 803.4,151.4 821.7,161.0 C840.0,170.6 865.8,188.5 874.6,194.0 L875,238 M875,405 L875,442 M873.6,622 L792,663 C789.7,663.9 782.5,667.2 778.0,668.5 C773.5,669.8 770.5,670.8 765.0,670.5 C759.5,670.2 751.2,669.2 745.0,667.0 C738.8,664.8 732.3,661.2 728.0,657.0 C723.7,652.8 721.0,647.3 719.0,642.0 C717.0,636.7 717.0,633.8 716.0,625.0 C715.0,616.2 713.7,595.3 713.2,589.4 L705.8,576.3 L616,555.8 L565.5,576.3 L532,569.4 L505.8,575 L457.3,559.8 L453.9,526.2 L458,519.4 L411.3,537.2 L369,523.5"/>
<path fill="none" stroke="#050a18" stroke-width="1.1" d="M356.3,185.0 C352.9,186.5 342.4,189.9 336.0,194.0 C329.6,198.1 323.6,203.4 318.0,209.8 C312.4,216.2 307.2,224.7 302.4,232.2 C297.6,239.7 292.4,247.1 289.0,254.6 C285.6,262.1 283.6,269.4 282.0,277.0 C280.4,284.6 279.6,292.4 279.5,300.0 C279.4,307.6 280.4,313.2 281.5,322.4 C282.6,331.6 283.9,344.2 286.3,355.0 C288.7,365.8 291.9,376.5 296.0,387.3 C300.1,398.1 304.8,408.9 310.7,419.7 C316.6,430.5 325.8,443.0 331.7,452.2 C337.6,461.4 342.6,467.7 346.3,475.0 C350.0,482.3 352.1,490.0 354.0,496.0 C355.9,502.0 357.2,508.5 357.8,511.0 L403,522.8 L458,498.8 M403,522.8 L411.3,537.2"/>
<path fill="none" stroke="#050a18" stroke-width="1.1" d="M421.3,131.2 C417.2,132.8 404.5,137.6 396.6,140.5 C388.8,143.4 380.6,145.0 374.2,148.5 C367.8,152.0 361.1,159.3 358.5,161.5"/>
<path fill="none" stroke="#050a18" stroke-width="1.1" d="M536.0,165.0 C545.8,164.3 575.4,160.1 594.6,161.0 C613.8,161.9 631.4,165.4 651.0,170.5 C670.6,175.6 693.0,184.5 712.0,191.4 C731.0,198.3 751.5,205.4 765.0,212.0 C778.5,218.6 788.6,227.8 793.3,231.0 L874.6,194 M793.3,231 L792,663 M536,165 L536,386 C537.5,391.7 541.0,411.0 545.0,420.0 C549.0,429.0 553.2,434.2 560.0,440.0 C566.8,445.8 576.0,451.4 586.0,454.8 C596.0,458.2 608.6,456.7 619.8,460.4 C631.0,464.1 643.4,470.0 653.4,477.2 C663.4,484.4 671.5,492.2 679.6,503.4 C687.7,514.6 696.4,530.2 702.0,544.5 C707.6,558.8 710.9,576.0 713.2,589.4 C715.5,602.8 715.0,616.2 716.0,625.0 C717.0,633.8 717.0,636.7 719.0,642.0 C721.0,647.3 723.7,652.8 728.0,657.0 C732.3,661.2 738.8,664.8 745.0,667.0 C751.2,669.2 759.5,670.2 765.0,670.5 C770.5,670.8 773.5,669.8 778.0,668.5 C782.5,667.2 789.7,663.9 792.0,663.0"/>
<path fill="none" stroke="#050a18" stroke-width="1.1" d="M398,194 L398,310 M412.7,175.6 Q420,169 437.9,169 L535,194 M437.9,169 L437,294 L535,317 M655,197 L725.5,213 L725.5,419 L633,394.7 L633,376 M633,192.2 L633,200 M481.3,319.5 L505.8,575 M498.6,319.5 L532,569.4 M809.7,460 L1057,531 M809.7,460 L809.7,605 M853.6,440 L809.7,460"/>
<path fill="none" stroke="#050a18" stroke-width="1.1" d="M473.9,322.4 L481.3,319.5 L505.8,575.0 L456.3,560.6 L452.0,526.6 L455.0,525.0 L455.0,506.5 L438.0,492.5 L450.0,474.0 L435.0,455.0 L447.0,439.5 L433.0,420.0 L443.0,406.0 L435.0,396.0 L440.0,388.0 L434.0,381.0 L432.0,375.0 L432.7,364.0 L438.0,357.0 L450.0,351.0 L465.0,345.0 L470.9,334.4 L472.4,326.2 Z"/>
<path fill="#000" stroke="#fff" stroke-width="0.8" d="M639.8,428.3 L639.8,443.3 L643.3,439.8 L645.8,445.3 L647.8,444.3 L645.3,438.8 L649.8,438.3 Z"/>

</svg>

<div id="tb">
  <div class="sep" style="left:43px"></div>
  <div class="sep" style="left:102px"></div>
  <div class="sep" style="left:186px"></div>
  <div class="sep" style="left:321px"></div>
  <div class="sep" style="left:385px"></div>
  <div class="sep" style="left:464px"></div>
  <div class="lbl" style="left:-1px">AINT</div>
  <div class="lbl" style="left:53px">LOAD</div>
  <div class="lbl" style="left:112px">CONTACT</div>
  <div class="lbl" style="left:224px;letter-spacing:-0.42px">DISPLAY</div>
  <div class="lbl" style="left:331px;letter-spacing:-0.4px">SOLVE</div>
  <div class="lbl" style="left:394.5px;letter-spacing:-0.1px">MANAGE</div>
  <div class="lbl" style="left:474px;letter-spacing:-0.7px">RESULTS</div>
  <div class="lbl" style="left:548px;letter-spacing:-0.62px">SELECT</div>
  <svg class="abs" style="left:0;top:0" width="607" height="61" viewBox="0 0 607 61">
    <defs>
      <linearGradient id="wg" x1="0" y1="0" x2="0" y2="1"><stop offset="0" stop-color="#f4f4f4"/><stop offset="0.55" stop-color="#e2e4e8"/><stop offset="0.6" stop-color="#b8c0cc"/><stop offset="1" stop-color="#a8b0bc"/></linearGradient>
      <radialGradient id="cg" gradientUnits="userSpaceOnUse" cx="252.4" cy="25.6" r="17"><stop offset="0" stop-color="#ff2000"/><stop offset="0.15" stop-color="#ff7000"/><stop offset="0.32" stop-color="#f0e000"/><stop offset="0.5" stop-color="#60e040"/><stop offset="0.68" stop-color="#00e0e0"/><stop offset="0.85" stop-color="#20a0ff"/><stop offset="1" stop-color="#2040ff"/></radialGradient>
      <radialGradient id="reel" cx="0.5" cy="0.5" r="0.5"><stop offset="0" stop-color="#222"/><stop offset="0.2" stop-color="#fff"/><stop offset="0.9" stop-color="#c8c8c8"/><stop offset="1" stop-color="#555"/></radialGradient>
      <linearGradient id="tlg" x1="0" y1="0" x2="0" y2="1"><stop offset="0" stop-color="#fafafa"/><stop offset="1" stop-color="#8a8a8a"/></linearGradient>
    </defs>
    <rect x="0" y="0" width="607" height="1" fill="#ebebeb"/>
    <path fill="#1a1a1a" d="M27.4,49.2 L32.6,49.2 L30.00,53 Z M86.6,49.2 L91.8,49.2 L89.20,53 Z M169.5,49.2 L174.7,49.2 L172.10,53 Z M272.0,49.2 L277.0,49.2 L274.50,53 Z M369.0,49.2 L374.0,49.2 L371.50,53 Z M444.5,49.2 L449.5,49.2 L447.00,53 Z M523.0,49.2 L528.0,49.2 L525.50,53 Z M590.5,49.2 L595.5,49.2 L593.00,53 Z "/>
    <!-- constraint partial -->
    <rect x="-3" y="14" width="10.5" height="6" rx="1" fill="url(#wg)" stroke="#222" stroke-width="0.9"/>
    <circle cx="3.3" cy="24.4" r="3" fill="#eee" stroke="#222" stroke-width="0.9"/>
    <line x1="0" y1="28.3" x2="8" y2="28.3" stroke="#222" stroke-width="1"/>
    <rect x="0" y="29" width="8" height="6.5" fill="#b8bcc8"/>
    <path d="M0,31 L4,35 M2,29 L8,35 M5,29 L8,32" stroke="#eee" stroke-width="0.9"/>
    <!-- load -->
    <line x1="61.5" y1="9" x2="61.5" y2="20" stroke="#222" stroke-width="1.1"/>
    <path d="M56.8,19 L66.2,19 L61.5,23.8 Z" fill="#222"/>
    <line x1="81.4" y1="9" x2="81.4" y2="20" stroke="#2a6ae0" stroke-width="1.1"/>
    <path d="M77,19 L86,19 L81.4,23.8 Z" fill="#2a6ae0"/>
    <rect x="57.3" y="25.5" width="28.3" height="6" rx="1.2" fill="url(#wg)" stroke="#222" stroke-width="0.9"/>
    <path d="M65.3,38.6 L71.4,32.4 L77.6,38.6 Z" fill="#d8dce4" stroke="#222" stroke-width="0.9"/>
    <!-- contact -->
    <rect x="128.5" y="24.5" width="15" height="9" rx="1" fill="url(#wg)" stroke="#222" stroke-width="0.9"/>
    <rect x="143.5" y="24.5" width="14.2" height="9" rx="1" fill="#98b6d6" stroke="#1a3060" stroke-width="0.9"/>
    <path d="M151.6,9 L152.6,13.5 L157,11 L154.3,14.8 L158.2,15.6 L154.3,16.6 L157,20.4 L152.6,17.8 L151.6,22.2 L150.6,17.8 L146.2,20.4 L148.9,16.6 L145,15.6 L148.9,14.8 L146.2,11 L150.6,13.5 Z" fill="#e03000"/>
    <circle cx="151.6" cy="15.6" r="3.4" fill="#ffd000"/>
    <circle cx="151.6" cy="15.6" r="1.6" fill="#fff8c0"/>
    <!-- display -->
    <rect x="195.3" y="11.4" width="14.2" height="14" rx="1" fill="url(#wg)" stroke="#222" stroke-width="0.9"/>
    <rect x="195.3" y="25.4" width="14.2" height="14.3" rx="1" fill="url(#wg)" stroke="#222" stroke-width="0.9"/>
    <rect x="209.5" y="25.4" width="14.2" height="14.3" rx="1" fill="url(#wg)" stroke="#222" stroke-width="0.9"/>
    <rect x="233.2" y="5.4" width="39" height="38.6" rx="1.5" fill="#5283b6"/>
    <path d="M238.4,11.6 L252.4,11.6 L252.4,25.6 L266.4,25.6 L266.4,39.6 L238.4,39.6 Z" fill="url(#cg)" stroke="#111" stroke-width="1"/>
    <path d="M238.4,25.6 L252.4,25.6 L252.4,39.6" fill="none" stroke="#111" stroke-width="1"/>
    <path d="M282.4,10.4 L296,10.4 L296,25 L309.8,25 L309.8,38.6 L282.4,38.6 Z" fill="#9bb6d8" stroke="#1a2a60" stroke-width="1"/>
    <path d="M285,12 L292,30 L290,38 M283,26 L300,22 M296,38 L307,27 M300,30 L309,36 M287,37 L296,25" fill="none" stroke="#5a7ab0" stroke-width="0.6"/>
    <!-- solve traffic light -->
    <path d="M338,13 L346,13 L346,20 L341,20 Z M338,21 L346,21 L346,28 L341,28 Z M338,29 L346,29 L346,36 L341,36 Z" fill="url(#tlg)" stroke="#333" stroke-width="0.6"/>
    <path d="M366.4,13 L358.4,13 L358.4,20 L363.4,20 Z M366.4,21 L358.4,21 L358.4,28 L363.4,28 Z M366.4,29 L358.4,29 L358.4,36 L363.4,36 Z" fill="url(#tlg)" stroke="#333" stroke-width="0.6"/>
    <rect x="345.8" y="9.3" width="12.6" height="29" rx="3" fill="#e0e0e0" stroke="#444" stroke-width="0.8"/>
    <rect x="347.3" y="12" width="9.6" height="24.5" rx="2" fill="#9a9a9a"/>
    <circle cx="352" cy="16.6" r="3.3" fill="#6a1010"/>
    <circle cx="352" cy="24.5" r="3.3" fill="#4a3810"/>
    <circle cx="352" cy="32.5" r="3.3" fill="#20e020"/>
    <!-- manage -->
    <rect x="409.4" y="9.3" width="29" height="29" rx="1.2" fill="#ececec" stroke="#222" stroke-width="0.9"/>
    <rect x="409.4" y="9.3" width="29" height="3.2" fill="#333"/>
    <rect x="410.4" y="28.5" width="27" height="7" fill="#b0b8c6"/>
    <rect x="410.4" y="35.5" width="27" height="2.4" fill="#a0a0a0"/>
    <rect x="414" y="16" width="4" height="4" fill="#3a8af0"/>
    <line x1="420" y1="18.3" x2="434" y2="18.3" stroke="#3a8af0" stroke-width="0.9"/>
    <rect x="414" y="23" width="4" height="4" fill="#777"/>
    <line x1="420" y1="25" x2="434" y2="25" stroke="#777" stroke-width="0.8"/>
    <rect x="414" y="30" width="4" height="4" fill="#777"/>
    <line x1="420" y1="32" x2="434" y2="32" stroke="#777" stroke-width="0.8"/>
    <!-- results projector -->
    <path d="M492,20 L495,27 M509,20 L503,27" stroke="#444" stroke-width="1.5"/>
    <circle cx="492" cy="16.3" r="6" fill="url(#reel)"/>
    <circle cx="509" cy="16.3" r="6.3" fill="url(#reel)"/>
    <path d="M490,27 L506,24.5 L509,27 L514,27 L514,33 L509,33 L507,37 L492,38.5 L490,36 Z" fill="url(#tlg)" stroke="#222" stroke-width="0.9"/>
    <rect x="493" y="33" width="3.5" height="2" fill="#555"/>
    <!-- select -->
    <rect x="552.2" y="5.4" width="39" height="38.6" rx="1.5" fill="#5283b6"/>
    <rect x="557.5" y="10" width="20.3" height="13.4" fill="none" stroke="#60b010" stroke-width="1.6"/>
    <path d="M577,23.4 L577,36 L580,33.2 L582.5,38.3 L584.6,37.3 L582.2,32.4 L586.3,32.2 Z" fill="#fff" stroke="#111" stroke-width="0.8"/>
  </svg>
</div>

<div id="legend">
  <div class="lg" style="left:9px">Stress</div>
  <div class="lg" style="left:120.5px">Von Mises</div>
  <div class="lg" style="left:211.5px">psi</div>
  <svg class="abs" style="left:0;top:0" width="310" height="22" viewBox="29 431 310 22">
    <path d="M131,439.6 L137,439.6 L134,443.8 Z M218,439.6 L224,439.6 L221,443.8 Z M264,439.6 L269.6,439.6 L266.8,443.8 Z" fill="#222"/>
    <g transform="translate(290.8,442.3)">
      <circle r="6.2" fill="#3a3a3a"/>
      <path d="M-1.6,-8 L1.6,-8 L1.8,-5 L-1.8,-5 Z" fill="#3a3a3a" transform="rotate(0)"/>
      <path d="M-1.6,-8 L1.6,-8 L1.8,-5 L-1.8,-5 Z" fill="#3a3a3a" transform="rotate(45)"/>
      <path d="M-1.6,-8 L1.6,-8 L1.8,-5 L-1.8,-5 Z" fill="#3a3a3a" transform="rotate(90)"/>
      <path d="M-1.6,-8 L1.6,-8 L1.8,-5 L-1.8,-5 Z" fill="#3a3a3a" transform="rotate(135)"/>
      <path d="M-1.6,-8 L1.6,-8 L1.8,-5 L-1.8,-5 Z" fill="#3a3a3a" transform="rotate(180)"/>
      <path d="M-1.6,-8 L1.6,-8 L1.8,-5 L-1.8,-5 Z" fill="#3a3a3a" transform="rotate(225)"/>
      <path d="M-1.6,-8 L1.6,-8 L1.8,-5 L-1.8,-5 Z" fill="#3a3a3a" transform="rotate(270)"/>
      <path d="M-1.6,-8 L1.6,-8 L1.8,-5 L-1.8,-5 Z" fill="#3a3a3a" transform="rotate(315)"/>
      <circle r="2.6" fill="#cfcfcf"/>
    </g>
    <defs><linearGradient id="trg" x1="0" y1="0" x2="1" y2="1"><stop offset="0" stop-color="#fff"/><stop offset="1" stop-color="#888"/></linearGradient></defs>
    <path d="M316.5,447.5 L327.5,436.8 L327.5,447.5 Z" fill="url(#trg)" stroke="#222" stroke-width="1"/>
  </svg>
</div>

<div class="abs" style="left:170px;top:477px;width:28px;height:252px;background:#d4d4d4;border-radius:9px;filter:blur(1.2px)"></div>
<div class="abs" style="left:173px;top:482px;width:22px;height:242px;background:#8a8a8a"></div>
<div class="abs" style="left:174px;top:483px;width:20px;height:240px;background:linear-gradient(to bottom,#f00000 0.0%,#ff2800 3.0%,#ff5000 6.0%,#ff8000 9.0%,#f0a800 12.0%,#e8d000 15.5%,#e8e800 18.0%,#e8e800 33.0%,#c8e400 36.0%,#90e000 41.0%,#40e800 45.0%,#00f000 48.0%,#00f000 57.0%,#00e070 60.0%,#00e0b0 63.0%,#00e0e0 67.0%,#00e0e0 80.0%,#00c0f0 83.0%,#0090f0 87.0%,#0060f0 91.0%,#0030f0 94.0%,#0010f0 97.0%,#0000f0 100.0%)"></div>
<div class="tick" style="left:194px;top:482.2px;width:10.5px;height:1.3px"></div>
<div class="tick" style="left:194px;top:521.3px;width:10.5px;height:1.3px"></div>
<div class="tick" style="left:194px;top:571.2px;width:10.5px;height:1.3px"></div>
<div class="tick" style="left:194px;top:621.4px;width:10.5px;height:1.3px"></div>
<div class="tick" style="left:194px;top:671.8px;width:10.5px;height:1.3px"></div>
<div class="tick" style="left:194px;top:722.1px;width:10.5px;height:1.3px"></div>
<div class="tick" style="left:194px;top:496.1px;width:5px;height:1.2px"></div>
<div class="tick" style="left:194px;top:546.4px;width:5px;height:1.2px"></div>
<div class="tick" style="left:194px;top:596.4px;width:5px;height:1.2px"></div>
<div class="tick" style="left:194px;top:647.0px;width:5px;height:1.2px"></div>
<div class="tick" style="left:194px;top:696.9px;width:5px;height:1.2px"></div>

<div class="cbl" style="left:223.5px;top:476.5px">16254 Max.</div>
<div class="cbl" style="left:223.5px;top:515.7px">13600</div>
<div class="cbl" style="left:223.5px;top:565.7px">10200</div>
<div class="cbl" style="left:223.5px;top:615.9px">6800</div>
<div class="cbl" style="left:223.5px;top:666.3px">3400</div>
<div class="cbl" style="left:223.5px;top:716.5px">0 Min.</div>

<div class="st" style="left:114px;top:742px;letter-spacing:0.5px">Nodes:</div>
<div class="st" style="left:214px;top:742px">146926</div>
<div class="st" style="left:114px;top:756px;letter-spacing:0.42px">Elements:</div>
<div class="st" style="left:214px;top:756px">93355</div>
</body></html>
